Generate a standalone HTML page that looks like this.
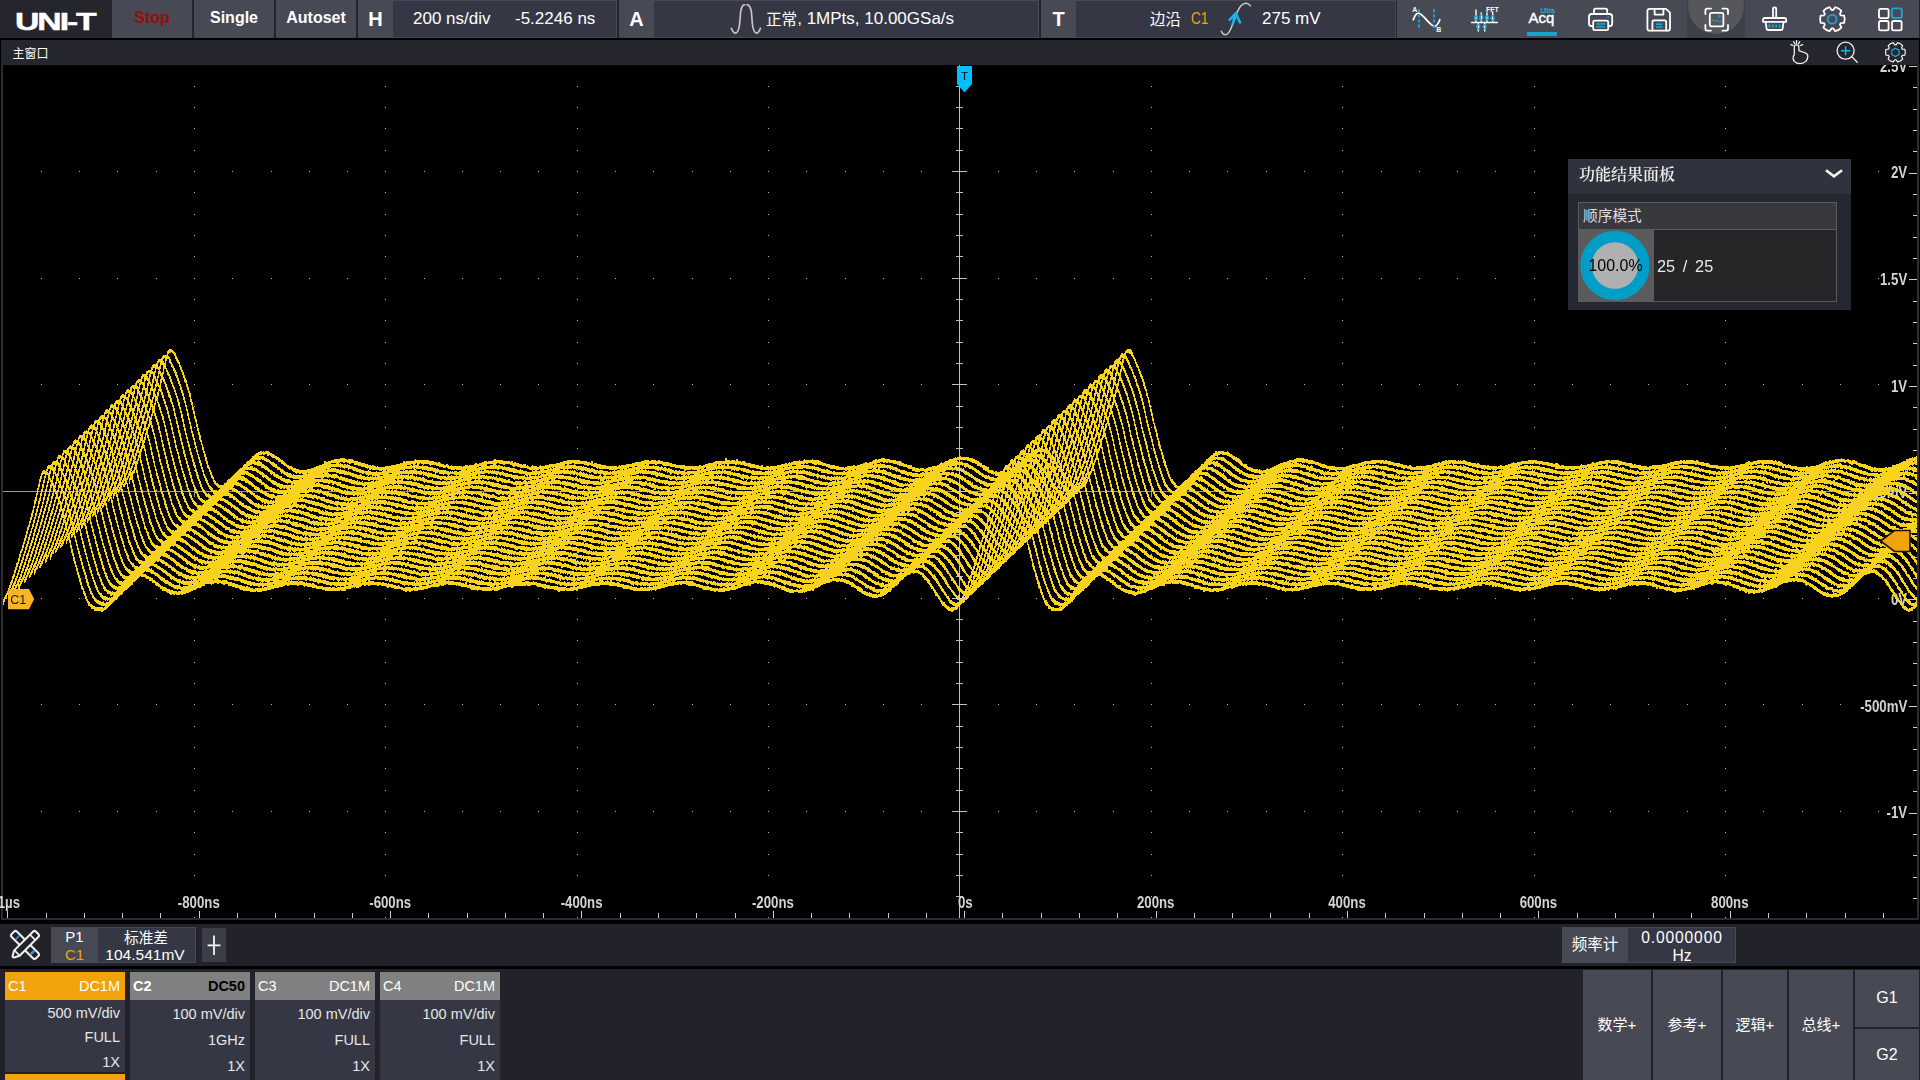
<!DOCTYPE html>
<html lang="zh">
<head>
<meta charset="utf-8">
<title>UNI-T Oscilloscope</title>
<style>
*{box-sizing:border-box;margin:0;padding:0}
html,body{width:1920px;height:1080px;overflow:hidden;background:#000}
body{position:relative;font-family:"Liberation Sans","Noto Sans CJK SC",sans-serif;color:#fff;font-size:16px}
.abs{position:absolute}
/* ---------- top bar ---------- */
#top{position:absolute;left:0;top:0;width:1920px;height:38px;background:#25262d}
#top .btn{position:absolute;top:0;height:38px;background:#474a54;text-align:center;font-weight:bold;font-size:16px;line-height:36px}
#top .grp{position:absolute;top:0;height:38px;background:#474a54}
#top .grp .lab{position:absolute;left:0;top:0;width:35px;height:38px;text-align:center;font-weight:bold;font-size:20px;line-height:38px}
#top .grp .in{position:absolute;top:1px;height:36px;background:#353844;font-size:17px;line-height:36px;white-space:nowrap}
#logo{position:absolute;left:14.6px;top:8.7px;width:60px;height:26px;font-weight:bold;font-size:24.4px;line-height:26px;transform:scaleX(1.385);transform-origin:0 50%;letter-spacing:-1.5px;white-space:nowrap;-webkit-text-stroke:.5px #fff}
.ico{position:absolute;top:0;height:38px}
/* ---------- window title bar ---------- */
#wbar{position:absolute;left:1px;top:40px;width:1918px;height:25px;background:#25262e}
#wbar .t{position:absolute;left:11.5px;top:1px;font-size:12px;line-height:26px}
/* ---------- plot ---------- */
#plot{position:absolute;left:0;top:65px;width:1920px;height:859px;background:#000;overflow:hidden;will-change:transform}
#plot svg{position:absolute;left:0;top:-65px}
/* ---------- result panel ---------- */
#rp{position:absolute;left:1568px;top:159px;width:283px;height:151px;background:rgba(40,43,52,.93)}
#rp .hd{position:absolute;left:0;top:0;width:283px;height:35px;background:rgba(48,52,62,.95)}
#rp .hd .t{position:absolute;left:11px;top:0;font-family:"Liberation Serif","Noto Serif CJK SC",serif;font-weight:600;font-size:16px;line-height:32px;color:#f0f0f0}
#rp .box{position:absolute;left:10px;top:43px;width:259px;height:100px;border:1px solid #5a5b5f;background:#262629}
#rp .box .bt{position:absolute;left:0;top:0;width:257px;height:27px;background:#38393f;border-bottom:1px solid #5a5b5f;font-size:14.7px;line-height:26px;padding-left:4px;color:#ddd}
#rp .box .pc{position:absolute;left:0;top:27px;width:75px;height:71px;background:#5b5b5b}
#rp .box .num{position:absolute;left:78px;top:27px;height:71px;line-height:72px;font-size:16.3px;color:#e8e8e8;white-space:pre;word-spacing:3.2px}
/* ---------- measure bar ---------- */
#mbar{position:absolute;left:0;top:924px;width:1920px;height:42px;background:#22232a}
/* ---------- channel bar ---------- */
#cbar{position:absolute;left:0;top:969px;width:1920px;height:111px;background:#22232a}
.ch{position:absolute;top:3px;width:120px;height:108px;background:#353844}
.ch .h{position:absolute;left:0;top:0;width:120px;height:28px;font-size:14.5px;line-height:28px}
.ch .h .l{position:absolute;left:3px}
.ch .h .r{position:absolute;right:5px}
.ch .v{position:absolute;right:5px;font-size:14.5px;line-height:18px;color:#e6e6e6;white-space:nowrap}
.bb{position:absolute;top:1px;height:110px;background:#474a54;text-align:center;font-size:15px}
</style>
</head>
<body>
<!-- ===== TOP BAR ===== -->
<div id="top">
<div id="logo">UNI-T</div>
<div class="btn" style="left:112px;width:80px;color:#9b0a0a">Stop</div>
<div class="btn" style="left:194px;width:80px">Single</div>
<div class="btn" style="left:276px;width:80px">Autoset</div>
<div class="grp" style="left:358px;width:259px"><div class="lab">H</div>
 <div class="in" style="left:35px;width:223px"><span class="abs" style="left:20px">200 ns/div</span><span class="abs" style="left:122px">-5.2246 ns</span></div></div>
<div class="grp" style="left:619px;width:420px"><div class="lab">A</div>
 <div class="in" style="left:35px;width:384px">
  <svg class="abs" style="left:76px;top:3px" width="32" height="32" viewBox="0 0 32 32"><path d="M1.4 24.4Q3.6 29.4 5.6 29.2Q8.6 28.6 9.6 20L10.6 8Q11.6 1.2 14.6 .6M17 .6Q20.4 1.2 21.4 8L22.4 20Q23.4 28.6 26.4 29.2Q28.4 29.4 30.4 24.4" fill="none" stroke="#c4c4c6" stroke-width="1.7" stroke-linecap="round" stroke-linejoin="round"/></svg>
  <span class="abs" style="left:112px"><span style="font-size:15.6px;position:relative;top:.5px">正常</span>, 1MPts, 10.00GSa/s</span></div></div>
<div class="grp" style="left:1041px;width:355px"><div class="lab">T</div>
 <div class="in" style="left:35px;width:319px"><span class="abs" style="left:74px;font-size:15.4px;top:.5px">边沿</span><span class="abs" style="left:115px;color:#f0a30a;transform:scaleX(.8);transform-origin:0 50%">C1</span>
  <svg class="abs" style="left:142px;top:1px" width="36" height="35" viewBox="0 0 36 35"><path d="M3.3 29.2Q5 33 7.5 32.8Q11 32.4 14 24L19 10.5Q22.5 2 27.5 1.2Q30.5 1 32.4 3.8" fill="none" stroke="#c9c9cb" stroke-width="1.5" stroke-linecap="round"/><path d="M14.7 22L17.8 11.5M11.6 17.8L17.8 11.5L22 20.4" fill="none" stroke="#19b4f0" stroke-width="2.6" stroke-linejoin="round" stroke-linecap="round"/></svg>
  <span class="abs" style="left:186px">275 mV</span></div></div>
<div class="grp" style="left:1397px;width:522px">
<div class="abs" style="left:290px;top:0;width:58px;height:38px;background:#3d3f49;overflow:hidden"><div class="abs" style="left:1px;top:-22px;width:56px;height:56px;border-radius:28px;background:#56575d"></div></div>
<svg class="abs" style="left:0;top:0" width="523" height="38" viewBox="1397 0 523 38" fill="none" stroke="#fff" stroke-width="1.8" stroke-linecap="round" stroke-linejoin="round">
 <!-- 1 cursors -->
 <path d="M1413.3 19.7C1415 15 1417 13.2 1418.6 13.2C1422.5 13.2 1430 26.3 1434.4 26.3C1436.5 26.3 1438.4 23.5 1439.8 19.7"/>
 <path d="M1419 9V30M1434 9V30" stroke="#1ea7d4" stroke-dasharray="3.2 2" stroke-linecap="butt"/>
 <text x="1412.3" y="12.3" stroke="none" fill="#fff" style="font:bold 7px 'Liberation Sans',sans-serif">A</text>
 <text x="1436.3" y="32" stroke="none" fill="#fff" style="font:bold 7px 'Liberation Sans',sans-serif">B</text>
 <!-- 2 FFT -->
 <path d="M1471.5 22.5H1497.5M1476 10V22.5M1481.3 13V22.5M1487 13V22.5M1492.7 12V22.5M1478.3 22.5V31M1484.7 22.5V31" stroke-width="1.4"/>
 <g stroke="#1ea7d4" stroke-width="1.4"><ellipse cx="1476" cy="18" rx="1.4" ry="2"/><ellipse cx="1481.3" cy="17.5" rx="1.4" ry="2.6"/><ellipse cx="1487" cy="18" rx="1.4" ry="2"/><ellipse cx="1492.7" cy="18" rx="1.4" ry="2.2"/><ellipse cx="1478.3" cy="26.7" rx="1.4" ry="2.3"/><ellipse cx="1484.7" cy="26.7" rx="1.4" ry="2"/></g>
 <text x="1486" y="11.5" stroke="none" fill="#fff" style="font:bold 7px 'Liberation Sans',sans-serif">FFT</text>
 <!-- 3 Acq -->
 <text x="1528.6" y="23.4" stroke="#fff" stroke-width=".45" fill="#fff" style="font:14.9px 'Liberation Sans',sans-serif">Acq</text>
 <text x="1540.4" y="12.5" stroke="#1ea7d4" stroke-width=".3" fill="#1ea7d4" style="font:6.8px 'Liberation Sans',sans-serif">Ultra</text>
 <rect x="1527" y="32" width="30" height="4" fill="#1aa3cc" stroke="none"/>
 <!-- 4 printer -->
 <path d="M1594 14V10.2Q1594 8.6 1595.6 8.6H1605.6Q1607.2 8.6 1607.2 10.2V14"/>
 <rect x="1589" y="14" width="23.2" height="12" rx="2.6"/>
 <rect x="1593.2" y="20.6" width="15" height="9.6" rx="1.5" fill="#474a54"/>
 <path d="M1596.3 24H1605M1596.3 26.8H1605" stroke="#1ea7d4" stroke-width="1.5" stroke-linecap="butt"/>
 <circle cx="1608.2" cy="17.2" r="0.9" fill="#1ea7d4" stroke="none"/>
 <!-- 5 save -->
 <path d="M1649.6 8.8H1666L1670 12.6V28.4Q1670 30.6 1667.8 30.6H1649.6Q1647.4 30.6 1647.4 28.4V11Q1647.4 8.8 1649.6 8.8Z"/>
 <path d="M1654.6 8.8V14.6H1663.4V8.8"/>
 <path d="M1652.4 30.6V22Q1652.4 20.4 1654 20.4H1664.6Q1666.2 20.4 1666.2 22V30.6"/>
 <path d="M1656 24.2H1662.4M1656 27H1662.4" stroke="#1ea7d4" stroke-width="1.5" stroke-linecap="butt"/>
 <!-- 6 capture -->
 <path d="M1705.4 14V10.4Q1705.4 8.6 1707.2 8.6H1711M1722.4 8.6H1726.2Q1728 8.6 1728 10.4V14M1728 25V28.8Q1728 30.6 1726.2 30.6H1722.4M1711 30.6H1707.2Q1705.4 30.6 1705.4 28.8V25"/>
 <rect x="1709.8" y="12.8" width="13.6" height="13.6" rx="2"/>
 <path d="M1711.6 21L1713 19.4L1714.3 21L1715.6 20L1716.8 21.4L1718 20.4L1719.4 22L1721.4 21" stroke="#1ea7d4" stroke-width="1"/>
 <path d="M1719.6 15V17.4M1718.4 16.2H1720.8" stroke="#1ea7d4" stroke-width="0.9"/>
 <!-- 7 brush -->
 <rect x="1773" y="7.4" width="3.2" height="10.6" rx="1.6"/>
 <path d="M1765 18H1784.2Q1786.2 18 1786.2 20V21.8H1763V20Q1763 18 1765 18Z"/>
 <path d="M1765.6 21.8L1766.6 28.6Q1766.8 30 1768.2 30H1781Q1782.4 30 1782.6 28.6L1783.6 21.8"/>
 <path d="M1769.4 24.4V27.6M1772.8 24.4V27.6M1776.2 24.4V27.6M1779.6 24.4V27.6" stroke="#1ea7d4" stroke-width="1.7" stroke-linecap="butt"/>
 <!-- 8 gear -->
 <path d="M1833.20 10.04L1835.17 7.22A12.30 12.30 0 0 1 1841.40 10.81L1839.94 13.92A9.20 9.20 0 0 1 1840.74 15.31L1840.74 15.31L1844.16 15.60A12.30 12.30 0 0 1 1844.16 22.80L1840.74 23.09A9.20 9.20 0 0 1 1839.94 24.48L1839.94 24.48L1841.40 27.59A12.30 12.30 0 0 1 1835.17 31.18L1833.20 28.36A9.20 9.20 0 0 1 1831.60 28.36L1831.60 28.36L1829.63 31.18A12.30 12.30 0 0 1 1823.40 27.59L1824.86 24.48A9.20 9.20 0 0 1 1824.06 23.09L1824.06 23.09L1820.64 22.80A12.30 12.30 0 0 1 1820.64 15.60L1824.06 15.31A9.20 9.20 0 0 1 1824.86 13.92L1824.86 13.92L1823.40 10.81A12.30 12.30 0 0 1 1829.63 7.22L1831.60 10.04A9.20 9.20 0 0 1 1833.20 10.04Z"/>
 <circle cx="1832.2" cy="19.3" r="4.4" stroke="#1ea7d4" stroke-width="1.7"/>
 <!-- 9 grid -->
 <rect x="1879" y="8.8" width="9.6" height="9.4" rx="1.6"/>
 <rect x="1879" y="21" width="9.6" height="9.4" rx="1.6"/>
 <rect x="1892" y="21" width="9.6" height="9.4" rx="1.6"/>
 <rect x="1892" y="8.4" width="9.8" height="9.4" rx="1.6" stroke="#1ea7d4"/>
</svg>

</div>

</div>
<div class="abs" style="left:0;top:38px;width:1920px;height:2px;background:#000"></div>
<!-- ===== WINDOW BAR ===== -->
<div id="wbar"><div class="t">主窗口</div>
<svg class="abs" style="left:1779px;top:0" width="140" height="25" viewBox="1780 40 140 25" fill="none" stroke="#f2f2f2" stroke-width="1.3" stroke-linecap="round" stroke-linejoin="round">
 <!-- tap hand -->
 <path d="M1794.3 54.8V47Q1794.3 44.9 1796.6 44.9Q1798.9 44.9 1798.9 47V50.6L1805.6 53Q1808 54 1807.8 56.6Q1807.6 59.6 1805.8 61.4Q1803.6 63.6 1800 63.6Q1796.6 63.6 1794.6 61.6Q1792.6 59.4 1793.2 56.8Q1793.5 55.5 1794.3 54.8"/>
 <path d="M1796.6 40.6V43.6M1793.7 41.7L1794.8 43.8M1799.7 41.7L1798.6 43.8M1790.8 44.6L1793 45.4M1802.6 44.6L1800.4 45.5" stroke-width="1.3"/>
 <!-- zoom -->
 <circle cx="1845.6" cy="50.7" r="8.5"/>
 <path d="M1851.8 56.6L1857.2 62.2"/>
 <path d="M1841 50.7H1850.2M1845.6 46.2V55.2" stroke="#19b4f0" stroke-width="1.5" stroke-linecap="butt"/>
 <!-- gear -->
 <path d="M1896.05 44.83L1897.63 42.65A9.90 9.90 0 0 1 1902.64 45.55L1901.54 48.00A7.50 7.50 0 0 1 1902.20 49.13L1902.20 49.13L1904.87 49.41A9.90 9.90 0 0 1 1904.87 55.19L1902.20 55.47A7.50 7.50 0 0 1 1901.54 56.60L1901.54 56.60L1902.64 59.05A9.90 9.90 0 0 1 1897.63 61.95L1896.05 59.77A7.50 7.50 0 0 1 1894.75 59.77L1894.75 59.77L1893.17 61.95A9.90 9.90 0 0 1 1888.16 59.05L1889.26 56.60A7.50 7.50 0 0 1 1888.60 55.47L1888.60 55.47L1885.93 55.19A9.90 9.90 0 0 1 1885.93 49.41L1888.60 49.13A7.50 7.50 0 0 1 1889.26 48.00L1889.26 48.00L1888.16 45.55A9.90 9.90 0 0 1 1893.17 42.65L1894.75 44.83A7.50 7.50 0 0 1 1896.05 44.83Z" stroke-width="1.2"/>
 <path d="M1895.4 48.2L1899 50.3V54.4L1895.4 56.5L1891.8 54.4V50.3Z" stroke="#19b4f0" stroke-width="1.1"/>
</svg>

</div>
<!-- ===== PLOT ===== -->
<div id="plot">
<svg width="1920" height="1080" viewBox="0 0 1920 1080">
<rect x="1" y="65" width="2" height="855" fill="#2a2b35"/>
<rect x="1917" y="65" width="2" height="855" fill="#2a2b35"/>
<rect x="1" y="918" width="1918" height="2" fill="#2a2b35"/>
<path d="M41 171.5h1M79 171.5h1M117 171.5h1M156 171.5h1M194 171.5h1M232 171.5h1M271 171.5h1M309 171.5h1M347 171.5h1M385 171.5h1M424 171.5h1M462 171.5h1M500 171.5h1M538 171.5h1M577 171.5h1M615 171.5h1M653 171.5h1M692 171.5h1M730 171.5h1M768 171.5h1M806 171.5h1M845 171.5h1M883 171.5h1M921 171.5h1M998 171.5h1M1036 171.5h1M1074 171.5h1M1113 171.5h1M1151 171.5h1M1189 171.5h1M1227 171.5h1M1266 171.5h1M1304 171.5h1M1342 171.5h1M1381 171.5h1M1419 171.5h1M1457 171.5h1M1495 171.5h1M1534 171.5h1M1572 171.5h1M1610 171.5h1M1648 171.5h1M1687 171.5h1M1725 171.5h1M1763 171.5h1M1802 171.5h1M1840 171.5h1M1878 171.5h1M41 278.5h1M79 278.5h1M117 278.5h1M156 278.5h1M194 278.5h1M232 278.5h1M271 278.5h1M309 278.5h1M347 278.5h1M385 278.5h1M424 278.5h1M462 278.5h1M500 278.5h1M538 278.5h1M577 278.5h1M615 278.5h1M653 278.5h1M692 278.5h1M730 278.5h1M768 278.5h1M806 278.5h1M845 278.5h1M883 278.5h1M921 278.5h1M998 278.5h1M1036 278.5h1M1074 278.5h1M1113 278.5h1M1151 278.5h1M1189 278.5h1M1227 278.5h1M1266 278.5h1M1304 278.5h1M1342 278.5h1M1381 278.5h1M1419 278.5h1M1457 278.5h1M1495 278.5h1M1534 278.5h1M1572 278.5h1M1610 278.5h1M1648 278.5h1M1687 278.5h1M1725 278.5h1M1763 278.5h1M1802 278.5h1M1840 278.5h1M1878 278.5h1M41 384.5h1M79 384.5h1M117 384.5h1M156 384.5h1M194 384.5h1M232 384.5h1M271 384.5h1M309 384.5h1M347 384.5h1M385 384.5h1M424 384.5h1M462 384.5h1M500 384.5h1M538 384.5h1M577 384.5h1M615 384.5h1M653 384.5h1M692 384.5h1M730 384.5h1M768 384.5h1M806 384.5h1M845 384.5h1M883 384.5h1M921 384.5h1M998 384.5h1M1036 384.5h1M1074 384.5h1M1113 384.5h1M1151 384.5h1M1189 384.5h1M1227 384.5h1M1266 384.5h1M1304 384.5h1M1342 384.5h1M1381 384.5h1M1419 384.5h1M1457 384.5h1M1495 384.5h1M1534 384.5h1M1572 384.5h1M1610 384.5h1M1648 384.5h1M1687 384.5h1M1725 384.5h1M1763 384.5h1M1802 384.5h1M1840 384.5h1M1878 384.5h1M41 491.5h1M79 491.5h1M117 491.5h1M156 491.5h1M194 491.5h1M232 491.5h1M271 491.5h1M309 491.5h1M347 491.5h1M385 491.5h1M424 491.5h1M462 491.5h1M500 491.5h1M538 491.5h1M577 491.5h1M615 491.5h1M653 491.5h1M692 491.5h1M730 491.5h1M768 491.5h1M806 491.5h1M845 491.5h1M883 491.5h1M921 491.5h1M998 491.5h1M1036 491.5h1M1074 491.5h1M1113 491.5h1M1151 491.5h1M1189 491.5h1M1227 491.5h1M1266 491.5h1M1304 491.5h1M1342 491.5h1M1381 491.5h1M1419 491.5h1M1457 491.5h1M1495 491.5h1M1534 491.5h1M1572 491.5h1M1610 491.5h1M1648 491.5h1M1687 491.5h1M1725 491.5h1M1763 491.5h1M1802 491.5h1M1840 491.5h1M1878 491.5h1M41 598.5h1M79 598.5h1M117 598.5h1M156 598.5h1M194 598.5h1M232 598.5h1M271 598.5h1M309 598.5h1M347 598.5h1M385 598.5h1M424 598.5h1M462 598.5h1M500 598.5h1M538 598.5h1M577 598.5h1M615 598.5h1M653 598.5h1M692 598.5h1M730 598.5h1M768 598.5h1M806 598.5h1M845 598.5h1M883 598.5h1M921 598.5h1M998 598.5h1M1036 598.5h1M1074 598.5h1M1113 598.5h1M1151 598.5h1M1189 598.5h1M1227 598.5h1M1266 598.5h1M1304 598.5h1M1342 598.5h1M1381 598.5h1M1419 598.5h1M1457 598.5h1M1495 598.5h1M1534 598.5h1M1572 598.5h1M1610 598.5h1M1648 598.5h1M1687 598.5h1M1725 598.5h1M1763 598.5h1M1802 598.5h1M1840 598.5h1M1878 598.5h1M41 704.5h1M79 704.5h1M117 704.5h1M156 704.5h1M194 704.5h1M232 704.5h1M271 704.5h1M309 704.5h1M347 704.5h1M385 704.5h1M424 704.5h1M462 704.5h1M500 704.5h1M538 704.5h1M577 704.5h1M615 704.5h1M653 704.5h1M692 704.5h1M730 704.5h1M768 704.5h1M806 704.5h1M845 704.5h1M883 704.5h1M921 704.5h1M998 704.5h1M1036 704.5h1M1074 704.5h1M1113 704.5h1M1151 704.5h1M1189 704.5h1M1227 704.5h1M1266 704.5h1M1304 704.5h1M1342 704.5h1M1381 704.5h1M1419 704.5h1M1457 704.5h1M1495 704.5h1M1534 704.5h1M1572 704.5h1M1610 704.5h1M1648 704.5h1M1687 704.5h1M1725 704.5h1M1763 704.5h1M1802 704.5h1M1840 704.5h1M1878 704.5h1M41 811.5h1M79 811.5h1M117 811.5h1M156 811.5h1M194 811.5h1M232 811.5h1M271 811.5h1M309 811.5h1M347 811.5h1M385 811.5h1M424 811.5h1M462 811.5h1M500 811.5h1M538 811.5h1M577 811.5h1M615 811.5h1M653 811.5h1M692 811.5h1M730 811.5h1M768 811.5h1M806 811.5h1M845 811.5h1M883 811.5h1M921 811.5h1M998 811.5h1M1036 811.5h1M1074 811.5h1M1113 811.5h1M1151 811.5h1M1189 811.5h1M1227 811.5h1M1266 811.5h1M1304 811.5h1M1342 811.5h1M1381 811.5h1M1419 811.5h1M1457 811.5h1M1495 811.5h1M1534 811.5h1M1572 811.5h1M1610 811.5h1M1648 811.5h1M1687 811.5h1M1725 811.5h1M1763 811.5h1M1802 811.5h1M1840 811.5h1M1878 811.5h1M194 86.5h1M194 107.5h1M194 128.5h1M194 150.5h1M194 192.5h1M194 214.5h1M194 235.5h1M194 256.5h1M194 299.5h1M194 320.5h1M194 342.5h1M194 363.5h1M194 406.5h1M194 427.5h1M194 448.5h1M194 470.5h1M194 512.5h1M194 534.5h1M194 555.5h1M194 576.5h1M194 619.5h1M194 640.5h1M194 662.5h1M194 683.5h1M194 726.5h1M194 747.5h1M194 768.5h1M194 790.5h1M194 832.5h1M194 854.5h1M194 875.5h1M194 896.5h1M194 917.5h1M385 86.5h1M385 107.5h1M385 128.5h1M385 150.5h1M385 192.5h1M385 214.5h1M385 235.5h1M385 256.5h1M385 299.5h1M385 320.5h1M385 342.5h1M385 363.5h1M385 406.5h1M385 427.5h1M385 448.5h1M385 470.5h1M385 512.5h1M385 534.5h1M385 555.5h1M385 576.5h1M385 619.5h1M385 640.5h1M385 662.5h1M385 683.5h1M385 726.5h1M385 747.5h1M385 768.5h1M385 790.5h1M385 832.5h1M385 854.5h1M385 875.5h1M385 896.5h1M385 917.5h1M577 86.5h1M577 107.5h1M577 128.5h1M577 150.5h1M577 192.5h1M577 214.5h1M577 235.5h1M577 256.5h1M577 299.5h1M577 320.5h1M577 342.5h1M577 363.5h1M577 406.5h1M577 427.5h1M577 448.5h1M577 470.5h1M577 512.5h1M577 534.5h1M577 555.5h1M577 576.5h1M577 619.5h1M577 640.5h1M577 662.5h1M577 683.5h1M577 726.5h1M577 747.5h1M577 768.5h1M577 790.5h1M577 832.5h1M577 854.5h1M577 875.5h1M577 896.5h1M577 917.5h1M768 86.5h1M768 107.5h1M768 128.5h1M768 150.5h1M768 192.5h1M768 214.5h1M768 235.5h1M768 256.5h1M768 299.5h1M768 320.5h1M768 342.5h1M768 363.5h1M768 406.5h1M768 427.5h1M768 448.5h1M768 470.5h1M768 512.5h1M768 534.5h1M768 555.5h1M768 576.5h1M768 619.5h1M768 640.5h1M768 662.5h1M768 683.5h1M768 726.5h1M768 747.5h1M768 768.5h1M768 790.5h1M768 832.5h1M768 854.5h1M768 875.5h1M768 896.5h1M768 917.5h1M1151 86.5h1M1151 107.5h1M1151 128.5h1M1151 150.5h1M1151 192.5h1M1151 214.5h1M1151 235.5h1M1151 256.5h1M1151 299.5h1M1151 320.5h1M1151 342.5h1M1151 363.5h1M1151 406.5h1M1151 427.5h1M1151 448.5h1M1151 470.5h1M1151 512.5h1M1151 534.5h1M1151 555.5h1M1151 576.5h1M1151 619.5h1M1151 640.5h1M1151 662.5h1M1151 683.5h1M1151 726.5h1M1151 747.5h1M1151 768.5h1M1151 790.5h1M1151 832.5h1M1151 854.5h1M1151 875.5h1M1151 896.5h1M1151 917.5h1M1342 86.5h1M1342 107.5h1M1342 128.5h1M1342 150.5h1M1342 192.5h1M1342 214.5h1M1342 235.5h1M1342 256.5h1M1342 299.5h1M1342 320.5h1M1342 342.5h1M1342 363.5h1M1342 406.5h1M1342 427.5h1M1342 448.5h1M1342 470.5h1M1342 512.5h1M1342 534.5h1M1342 555.5h1M1342 576.5h1M1342 619.5h1M1342 640.5h1M1342 662.5h1M1342 683.5h1M1342 726.5h1M1342 747.5h1M1342 768.5h1M1342 790.5h1M1342 832.5h1M1342 854.5h1M1342 875.5h1M1342 896.5h1M1342 917.5h1M1534 86.5h1M1534 107.5h1M1534 128.5h1M1534 150.5h1M1534 192.5h1M1534 214.5h1M1534 235.5h1M1534 256.5h1M1534 299.5h1M1534 320.5h1M1534 342.5h1M1534 363.5h1M1534 406.5h1M1534 427.5h1M1534 448.5h1M1534 470.5h1M1534 512.5h1M1534 534.5h1M1534 555.5h1M1534 576.5h1M1534 619.5h1M1534 640.5h1M1534 662.5h1M1534 683.5h1M1534 726.5h1M1534 747.5h1M1534 768.5h1M1534 790.5h1M1534 832.5h1M1534 854.5h1M1534 875.5h1M1534 896.5h1M1534 917.5h1M1725 86.5h1M1725 107.5h1M1725 128.5h1M1725 150.5h1M1725 192.5h1M1725 214.5h1M1725 235.5h1M1725 256.5h1M1725 299.5h1M1725 320.5h1M1725 342.5h1M1725 363.5h1M1725 406.5h1M1725 427.5h1M1725 448.5h1M1725 470.5h1M1725 512.5h1M1725 534.5h1M1725 555.5h1M1725 576.5h1M1725 619.5h1M1725 640.5h1M1725 662.5h1M1725 683.5h1M1725 726.5h1M1725 747.5h1M1725 768.5h1M1725 790.5h1M1725 832.5h1M1725 854.5h1M1725 875.5h1M1725 896.5h1M1725 917.5h1" stroke="#b9bcc8" stroke-width="1" shape-rendering="crispEdges" fill="none"/>
<path d="M1909 66.5h8M1913 87.5h4M1913 109.5h4M1913 130.5h4M1913 151.5h4M1909 173.5h8M1913 194.5h4M1913 215.5h4M1913 237.5h4M1913 258.5h4M1909 279.5h8M1913 301.5h4M1913 322.5h4M1913 343.5h4M1913 365.5h4M1909 386.5h8M1913 407.5h4M1913 429.5h4M1913 450.5h4M1913 471.5h4M1909 493.5h8M1913 514.5h4M1913 535.5h4M1913 557.5h4M1913 578.5h4M1909 599.5h8M1913 621.5h4M1913 642.5h4M1913 663.5h4M1913 685.5h4M1909 706.5h8M1913 727.5h4M1913 749.5h4M1913 770.5h4M1913 791.5h4M1909 813.5h8M1913 834.5h4M1913 855.5h4M1913 877.5h4M1913 898.5h4M7.5 911v7M46.5 913v5M84.5 913v5M122.5 913v5M160.5 913v5M199.5 911v7M237.5 913v5M275.5 913v5M314.5 913v5M352.5 913v5M390.5 911v7M428.5 913v5M467.5 913v5M505.5 913v5M543.5 913v5M581.5 911v7M620.5 913v5M658.5 913v5M696.5 913v5M735.5 913v5M773.5 911v7M811.5 913v5M849.5 913v5M888.5 913v5M926.5 913v5M964.5 911v7M1002.5 913v5M1041.5 913v5M1079.5 913v5M1117.5 913v5M1156.5 911v7M1194.5 913v5M1232.5 913v5M1270.5 913v5M1309.5 913v5M1347.5 911v7M1385.5 913v5M1424.5 913v5M1462.5 913v5M1500.5 913v5M1538.5 911v7M1577.5 913v5M1615.5 913v5M1653.5 913v5M1691.5 913v5M1730.5 911v7M1768.5 913v5M1806.5 913v5M1845.5 913v5M1883.5 913v5" stroke="#cfcfcf" stroke-width="1" shape-rendering="crispEdges" fill="none"/><path d="M3 491.5H1917M41.5 489v3M79.5 489v3M117.5 489v3M156.5 489v3M194.5 487v10M232.5 489v3M271.5 489v3M309.5 489v3M347.5 489v3M385.5 487v10M424.5 489v3M462.5 489v3M500.5 489v3M538.5 489v3M577.5 487v10M615.5 489v3M653.5 489v3M692.5 489v3M730.5 489v3M768.5 487v10M806.5 489v3M845.5 489v3M883.5 489v3M921.5 489v3M960.5 487v10M998.5 489v3M1036.5 489v3M1074.5 489v3M1113.5 489v3M1151.5 487v10M1189.5 489v3M1227.5 489v3M1266.5 489v3M1304.5 489v3M1342.5 487v10M1381.5 489v3M1419.5 489v3M1457.5 489v3M1495.5 489v3M1534.5 487v10M1572.5 489v3M1610.5 489v3M1648.5 489v3M1687.5 489v3M1725.5 487v10M1763.5 489v3M1802.5 489v3M1840.5 489v3M1878.5 489v3" stroke="#9a9a9a" stroke-width="1" shape-rendering="crispEdges" fill="none"/>
<text x="1907.2" y="71.6" text-anchor="end" textLength="27.2" lengthAdjust="spacingAndGlyphs" style="font-family:'Liberation Sans',sans-serif;font-weight:bold;font-size:16px;fill:#d4d4d4">2.5V</text>
<text x="1907.2" y="178.3" text-anchor="end" textLength="16.2" lengthAdjust="spacingAndGlyphs" style="font-family:'Liberation Sans',sans-serif;font-weight:bold;font-size:16px;fill:#d4d4d4">2V</text>
<text x="1907.2" y="284.9" text-anchor="end" textLength="27.2" lengthAdjust="spacingAndGlyphs" style="font-family:'Liberation Sans',sans-serif;font-weight:bold;font-size:16px;fill:#d4d4d4">1.5V</text>
<text x="1907.2" y="391.6" text-anchor="end" textLength="16.2" lengthAdjust="spacingAndGlyphs" style="font-family:'Liberation Sans',sans-serif;font-weight:bold;font-size:16px;fill:#d4d4d4">1V</text>
<text x="1907.2" y="498.3" text-anchor="end" textLength="42.6" lengthAdjust="spacingAndGlyphs" style="font-family:'Liberation Sans',sans-serif;font-weight:bold;font-size:16px;fill:#d4d4d4">500mV</text>
<text x="1907.2" y="604.9" text-anchor="end" textLength="16.2" lengthAdjust="spacingAndGlyphs" style="font-family:'Liberation Sans',sans-serif;font-weight:bold;font-size:16px;fill:#d4d4d4">0V</text>
<text x="1907.2" y="711.6" text-anchor="end" textLength="47.0" lengthAdjust="spacingAndGlyphs" style="font-family:'Liberation Sans',sans-serif;font-weight:bold;font-size:16px;fill:#d4d4d4">-500mV</text>
<text x="1907.2" y="818.3" text-anchor="end" textLength="20.6" lengthAdjust="spacingAndGlyphs" style="font-family:'Liberation Sans',sans-serif;font-weight:bold;font-size:16px;fill:#d4d4d4">-1V</text>
<text x="20" y="907.8" text-anchor="end" textLength="26.7" lengthAdjust="spacingAndGlyphs" style="font-family:'Liberation Sans',sans-serif;font-weight:bold;font-size:16px;fill:#d4d4d4">-1µs</text>
<text x="198.8" y="907.8" text-anchor="middle" textLength="41.9" lengthAdjust="spacingAndGlyphs" style="font-family:'Liberation Sans',sans-serif;font-weight:bold;font-size:16px;fill:#d4d4d4">-800ns</text>
<text x="390.2" y="907.8" text-anchor="middle" textLength="41.9" lengthAdjust="spacingAndGlyphs" style="font-family:'Liberation Sans',sans-serif;font-weight:bold;font-size:16px;fill:#d4d4d4">-600ns</text>
<text x="581.6" y="907.8" text-anchor="middle" textLength="41.9" lengthAdjust="spacingAndGlyphs" style="font-family:'Liberation Sans',sans-serif;font-weight:bold;font-size:16px;fill:#d4d4d4">-400ns</text>
<text x="772.9" y="907.8" text-anchor="middle" textLength="41.9" lengthAdjust="spacingAndGlyphs" style="font-family:'Liberation Sans',sans-serif;font-weight:bold;font-size:16px;fill:#d4d4d4">-200ns</text>
<text x="958" y="907.8" textLength="14.7" lengthAdjust="spacingAndGlyphs" style="font-family:'Liberation Sans',sans-serif;font-weight:bold;font-size:16px;fill:#d4d4d4">0s</text>
<text x="1155.7" y="907.8" text-anchor="middle" textLength="37.5" lengthAdjust="spacingAndGlyphs" style="font-family:'Liberation Sans',sans-serif;font-weight:bold;font-size:16px;fill:#d4d4d4">200ns</text>
<text x="1347.0" y="907.8" text-anchor="middle" textLength="37.5" lengthAdjust="spacingAndGlyphs" style="font-family:'Liberation Sans',sans-serif;font-weight:bold;font-size:16px;fill:#d4d4d4">400ns</text>
<text x="1538.4" y="907.8" text-anchor="middle" textLength="37.5" lengthAdjust="spacingAndGlyphs" style="font-family:'Liberation Sans',sans-serif;font-weight:bold;font-size:16px;fill:#d4d4d4">600ns</text>
<text x="1729.8" y="907.8" text-anchor="middle" textLength="37.5" lengthAdjust="spacingAndGlyphs" style="font-family:'Liberation Sans',sans-serif;font-weight:bold;font-size:16px;fill:#d4d4d4">800ns</text>
<defs>
<polygon id="w0" points="3,599.6 4,599.9 5,596.8 6,595.3 7,592.7 8,591.0 9,588.2 10,585.3 11,582.6 12,580.1 13,576.0 14,573.8 15,570.3 16,567.6 17,563.6 18,562.3 19,558.0 20,554.3 21,551.0 22,548.7 23,544.9 24,542.6 25,538.4 26,535.5 27,530.7 28,527.3 29,524.8 30,520.7 31,517.4 32,513.4 33,510.4 34,505.9 35,500.4 36,497.6 37,492.9 38,487.6 39,483.8 40,479.5 41,475.8 42,472.8 43,471.1 44,470.3 45,470.9 46,471.4 47,472.4 48,473.1 49,473.8 50,477.6 51,479.7 52,481.3 53,483.6 54,485.8 55,488.7 56,491.0 57,493.7 58,496.7 59,499.2 60,501.4 61,505.5 62,508.7 63,512.1 64,514.6 65,519.9 66,523.7 67,528.6 68,532.6 69,537.0 70,540.3 71,545.1 72,549.1 73,553.4 74,556.6 75,561.0 76,565.2 77,568.4 78,571.9 79,575.3 80,578.4 81,582.3 82,586.4 83,588.4 84,591.5 85,593.1 86,596.2 87,598.6 88,601.2 89,602.3 90,604.1 91,604.7 92,605.5 93,606.3 94,606.3 95,607.0 96,607.4 97,606.8 98,607.8 99,607.8 100,607.6 101,608.6 102,606.7 103,608.2 104,607.9 105,607.3 106,606.2 107,605.8 108,604.0 109,603.2 110,601.4 111,600.2 112,599.0 113,597.3 114,595.2 115,594.4 116,592.7 117,591.2 118,589.3 119,588.1 120,586.2 121,585.9 122,583.7 123,582.5 124,581.6 125,580.6 126,579.4 127,577.4 128,577.1 129,576.5 130,575.6 131,574.6 132,574.5 133,573.4 134,573.4 135,572.1 136,573.5 137,573.1 138,573.3 139,573.2 140,573.0 141,573.1 142,572.5 143,574.5 144,573.9 145,575.0 146,574.9 147,576.0 148,576.2 149,577.1 150,577.4 151,578.1 152,578.5 153,580.0 154,580.4 155,581.0 156,581.9 157,582.9 158,583.1 159,584.2 160,584.9 161,586.3 162,586.6 163,586.9 164,588.2 165,587.6 166,588.0 167,589.8 168,589.8 169,589.5 170,590.5 171,590.6 172,590.5 173,591.3 174,591.5 175,592.5 176,591.0 177,592.0 178,592.2 179,591.4 180,592.2 181,591.3 182,590.8 183,591.9 184,590.4 185,590.8 186,589.7 187,589.7 188,589.3 189,588.9 190,588.9 191,587.3 192,587.9 193,587.7 194,586.5 195,586.5 196,586.6 197,585.7 198,585.1 199,582.6 200,584.2 201,584.0 202,583.0 203,583.4 204,582.3 205,582.6 206,581.4 207,582.0 208,581.4 209,580.8 210,581.2 211,580.9 212,580.8 213,581.1 214,580.5 215,579.1 216,580.0 217,579.7 218,579.7 219,580.4 220,580.5 221,581.5 222,581.1 223,580.5 224,580.7 225,581.2 226,580.1 227,581.7 228,582.5 229,583.3 230,582.7 231,582.5 232,583.3 233,584.0 234,583.1 235,584.8 236,584.7 237,584.1 238,585.2 239,585.0 240,585.6 241,585.5 242,586.6 243,587.0 244,586.2 245,587.7 246,588.6 247,586.6 248,588.4 249,587.6 250,588.8 251,588.7 252,587.9 253,589.3 254,589.0 255,589.2 256,588.4 257,588.7 258,588.2 259,588.2 260,588.1 261,588.0 262,588.0 263,587.9 264,588.4 265,587.6 266,586.8 267,587.6 268,586.5 269,587.3 270,586.2 271,585.9 272,585.8 273,585.7 274,585.6 275,584.8 276,585.0 277,584.7 278,582.7 279,584.1 280,583.5 281,583.0 282,583.3 283,582.5 284,582.3 285,582.2 286,582.8 287,582.9 288,582.2 289,580.9 290,581.7 291,581.2 292,582.0 293,581.6 294,581.3 295,581.6 296,582.3 297,581.0 298,582.0 299,582.2 300,581.8 301,581.5 302,581.4 303,582.9 304,582.1 305,583.5 306,582.9 307,583.1 308,583.1 309,583.6 310,583.1 311,584.3 312,584.2 313,583.2 314,584.4 315,585.5 316,585.4 317,586.1 318,586.0 319,586.6 320,586.1 321,586.3 322,585.9 323,587.6 324,587.5 325,587.1 326,587.3 327,588.0 328,587.6 329,587.6 330,587.5 331,588.1 332,588.0 333,587.9 334,588.1 335,587.8 336,588.4 337,588.2 338,587.3 339,587.9 340,586.7 341,587.0 342,587.1 343,587.4 344,587.0 345,586.2 346,587.1 347,586.5 348,586.1 349,585.7 350,584.9 351,585.2 352,585.2 353,585.3 354,584.5 355,585.1 356,584.1 357,583.5 358,583.8 359,582.9 360,582.1 361,583.5 362,583.2 363,582.3 364,582.5 365,582.7 366,582.1 367,582.4 368,582.0 369,580.9 370,581.4 371,581.6 372,581.8 373,582.1 374,581.8 375,582.4 376,582.0 377,582.2 378,582.6 379,582.5 380,583.1 381,582.8 382,583.6 383,582.7 384,583.6 385,584.0 386,582.8 387,584.2 388,584.2 389,583.8 390,585.0 391,584.3 392,584.2 393,585.5 394,585.3 395,585.7 396,586.3 397,586.4 398,585.8 399,585.8 400,587.2 401,587.2 402,587.1 403,588.3 404,588.4 405,588.4 406,587.5 407,587.0 408,587.6 409,587.8 410,587.7 411,588.4 412,588.5 413,588.7 414,586.9 415,587.2 416,587.2 417,588.4 418,587.7 419,587.4 420,586.6 421,586.8 422,586.7 423,586.3 424,585.9 425,586.3 426,586.0 427,585.2 428,585.2 429,585.9 430,585.1 431,585.1 432,584.6 433,585.0 434,584.8 435,583.5 436,584.4 437,583.5 438,582.9 439,582.4 440,583.4 441,582.2 442,582.0 443,581.9 444,581.0 445,582.5 446,581.3 447,581.9 448,581.7 449,581.8 450,581.6 451,582.1 452,581.4 453,581.7 454,582.1 455,583.0 456,582.8 457,582.8 458,582.4 459,583.0 460,582.2 461,583.8 462,583.6 463,583.8 464,584.0 465,584.8 466,582.5 467,585.2 468,585.4 469,584.8 470,584.4 471,585.8 472,585.7 473,585.8 474,585.4 475,586.3 476,587.2 477,586.1 478,586.6 479,586.8 480,587.3 481,587.7 482,588.2 483,587.2 484,587.6 485,588.0 486,587.0 487,588.3 488,587.6 489,588.3 490,587.7 491,588.3 492,588.3 493,587.0 494,587.5 495,587.4 496,586.9 497,586.2 498,586.8 499,587.2 500,586.2 501,586.1 502,585.9 503,586.1 504,585.8 505,586.0 506,585.0 507,585.2 508,585.0 509,584.5 510,583.9 511,584.0 512,583.7 513,583.8 514,583.8 515,583.7 516,582.5 517,582.4 518,582.2 519,581.2 520,582.4 521,581.7 522,582.0 523,582.5 524,582.3 525,582.2 526,581.8 527,582.1 528,581.8 529,582.0 530,582.3 531,582.3 532,582.2 533,581.9 534,582.0 535,583.0 536,582.6 537,583.2 538,583.8 539,583.3 540,583.7 541,584.5 542,583.9 543,584.2 544,584.3 545,584.2 546,585.1 547,585.6 548,586.4 549,585.5 550,586.3 551,586.5 552,586.2 553,586.7 554,586.4 555,586.6 556,586.9 557,586.6 558,587.1 559,587.3 560,587.7 561,587.6 562,587.5 563,588.0 564,587.4 565,587.5 566,588.3 567,587.9 568,588.2 569,587.9 570,588.8 571,587.2 572,588.2 573,587.6 574,586.4 575,587.5 576,587.4 577,587.3 578,586.4 579,586.3 580,585.4 581,586.4 582,585.3 583,584.9 584,584.5 585,584.5 586,584.5 587,584.5 588,583.8 589,583.3 590,582.8 591,583.1 592,582.8 593,582.4 594,582.9 595,582.1 596,582.8 597,582.1 598,582.4 599,582.2 600,579.7 601,581.8 602,581.6 603,581.1 604,582.1 605,582.7 606,581.6 607,582.3 608,581.8 609,582.0 610,582.6 611,580.6 612,582.2 613,583.0 614,582.6 615,583.1 616,583.5 617,582.8 618,582.6 619,583.2 620,584.4 621,584.3 622,584.7 623,585.0 624,584.9 625,585.6 626,585.1 627,585.5 628,585.5 629,586.6 630,586.5 631,586.4 632,587.2 633,587.1 634,587.7 635,588.1 636,586.8 637,588.8 638,588.0 639,588.6 640,588.0 641,587.9 642,587.6 643,588.1 644,588.6 645,587.3 646,588.2 647,588.1 648,587.8 649,588.1 650,587.1 651,587.4 652,586.9 653,587.4 654,586.7 655,586.3 656,585.9 657,586.4 658,585.4 659,585.3 660,584.8 661,585.1 662,585.8 663,584.2 664,584.0 665,584.7 666,583.7 667,584.8 668,582.7 669,582.9 670,582.5 671,582.5 672,582.9 673,582.0 674,582.1 675,582.9 676,582.6 677,582.4 678,580.9 679,581.6 680,582.1 681,581.3 682,581.5 683,581.2 684,581.4 685,581.7 686,581.0 687,580.9 688,582.2 689,581.2 690,582.0 691,581.7 692,581.4 693,582.1 694,582.9 695,583.9 696,583.9 697,584.6 698,584.6 699,584.5 700,585.4 701,585.8 702,585.3 703,585.8 704,586.5 705,586.5 706,586.9 707,586.5 708,586.5 709,587.6 710,588.0 711,587.8 712,588.1 713,588.2 714,588.3 715,588.5 716,588.4 717,588.2 718,589.5 719,589.1 720,588.9 721,588.2 722,588.0 723,588.2 724,587.2 725,588.0 726,588.0 727,588.5 728,586.6 729,588.2 730,587.4 731,587.2 732,586.1 733,587.0 734,586.2 735,585.8 736,586.6 737,585.8 738,584.5 739,584.9 740,583.9 741,584.2 742,584.3 743,584.5 744,583.7 745,583.4 746,583.2 747,582.3 748,581.7 749,581.7 750,580.7 751,581.6 752,581.6 753,580.8 754,581.0 755,580.6 756,579.5 757,580.1 758,580.1 759,580.1 760,580.6 761,581.0 762,580.5 763,580.4 764,581.4 765,581.4 766,581.1 767,581.9 768,582.1 769,581.5 770,583.0 771,582.7 772,583.0 773,583.0 774,582.7 775,583.5 776,584.9 777,584.8 778,585.2 779,585.8 780,585.9 781,586.0 782,587.0 783,586.4 784,587.0 785,586.9 786,587.9 787,589.0 788,588.2 789,589.2 790,589.6 791,589.4 792,589.6 793,591.0 794,590.5 795,589.9 796,590.6 797,589.7 798,590.3 799,590.9 800,590.2 801,589.7 802,590.2 803,588.3 804,588.9 805,589.1 806,588.1 807,587.7 808,588.7 809,587.6 810,587.8 811,587.4 812,586.8 813,586.1 814,585.5 815,584.5 816,584.0 817,584.7 818,584.0 819,583.9 820,582.9 821,583.3 822,582.7 823,581.9 824,580.3 825,580.3 826,580.2 827,580.2 828,579.9 829,579.0 830,579.1 831,579.5 832,578.8 833,578.0 834,577.9 835,578.3 836,578.3 837,578.2 838,578.9 839,578.3 840,579.2 841,578.9 842,578.1 843,578.9 844,580.2 845,579.8 846,579.9 847,580.4 848,580.6 849,581.3 850,581.8 851,582.6 852,582.9 853,583.0 854,584.8 855,584.8 856,586.2 857,586.2 858,586.4 859,587.7 860,587.6 861,589.4 862,588.6 863,591.3 864,591.2 865,591.2 866,591.9 867,592.4 868,593.3 869,593.2 870,592.8 871,593.5 872,594.4 873,594.0 874,594.3 875,595.0 876,594.6 877,595.1 878,595.7 879,594.6 880,594.4 881,593.2 882,593.4 883,592.7 884,592.5 885,591.8 886,591.2 887,590.0 888,589.2 889,589.3 890,586.9 891,587.2 892,586.8 893,585.6 894,584.8 895,583.1 896,582.0 897,580.6 898,580.0 899,579.7 900,577.5 901,576.8 902,576.1 903,575.7 904,574.9 905,574.7 906,572.7 907,571.5 908,572.0 909,571.5 910,570.9 911,570.7 912,569.5 913,569.6 914,569.7 915,570.6 916,570.3 917,570.2 918,570.2 919,571.4 920,572.1 921,572.5 922,573.5 923,573.5 924,574.7 925,576.0 926,577.8 927,577.7 928,579.4 929,580.5 930,582.9 931,584.2 932,585.9 933,587.5 934,589.0 935,590.6 936,591.7 937,593.4 938,594.7 939,596.1 940,598.0 941,600.0 942,601.2 943,602.3 944,602.3 945,604.5 946,605.3 947,605.9 948,606.3 949,607.4 950,607.7 951,609.5 952,607.3 953,607.8 954,607.4 955,606.9 956,606.1 957,606.2 958,604.7 959,602.8 960,601.1 961,600.9 962,597.9 963,595.8 964,593.5 965,592.0 966,589.3 967,587.5 968,584.7 969,581.4 970,579.0 971,575.0 972,570.8 973,569.5 974,566.2 975,563.0 976,559.2 977,556.5 978,552.6 979,549.8 980,545.5 981,543.9 982,540.4 983,537.0 984,533.1 985,529.6 986,526.2 987,523.5 988,519.3 989,515.5 990,511.6 991,507.7 992,504.3 993,500.1 994,494.6 995,490.2 996,486.4 997,480.5 998,477.4 999,473.9 1000,472.0 1001,471.3 1002,471.1 1003,471.1 1004,470.9 1005,471.7 1006,473.4 1007,476.1 1008,478.6 1009,480.0 1010,483.2 1011,485.0 1012,487.2 1013,489.8 1014,491.9 1015,495.0 1016,497.5 1017,500.0 1018,503.5 1019,507.3 1020,510.5 1021,514.1 1022,518.1 1023,521.5 1024,526.6 1025,530.7 1026,534.5 1027,539.7 1028,544.3 1029,547.1 1030,550.5 1031,554.5 1032,559.3 1033,562.7 1034,566.4 1035,569.9 1036,573.1 1037,576.2 1038,580.6 1039,582.5 1040,585.8 1041,589.5 1042,592.5 1043,594.8 1044,598.1 1045,600.8 1046,600.5 1047,602.4 1048,603.8 1049,604.8 1050,606.4 1051,607.3 1052,607.2 1053,607.4 1054,607.8 1055,608.4 1056,608.4 1057,608.2 1058,608.0 1059,608.4 1060,607.7 1061,608.4 1062,607.6 1063,606.6 1064,605.2 1065,604.5 1066,603.0 1067,602.7 1068,600.6 1069,600.5 1070,597.7 1071,596.3 1072,594.8 1073,593.2 1074,591.5 1075,590.2 1076,588.4 1077,586.8 1078,584.9 1079,585.0 1080,583.4 1081,581.3 1082,580.0 1083,580.2 1084,578.8 1085,577.3 1086,576.5 1087,576.2 1088,574.2 1089,575.1 1090,572.8 1091,573.7 1092,573.0 1093,573.3 1094,572.7 1095,572.2 1096,572.9 1097,572.3 1098,573.7 1099,573.3 1100,573.7 1101,573.0 1102,573.3 1103,574.1 1104,575.2 1105,575.3 1106,576.0 1107,576.9 1108,578.0 1109,578.5 1110,578.6 1111,579.7 1112,580.8 1113,579.9 1114,582.1 1115,582.3 1116,584.0 1117,585.4 1118,585.7 1119,586.2 1120,585.2 1121,587.8 1122,588.9 1123,588.1 1124,589.1 1125,589.3 1126,589.4 1127,590.5 1128,590.7 1129,590.7 1130,591.7 1131,590.4 1132,591.3 1133,591.7 1134,590.9 1135,592.0 1136,592.4 1137,592.2 1138,591.1 1139,591.5 1140,591.4 1141,590.1 1142,590.1 1143,590.6 1144,590.1 1145,589.9 1146,589.4 1147,589.0 1148,588.3 1149,588.0 1150,588.0 1151,586.6 1152,587.0 1153,585.9 1154,585.6 1155,584.4 1156,584.9 1157,584.8 1158,583.7 1159,583.5 1160,583.3 1161,583.3 1162,582.6 1163,582.2 1164,582.0 1165,581.1 1166,581.4 1167,582.1 1168,581.1 1169,580.4 1170,581.1 1171,579.6 1172,580.3 1173,579.2 1174,580.9 1175,579.7 1176,580.3 1177,580.1 1178,580.3 1179,580.6 1180,581.2 1181,580.2 1182,581.3 1183,581.8 1184,581.8 1185,581.9 1186,581.8 1187,582.9 1188,582.3 1189,583.5 1190,583.8 1191,583.8 1192,583.3 1193,584.5 1194,584.8 1195,585.5 1196,585.9 1197,585.7 1198,585.2 1199,586.5 1200,586.6 1201,587.4 1202,587.4 1203,587.3 1204,587.5 1205,587.8 1206,588.2 1207,587.9 1208,587.9 1209,588.3 1210,588.3 1211,589.3 1212,589.1 1213,589.0 1214,588.7 1215,588.6 1216,588.4 1217,588.2 1218,588.2 1219,588.6 1220,588.5 1221,587.9 1222,587.5 1223,587.2 1224,586.8 1225,587.6 1226,586.1 1227,585.7 1228,585.6 1229,586.2 1230,586.1 1231,585.1 1232,585.5 1233,584.2 1234,584.6 1235,584.9 1236,583.2 1237,584.4 1238,583.8 1239,582.8 1240,582.7 1241,583.0 1242,582.5 1243,582.6 1244,582.6 1245,583.0 1246,581.9 1247,581.6 1248,582.5 1249,581.8 1250,582.2 1251,581.8 1252,581.1 1253,581.4 1254,581.5 1255,582.1 1256,581.7 1257,581.5 1258,582.8 1259,583.0 1260,581.8 1261,583.0 1262,583.1 1263,582.6 1264,582.9 1265,583.2 1266,583.2 1267,583.7 1268,584.7 1269,584.1 1270,585.1 1271,585.3 1272,585.0 1273,584.7 1274,585.6 1275,586.1 1276,585.1 1277,586.1 1278,586.4 1279,586.6 1280,587.0 1281,587.1 1282,587.5 1283,587.2 1284,586.7 1285,588.1 1286,588.1 1287,588.6 1288,588.1 1289,588.5 1290,588.2 1291,587.9 1292,588.1 1293,588.0 1294,588.2 1295,587.4 1296,588.8 1297,587.5 1298,587.9 1299,588.3 1300,587.7 1301,586.8 1302,587.1 1303,586.7 1304,586.8 1305,587.1 1306,586.2 1307,585.9 1308,585.0 1309,584.8 1310,584.2 1311,584.9 1312,584.4 1313,583.8 1314,584.9 1315,584.0 1316,583.2 1317,582.7 1318,582.7 1319,582.3 1320,581.7 1321,583.0 1322,583.0 1323,581.4 1324,582.4 1325,581.6 1326,581.4 1327,581.4 1328,582.1 1329,581.6 1330,582.2 1331,582.5 1332,582.1 1333,582.3 1334,582.3 1335,582.1 1336,582.4 1337,582.5 1338,581.7 1339,582.5 1340,583.2 1341,583.1 1342,583.5 1343,583.6 1344,583.6 1345,584.2 1346,584.5 1347,584.7 1348,584.9 1349,585.1 1350,585.2 1351,585.5 1352,584.7 1353,585.5 1354,587.0 1355,586.8 1356,586.7 1357,586.4 1358,586.1 1359,586.4 1360,587.1 1361,588.2 1362,586.8 1363,587.8 1364,587.8 1365,588.1 1366,587.3 1367,588.1 1368,587.2 1369,587.8 1370,587.9 1371,588.1 1372,588.5 1373,587.7 1374,587.7 1375,586.0 1376,587.3 1377,587.4 1378,587.2 1379,587.5 1380,586.2 1381,587.3 1382,586.4 1383,585.2 1384,585.6 1385,585.4 1386,584.8 1387,584.2 1388,584.0 1389,584.6 1390,584.5 1391,584.3 1392,584.0 1393,583.8 1394,584.3 1395,583.1 1396,582.9 1397,582.5 1398,583.1 1399,582.9 1400,582.4 1401,582.5 1402,582.1 1403,582.1 1404,581.6 1405,582.1 1406,581.6 1407,581.5 1408,581.5 1409,581.7 1410,581.4 1411,582.6 1412,582.3 1413,582.4 1414,582.3 1415,582.9 1416,583.1 1417,583.0 1418,583.7 1419,583.8 1420,583.4 1421,584.1 1422,583.5 1423,584.3 1424,584.8 1425,584.9 1426,584.8 1427,585.3 1428,585.6 1429,585.2 1430,585.0 1431,584.8 1432,585.9 1433,586.8 1434,587.7 1435,587.2 1436,587.0 1437,587.0 1438,587.1 1439,587.9 1440,587.6 1441,587.8 1442,588.3 1443,587.5 1444,588.3 1445,587.7 1446,588.3 1447,588.1 1448,587.5 1449,587.6 1450,588.5 1451,587.5 1452,587.7 1453,587.7 1454,587.6 1455,586.4 1456,586.0 1457,586.6 1458,586.3 1459,586.2 1460,586.6 1461,586.3 1462,585.0 1463,586.0 1464,585.4 1465,585.4 1466,583.9 1467,583.2 1468,584.9 1469,584.3 1470,584.5 1471,583.8 1472,584.1 1473,583.1 1474,582.0 1475,583.0 1476,582.3 1477,582.5 1478,582.6 1479,582.3 1480,581.9 1481,582.3 1482,581.3 1483,582.1 1484,582.3 1485,582.4 1486,582.0 1487,581.4 1488,582.8 1489,581.9 1490,582.3 1491,581.7 1492,581.9 1493,582.0 1494,583.0 1495,582.5 1496,583.7 1497,583.4 1498,583.8 1499,583.8 1500,584.0 1501,584.6 1502,584.4 1503,584.7 1504,585.9 1505,584.3 1506,585.7 1507,586.4 1508,586.3 1509,585.7 1510,586.8 1511,586.6 1512,586.9 1513,586.6 1514,586.7 1515,587.6 1516,587.8 1517,587.3 1518,587.3 1519,587.3 1520,587.9 1521,588.1 1522,588.7 1523,588.3 1524,587.7 1525,587.8 1526,588.0 1527,586.9 1528,586.6 1529,587.2 1530,587.1 1531,587.1 1532,587.0 1533,587.3 1534,586.9 1535,586.5 1536,586.8 1537,585.4 1538,586.4 1539,586.0 1540,585.4 1541,585.3 1542,584.8 1543,585.0 1544,584.9 1545,583.1 1546,584.3 1547,583.4 1548,583.4 1549,582.8 1550,583.2 1551,583.0 1552,582.0 1553,582.8 1554,582.4 1555,581.7 1556,582.7 1557,582.5 1558,582.0 1559,582.2 1560,582.4 1561,581.6 1562,582.1 1563,582.1 1564,581.8 1565,582.3 1566,581.3 1567,581.7 1568,582.7 1569,583.0 1570,582.9 1571,581.8 1572,582.9 1573,583.2 1574,583.8 1575,583.7 1576,583.9 1577,583.5 1578,585.4 1579,584.6 1580,584.0 1581,585.5 1582,584.3 1583,585.5 1584,586.5 1585,586.9 1586,586.1 1587,586.8 1588,586.8 1589,586.9 1590,587.1 1591,587.2 1592,587.0 1593,587.6 1594,587.5 1595,588.1 1596,587.4 1597,588.0 1598,588.0 1599,587.8 1600,587.4 1601,588.6 1602,587.6 1603,589.0 1604,588.1 1605,587.6 1606,587.8 1607,587.3 1608,587.2 1609,587.5 1610,586.2 1611,586.6 1612,587.0 1613,586.8 1614,586.0 1615,586.3 1616,586.1 1617,586.0 1618,585.4 1619,585.2 1620,584.0 1621,583.3 1622,583.9 1623,582.1 1624,583.1 1625,583.5 1626,583.6 1627,583.3 1628,582.6 1629,582.8 1630,583.1 1631,581.9 1632,582.1 1633,581.8 1634,582.3 1635,581.5 1636,581.9 1637,581.7 1638,582.0 1639,581.4 1640,582.0 1641,581.4 1642,582.0 1643,581.8 1644,581.8 1645,581.8 1646,582.0 1647,582.5 1648,582.7 1649,582.7 1650,581.9 1651,583.2 1652,583.8 1653,582.4 1654,583.4 1655,584.0 1656,584.1 1657,585.3 1658,585.4 1659,585.1 1660,586.4 1661,586.5 1662,586.3 1663,586.0 1664,587.1 1665,587.2 1666,587.3 1667,587.4 1668,587.6 1669,587.2 1670,588.1 1671,588.1 1672,589.6 1673,588.5 1674,588.5 1675,588.1 1676,588.5 1677,589.0 1678,589.3 1679,588.6 1680,589.4 1681,587.7 1682,588.4 1683,588.4 1684,588.2 1685,588.0 1686,587.7 1687,587.6 1688,587.9 1689,587.2 1690,587.6 1691,586.7 1692,586.2 1693,586.3 1694,585.2 1695,586.0 1696,584.3 1697,585.2 1698,583.5 1699,583.2 1700,583.0 1701,583.2 1702,583.3 1703,583.1 1704,581.4 1705,582.6 1706,582.0 1707,581.4 1708,582.0 1709,582.2 1710,580.7 1711,581.1 1712,580.8 1713,580.6 1714,580.2 1715,580.8 1716,579.9 1717,581.0 1718,580.2 1719,581.6 1720,581.4 1721,581.4 1722,580.8 1723,581.5 1724,581.5 1725,582.3 1726,582.7 1727,581.5 1728,581.7 1729,582.6 1730,582.5 1731,584.3 1732,584.0 1733,584.9 1734,584.3 1735,585.0 1736,585.7 1737,586.2 1738,585.5 1739,585.7 1740,587.5 1741,587.0 1742,587.2 1743,587.8 1744,587.2 1745,589.7 1746,588.5 1747,589.4 1748,589.1 1749,589.1 1750,589.3 1751,590.1 1752,589.0 1753,590.5 1754,589.9 1755,590.1 1756,590.0 1757,590.1 1758,590.0 1759,589.5 1760,588.7 1761,589.3 1762,589.5 1763,588.9 1764,588.9 1765,588.4 1766,588.1 1767,586.1 1768,587.7 1769,586.1 1770,586.6 1771,585.8 1772,586.3 1773,584.9 1774,584.2 1775,584.5 1776,583.4 1777,583.8 1778,582.6 1779,582.1 1780,582.4 1781,580.8 1782,581.6 1783,580.2 1784,580.1 1785,580.0 1786,579.2 1787,579.0 1788,579.7 1789,578.8 1790,578.3 1791,578.0 1792,578.7 1793,577.9 1794,578.6 1795,577.8 1796,578.0 1797,576.4 1798,579.0 1799,578.8 1800,578.7 1801,579.6 1802,579.4 1803,578.7 1804,580.7 1805,580.7 1806,580.8 1807,582.2 1808,582.6 1809,583.3 1810,582.9 1811,584.4 1812,584.3 1813,585.3 1814,586.8 1815,586.0 1816,587.5 1817,588.3 1818,588.8 1819,589.6 1820,590.0 1821,591.2 1822,591.7 1823,591.9 1824,592.2 1825,592.6 1826,593.5 1827,593.0 1828,592.8 1829,594.6 1830,594.3 1831,594.3 1832,595.0 1833,594.1 1834,593.6 1835,593.9 1836,593.9 1837,594.0 1838,594.5 1839,593.8 1840,592.8 1841,592.8 1842,593.2 1843,590.8 1844,591.1 1845,589.3 1846,588.4 1847,588.7 1848,587.3 1849,585.9 1850,584.3 1851,584.6 1852,583.5 1853,582.5 1854,581.8 1855,580.4 1856,580.0 1857,578.3 1858,577.1 1859,576.4 1860,576.3 1861,574.5 1862,573.8 1863,573.8 1864,572.5 1865,572.5 1866,570.6 1867,570.7 1868,571.2 1869,570.5 1870,569.5 1871,569.5 1872,570.2 1873,569.9 1874,568.8 1875,570.9 1876,570.2 1877,571.4 1878,572.5 1879,572.7 1880,574.0 1881,574.7 1882,575.0 1883,577.3 1884,577.7 1885,579.3 1886,579.6 1887,580.8 1888,582.6 1889,584.2 1890,586.0 1891,588.6 1892,590.2 1893,589.8 1894,591.7 1895,594.4 1896,595.2 1897,597.4 1898,598.3 1899,600.3 1900,601.3 1901,602.8 1902,604.1 1903,605.3 1904,606.3 1905,606.3 1906,607.6 1907,607.9 1908,609.2 1909,609.2 1910,608.6 1911,607.8 1912,607.4 1913,607.8 1914,606.2 1915,605.4 1916,605.0 1917,602.8 1918,601.2 1919,599.3 1920,597.4 1921,595.3 1922,592.8 1923,589.8 1924,588.4 1925,585.9 1926,583.3 1927,579.7 1928,576.8 1929,573.1 1930,571.6 1931,567.9 1932,564.4 1933,561.8 1934,557.8 1935,555.5 1936,550.6 1937,548.0 1938,545.2 1939,541.4 1940,537.6 1941,535.0 1942,531.0 1943,526.6 1944,524.3 1945,519.6 1946,517.4 1947,513.7 1948,508.4 1949,505.8 1950,501.8 1951,497.4 1952,492.4 1953,487.7 1954,483.7 1955,479.8 1956,475.5 1957,473.2 1958,471.2 1959,471.0 1960,471.0 1961,471.2 1962,470.4 1963,473.1 1964,474.7 1965,477.5 1966,479.6 1967,481.1 1968,483.3 1969,486.2 1970,487.4 1971,491.2 1972,493.8 1973,497.1 1974,499.6 1975,503.3 1976,506.1 1977,508.9 1978,511.4 1979,515.2 1980,520.2 1981,523.2 1982,528.9 1983,532.8 1984,537.2 1985,541.3 1986,545.6 1987,549.6 1988,552.6 1989,557.3 1990,560.9 1991,565.3 1992,568.5 1993,572.6 1994,574.7 1995,579.4 1996,581.3 1997,584.3 1998,588.6 1999,590.6 2000,593.1 2001,595.8 2002,598.8 2003,599.9 2004,601.9 2005,603.5 2006,604.2 2007,605.7 2008,605.9 2009,606.3 2010,607.2 2011,608.4 2012,608.0 2013,608.6 2014,608.6 2015,608.0 2016,608.0 2017,607.0 2018,608.1 2019,607.6 2020,606.0 2021,606.2 2022,604.7 2023,602.7 2024,602.9 2025,601.4 2026,599.7 2027,599.0 2028,597.2 2029,595.7 2030,594.0 2031,593.6 2032,591.6 2033,589.1 2034,588.1 2035,586.6 2036,584.2 2037,584.2 2038,582.9 2039,581.0 2040,579.8 2041,579.3 2042,578.5 2043,577.7 2044,576.2 2045,575.3 2046,574.5 2047,575.2 2048,573.9 2048,576.6 2047,577.2 2046,577.5 2045,578.0 2044,579.0 2043,580.4 2042,580.9 2041,581.6 2040,582.2 2039,583.1 2038,584.6 2037,585.9 2036,588.3 2035,589.3 2034,591.5 2033,592.2 2032,594.5 2031,594.9 2030,596.4 2029,598.1 2028,600.1 2027,600.3 2026,601.6 2025,604.2 2024,605.0 2023,605.4 2022,607.1 2021,609.2 2020,610.3 2019,610.5 2018,610.0 2017,610.8 2016,610.8 2015,611.3 2014,610.1 2013,610.6 2012,609.7 2011,611.3 2010,609.7 2009,610.2 2008,608.2 2007,608.0 2006,607.4 2005,606.0 2004,604.5 2003,604.3 2002,601.4 2001,598.2 2000,596.4 1999,593.4 1998,591.4 1997,587.1 1996,583.9 1995,580.9 1994,577.3 1993,574.7 1992,570.6 1991,568.0 1990,563.2 1989,559.6 1988,555.7 1987,551.7 1986,547.8 1985,544.6 1984,539.4 1983,536.4 1982,531.4 1981,526.4 1980,522.6 1979,519.0 1978,514.8 1977,511.9 1976,508.4 1975,504.8 1974,502.1 1973,499.3 1972,495.8 1971,494.2 1970,491.5 1969,488.5 1968,485.9 1967,484.0 1966,481.8 1965,480.4 1964,477.3 1963,475.3 1962,474.9 1961,473.3 1960,473.5 1959,475.2 1958,473.4 1957,475.2 1956,477.8 1955,481.9 1954,485.9 1953,491.5 1952,495.8 1951,499.2 1950,504.2 1949,508.7 1948,511.8 1947,516.8 1946,519.9 1945,523.4 1944,527.0 1943,531.1 1942,534.7 1941,537.6 1940,542.3 1939,545.0 1938,547.2 1937,550.3 1936,555.7 1935,557.8 1934,560.5 1933,564.7 1932,566.7 1931,569.3 1930,573.3 1929,576.8 1928,579.2 1927,583.0 1926,585.9 1925,588.2 1924,590.8 1923,593.4 1922,595.4 1921,598.7 1920,599.2 1919,602.3 1918,603.4 1917,605.0 1916,606.7 1915,607.7 1914,608.6 1913,608.8 1912,610.6 1911,610.3 1910,611.2 1909,611.8 1908,610.7 1907,610.1 1906,610.0 1905,609.3 1904,609.0 1903,607.7 1902,606.2 1901,605.2 1900,603.3 1899,601.4 1898,601.7 1897,599.1 1896,598.8 1895,597.0 1894,594.8 1893,592.9 1892,592.0 1891,590.4 1890,588.4 1889,586.6 1888,585.7 1887,585.0 1886,583.0 1885,581.0 1884,579.4 1883,579.6 1882,577.8 1881,577.2 1880,576.5 1879,575.4 1878,574.6 1877,574.5 1876,573.3 1875,572.6 1874,572.8 1873,572.4 1872,572.8 1871,572.7 1870,572.9 1869,573.4 1868,574.1 1867,573.7 1866,575.1 1865,574.4 1864,575.2 1863,576.0 1862,575.9 1861,577.5 1860,578.7 1859,580.0 1858,580.1 1857,581.0 1856,582.7 1855,582.7 1854,583.2 1853,585.8 1852,586.3 1851,586.9 1850,588.5 1849,589.1 1848,590.3 1847,591.5 1846,591.1 1845,592.6 1844,593.7 1843,593.2 1842,594.5 1841,594.8 1840,595.3 1839,595.6 1838,596.8 1837,595.9 1836,596.7 1835,596.7 1834,596.9 1833,596.8 1832,597.8 1831,596.8 1830,596.4 1829,596.2 1828,596.6 1827,596.3 1826,596.0 1825,595.1 1824,595.4 1823,595.1 1822,593.4 1821,593.4 1820,592.2 1819,592.1 1818,591.5 1817,590.5 1816,590.0 1815,589.4 1814,588.8 1813,588.1 1812,586.6 1811,586.3 1810,586.0 1809,584.8 1808,584.7 1807,585.1 1806,585.1 1805,583.0 1804,582.3 1803,581.5 1802,582.2 1801,581.6 1800,580.4 1799,581.8 1798,581.5 1797,581.1 1796,579.6 1795,580.4 1794,582.3 1793,580.3 1792,581.0 1791,581.5 1790,580.9 1789,582.0 1788,581.0 1787,582.5 1786,582.8 1785,581.7 1784,583.0 1783,582.7 1782,583.8 1781,583.8 1780,584.2 1779,584.8 1778,586.1 1777,586.0 1776,587.5 1775,587.2 1774,587.2 1773,588.0 1772,589.1 1771,588.6 1770,589.2 1769,588.9 1768,590.0 1767,589.3 1766,590.6 1765,590.4 1764,591.6 1763,592.2 1762,592.4 1761,592.0 1760,591.8 1759,592.7 1758,592.8 1757,592.3 1756,592.6 1755,592.5 1754,593.3 1753,592.7 1752,591.9 1751,592.2 1750,592.3 1749,593.4 1748,591.2 1747,592.2 1746,593.2 1745,591.9 1744,590.9 1743,590.7 1742,590.1 1741,589.7 1740,590.4 1739,588.2 1738,588.7 1737,588.3 1736,587.7 1735,587.4 1734,587.6 1733,587.0 1732,585.8 1731,586.1 1730,585.2 1729,584.7 1728,584.4 1727,585.2 1726,586.0 1725,584.1 1724,584.7 1723,583.3 1722,583.2 1721,583.1 1720,583.3 1719,583.4 1718,583.2 1717,583.1 1716,582.8 1715,582.9 1714,582.7 1713,583.2 1712,584.4 1711,584.2 1710,582.8 1709,583.7 1708,583.9 1707,584.7 1706,584.9 1705,584.8 1704,585.4 1703,586.1 1702,585.0 1701,586.0 1700,586.1 1699,586.5 1698,587.8 1697,586.8 1696,588.2 1695,587.3 1694,589.5 1693,587.8 1692,589.3 1691,589.2 1690,589.4 1689,589.8 1688,590.0 1687,589.8 1686,590.5 1685,590.7 1684,590.2 1683,590.9 1682,591.1 1681,591.4 1680,591.1 1679,591.0 1678,591.6 1677,591.4 1676,592.1 1675,592.6 1674,590.5 1673,591.9 1672,591.2 1671,590.6 1670,590.9 1669,589.9 1668,589.5 1667,590.4 1666,590.0 1665,589.9 1664,589.2 1663,588.6 1662,588.8 1661,588.3 1660,589.3 1659,586.9 1658,586.6 1657,589.2 1656,586.7 1655,586.7 1654,586.0 1653,587.0 1652,586.1 1651,585.6 1650,585.0 1649,584.9 1648,585.7 1647,584.9 1646,584.9 1645,584.4 1644,584.4 1643,584.5 1642,584.8 1641,584.3 1640,584.5 1639,585.2 1638,584.7 1637,585.7 1636,584.5 1635,584.3 1634,584.1 1633,585.3 1632,584.8 1631,584.2 1630,585.8 1629,584.6 1628,585.1 1627,585.4 1626,585.7 1625,586.4 1624,586.1 1623,586.2 1622,586.5 1621,587.4 1620,587.0 1619,587.1 1618,588.0 1617,588.4 1616,589.4 1615,588.8 1614,589.1 1613,589.0 1612,588.5 1611,589.1 1610,588.6 1609,589.9 1608,590.2 1607,589.3 1606,590.1 1605,590.5 1604,590.8 1603,590.4 1602,590.9 1601,590.3 1600,591.1 1599,591.3 1598,590.3 1597,590.0 1596,590.8 1595,590.2 1594,590.3 1593,589.9 1592,590.1 1591,589.5 1590,589.2 1589,588.6 1588,588.5 1587,589.0 1586,589.0 1585,589.0 1584,588.0 1583,588.5 1582,586.8 1581,588.3 1580,587.1 1579,587.1 1578,586.6 1577,587.2 1576,586.6 1575,585.9 1574,585.9 1573,585.3 1572,585.2 1571,584.9 1570,585.5 1569,584.7 1568,585.0 1567,584.8 1566,584.4 1565,584.8 1564,584.9 1563,584.4 1562,584.6 1561,584.8 1560,584.2 1559,584.7 1558,584.7 1557,583.7 1556,584.2 1555,584.4 1554,585.0 1553,584.7 1552,586.1 1551,585.3 1550,585.6 1549,585.5 1548,586.0 1547,586.6 1546,586.5 1545,586.6 1544,587.2 1543,587.1 1542,587.3 1541,587.4 1540,588.6 1539,587.9 1538,589.0 1537,588.1 1536,588.9 1535,589.3 1534,589.1 1533,589.6 1532,589.6 1531,589.7 1530,590.2 1529,590.8 1528,590.1 1527,589.9 1526,589.8 1525,590.4 1524,590.3 1523,590.4 1522,589.9 1521,590.6 1520,591.3 1519,590.4 1518,590.5 1517,590.4 1516,591.1 1515,590.1 1514,590.4 1513,590.0 1512,589.1 1511,589.3 1510,588.5 1509,588.2 1508,588.8 1507,588.4 1506,588.2 1505,588.7 1504,587.2 1503,587.3 1502,586.9 1501,586.7 1500,586.6 1499,586.4 1498,585.5 1497,585.9 1496,586.3 1495,585.7 1494,585.9 1493,587.1 1492,584.4 1491,584.7 1490,585.1 1489,585.0 1488,584.6 1487,585.1 1486,584.8 1485,584.1 1484,583.9 1483,583.9 1482,584.0 1481,585.7 1480,585.0 1479,585.0 1478,584.6 1477,585.4 1476,584.8 1475,585.6 1474,585.6 1473,585.3 1472,586.5 1471,586.2 1470,587.5 1469,586.2 1468,586.7 1467,586.5 1466,587.3 1465,587.6 1464,588.8 1463,588.5 1462,587.8 1461,588.1 1460,588.9 1459,588.8 1458,589.4 1457,589.0 1456,589.2 1455,588.9 1454,590.6 1453,589.6 1452,589.2 1451,589.9 1450,590.3 1449,590.0 1448,591.2 1447,590.7 1446,590.4 1445,590.4 1444,589.3 1443,590.1 1442,590.5 1441,590.8 1440,590.3 1439,590.3 1438,589.5 1437,589.8 1436,590.0 1435,589.4 1434,590.1 1433,589.3 1432,589.5 1431,588.9 1430,590.3 1429,588.1 1428,587.8 1427,587.9 1426,587.7 1425,587.1 1424,586.8 1423,586.7 1422,587.4 1421,586.4 1420,585.8 1419,586.3 1418,585.4 1417,585.3 1416,585.2 1415,584.6 1414,585.4 1413,584.9 1412,584.5 1411,584.5 1410,584.4 1409,584.4 1408,583.7 1407,585.3 1406,584.6 1405,584.3 1404,585.0 1403,584.6 1402,584.7 1401,584.2 1400,585.1 1399,584.8 1398,585.0 1397,585.3 1396,584.9 1395,585.7 1394,586.2 1393,586.8 1392,586.3 1391,586.3 1390,587.1 1389,587.5 1388,587.8 1387,587.2 1386,587.9 1385,588.2 1384,587.9 1383,589.0 1382,589.0 1381,589.3 1380,589.2 1379,589.5 1378,589.5 1377,589.5 1376,590.1 1375,590.5 1374,589.5 1373,589.5 1372,590.1 1371,590.2 1370,590.8 1369,591.0 1368,590.5 1367,591.1 1366,590.1 1365,589.6 1364,590.7 1363,590.1 1362,590.9 1361,589.9 1360,590.2 1359,589.9 1358,590.4 1357,589.2 1356,590.0 1355,588.6 1354,588.6 1353,588.4 1352,588.7 1351,588.7 1350,587.2 1349,587.9 1348,587.4 1347,587.5 1346,586.9 1345,586.6 1344,587.0 1343,586.7 1342,585.4 1341,585.7 1340,585.7 1339,584.8 1338,584.9 1337,584.5 1336,585.2 1335,584.8 1334,585.0 1333,584.4 1332,584.5 1331,584.3 1330,584.6 1329,584.7 1328,584.5 1327,584.4 1326,584.3 1325,583.8 1324,585.1 1323,585.0 1322,584.8 1321,585.4 1320,585.3 1319,585.8 1318,585.7 1317,586.7 1316,586.6 1315,586.3 1314,586.5 1313,586.6 1312,586.8 1311,587.3 1310,587.7 1309,587.8 1308,589.0 1307,588.2 1306,588.0 1305,588.6 1304,589.2 1303,589.8 1302,588.5 1301,589.7 1300,589.7 1299,591.0 1298,589.9 1297,590.7 1296,590.2 1295,590.8 1294,590.3 1293,591.2 1292,590.8 1291,591.0 1290,590.2 1289,590.9 1288,590.5 1287,590.1 1286,590.8 1285,591.2 1284,589.7 1283,590.4 1282,589.7 1281,589.1 1280,588.8 1279,589.2 1278,590.2 1277,589.1 1276,588.9 1275,587.3 1274,587.9 1273,587.2 1272,587.4 1271,586.9 1270,586.9 1269,586.6 1268,586.5 1267,585.8 1266,585.7 1265,585.6 1264,585.0 1263,586.2 1262,585.2 1261,584.5 1260,585.0 1259,585.2 1258,584.7 1257,584.0 1256,584.0 1255,584.8 1254,584.0 1253,584.1 1252,584.0 1251,584.0 1250,584.3 1249,585.2 1248,584.5 1247,583.7 1246,585.4 1245,584.6 1244,585.0 1243,585.3 1242,585.2 1241,584.5 1240,585.4 1239,585.3 1238,586.3 1237,586.5 1236,586.3 1235,587.1 1234,587.2 1233,587.7 1232,588.5 1231,587.9 1230,587.5 1229,588.1 1228,588.9 1227,588.8 1226,588.4 1225,589.7 1224,590.0 1223,590.4 1222,590.9 1221,589.9 1220,590.4 1219,591.1 1218,591.0 1217,591.4 1216,590.4 1215,590.8 1214,591.1 1213,591.1 1212,591.1 1211,591.0 1210,591.5 1209,590.7 1208,590.9 1207,590.5 1206,591.1 1205,589.8 1204,591.6 1203,589.9 1202,590.1 1201,589.9 1200,589.3 1199,588.2 1198,588.4 1197,588.7 1196,587.3 1195,588.4 1194,586.8 1193,586.9 1192,586.4 1191,585.6 1190,586.0 1189,585.3 1188,585.1 1187,585.3 1186,584.7 1185,584.9 1184,584.6 1183,584.6 1182,584.0 1181,583.4 1180,583.0 1179,582.7 1178,583.8 1177,583.7 1176,582.7 1175,583.4 1174,582.8 1173,583.3 1172,582.6 1171,582.9 1170,583.5 1169,582.8 1168,583.5 1167,584.1 1166,583.2 1165,583.0 1164,585.6 1163,584.6 1162,585.4 1161,585.4 1160,585.7 1159,585.8 1158,586.2 1157,587.2 1156,587.2 1155,587.6 1154,588.9 1153,588.8 1152,589.2 1151,589.7 1150,589.7 1149,590.0 1148,590.5 1147,590.9 1146,591.6 1145,592.3 1144,593.2 1143,592.0 1142,593.3 1141,593.2 1140,593.7 1139,593.8 1138,594.1 1137,594.2 1136,594.5 1135,595.3 1134,594.9 1133,594.3 1132,593.7 1131,594.1 1130,593.3 1129,594.0 1128,592.7 1127,592.6 1126,593.0 1125,592.1 1124,591.2 1123,591.2 1122,590.5 1121,589.9 1120,588.9 1119,588.7 1118,587.5 1117,587.5 1116,586.5 1115,585.6 1114,584.9 1113,584.4 1112,582.7 1111,582.6 1110,582.0 1109,580.7 1108,580.0 1107,580.5 1106,578.5 1105,578.5 1104,577.5 1103,577.2 1102,577.0 1101,575.7 1100,575.7 1099,575.9 1098,575.2 1097,576.4 1096,575.3 1095,574.9 1094,575.3 1093,575.8 1092,575.7 1091,576.9 1090,575.9 1089,576.9 1088,577.3 1087,578.2 1086,579.1 1085,579.7 1084,580.6 1083,582.4 1082,583.4 1081,584.8 1080,586.2 1079,586.6 1078,588.6 1077,590.4 1076,591.3 1075,592.8 1074,594.4 1073,596.2 1072,597.2 1071,599.0 1070,600.2 1069,601.7 1068,603.5 1067,604.9 1066,606.1 1065,607.1 1064,607.8 1063,609.3 1062,609.3 1061,610.6 1060,610.3 1059,610.4 1058,610.9 1057,610.4 1056,610.2 1055,610.8 1054,609.9 1053,610.2 1052,610.4 1051,609.2 1050,608.0 1049,608.5 1048,606.1 1047,605.5 1046,604.4 1045,602.4 1044,600.1 1043,597.9 1042,594.7 1041,592.4 1040,589.2 1039,587.5 1038,583.7 1037,579.7 1036,576.4 1035,572.1 1034,569.6 1033,567.1 1032,561.4 1031,557.8 1030,553.4 1029,550.4 1028,545.2 1027,542.2 1026,537.4 1025,533.1 1024,528.2 1023,523.7 1022,519.3 1021,517.2 1020,512.5 1019,509.6 1018,506.8 1017,503.0 1016,500.1 1015,498.3 1014,494.8 1013,492.5 1012,489.4 1011,487.6 1010,485.6 1009,482.3 1008,480.5 1007,478.1 1006,476.6 1005,474.6 1004,474.7 1003,473.0 1002,473.8 1001,472.7 1000,473.8 999,478.4 998,480.5 997,483.8 996,488.3 995,493.6 994,498.1 993,502.4 992,506.7 991,511.0 990,514.2 989,517.9 988,522.1 987,525.9 986,528.7 985,531.3 984,536.0 983,538.6 982,542.4 981,545.3 980,548.9 979,552.2 978,556.0 977,558.7 976,561.5 975,565.7 974,568.7 973,572.5 972,574.6 971,577.6 970,581.2 969,583.4 968,586.3 967,589.8 966,592.6 965,594.6 964,595.6 963,598.9 962,600.2 961,602.8 960,604.8 959,606.6 958,607.2 957,608.5 956,609.5 955,609.4 954,610.2 953,611.0 952,611.5 951,610.7 950,611.1 949,610.3 948,609.7 947,608.4 946,607.6 945,606.9 944,605.3 943,605.4 942,603.9 941,601.5 940,599.5 939,599.1 938,597.3 937,596.0 936,595.6 935,592.7 934,590.7 933,588.9 932,588.6 931,586.8 930,584.8 929,584.3 928,582.4 927,581.3 926,579.1 925,579.4 924,577.5 923,576.4 922,575.0 921,574.8 920,573.8 919,573.2 918,572.9 917,572.9 916,573.0 915,572.2 914,573.1 913,573.1 912,572.8 911,572.9 910,573.8 909,574.4 908,573.9 907,574.4 906,575.2 905,576.6 904,576.5 903,578.8 902,579.3 901,579.8 900,579.6 899,581.5 898,583.0 897,584.0 896,585.4 895,585.8 894,586.9 893,587.6 892,587.9 891,590.3 890,591.6 889,591.4 888,592.1 887,592.7 886,594.1 885,594.3 884,595.0 883,596.0 882,595.8 881,596.7 880,596.5 879,596.9 878,597.1 877,597.4 876,597.2 875,597.6 874,596.7 873,597.4 872,596.7 871,596.6 870,596.6 869,595.3 868,595.1 867,595.4 866,594.8 865,594.1 864,594.1 863,593.8 862,592.9 861,591.8 860,591.7 859,590.3 858,590.9 857,588.5 856,587.9 855,588.0 854,586.5 853,585.7 852,586.9 851,584.9 850,584.9 849,583.7 848,583.6 847,583.6 846,582.4 845,583.2 844,581.9 843,580.8 842,581.7 841,581.0 840,581.0 839,580.9 838,581.2 837,581.1 836,581.2 835,580.5 834,580.4 833,581.0 832,580.7 831,581.3 830,582.2 829,581.7 828,582.3 827,582.2 826,582.9 825,583.2 824,583.6 823,583.6 822,584.6 821,585.0 820,585.5 819,586.7 818,586.7 817,587.4 816,587.6 815,587.3 814,588.7 813,590.4 812,588.4 811,589.3 810,590.8 809,590.7 808,590.4 807,590.7 806,591.4 805,592.2 804,592.1 803,591.5 802,592.5 801,592.6 800,592.2 799,592.9 798,592.0 797,591.8 796,592.1 795,591.9 794,592.0 793,592.7 792,592.4 791,592.0 790,592.9 789,591.6 788,591.1 787,591.7 786,590.2 785,590.1 784,590.1 783,589.6 782,589.5 781,587.8 780,588.0 779,588.2 778,587.4 777,587.2 776,586.4 775,587.1 774,587.1 773,585.3 772,585.8 771,584.4 770,585.5 769,584.5 768,585.0 767,584.5 766,583.4 765,584.5 764,583.4 763,583.1 762,583.1 761,583.5 760,582.7 759,582.6 758,583.7 757,583.1 756,582.8 755,583.1 754,582.7 753,584.0 752,583.3 751,583.9 750,585.4 749,584.8 748,585.0 747,585.1 746,585.2 745,585.4 744,585.1 743,585.9 742,586.6 741,587.0 740,587.1 739,587.7 738,588.0 737,588.2 736,588.4 735,590.0 734,589.3 733,589.6 732,589.7 731,589.7 730,589.4 729,590.3 728,590.2 727,591.3 726,590.2 725,590.7 724,591.2 723,591.4 722,590.8 721,591.2 720,591.4 719,591.1 718,591.1 717,590.9 716,590.9 715,591.2 714,590.9 713,590.4 712,590.6 711,590.9 710,589.1 709,590.1 708,589.2 707,590.0 706,588.5 705,590.1 704,589.4 703,588.6 702,587.6 701,588.1 700,587.3 699,586.5 698,586.4 697,586.8 696,586.1 695,585.4 694,585.3 693,585.6 692,584.7 691,585.3 690,585.3 689,585.9 688,584.6 687,584.4 686,583.9 685,583.7 684,584.1 683,583.7 682,583.3 681,584.8 680,583.7 679,583.9 678,584.6 677,584.4 676,584.1 675,585.3 674,584.0 673,585.6 672,585.2 671,585.6 670,585.5 669,585.7 668,585.7 667,586.4 666,585.6 665,586.6 664,587.7 663,587.0 662,587.2 661,588.1 660,588.1 659,588.4 658,588.1 657,588.0 656,590.2 655,590.0 654,589.7 653,589.2 652,590.3 651,589.8 650,589.9 649,590.9 648,590.3 647,590.5 646,591.0 645,590.0 644,590.4 643,590.3 642,590.5 641,590.6 640,590.2 639,590.2 638,591.0 637,590.4 636,590.2 635,590.2 634,590.3 633,590.0 632,589.9 631,589.7 630,588.8 629,588.2 628,588.9 627,588.5 626,587.9 625,588.7 624,587.7 623,588.3 622,586.8 621,587.1 620,586.7 619,586.4 618,586.0 617,586.2 616,585.5 615,585.8 614,585.0 613,585.3 612,585.3 611,584.9 610,585.6 609,584.7 608,584.0 607,584.5 606,584.6 605,584.9 604,585.0 603,584.7 602,584.2 601,584.5 600,584.3 599,585.4 598,585.0 597,585.3 596,585.0 595,585.9 594,585.5 593,585.9 592,585.2 591,585.1 590,586.8 589,586.3 588,586.9 587,586.5 586,587.3 585,587.6 584,587.9 583,587.6 582,589.2 581,588.2 580,588.3 579,588.0 578,588.8 577,590.4 576,589.9 575,589.5 574,589.3 573,590.7 572,590.2 571,590.6 570,590.6 569,590.7 568,591.1 567,590.6 566,590.0 565,589.8 564,590.9 563,590.6 562,590.0 561,590.9 560,589.7 559,591.7 558,590.2 557,589.7 556,588.9 555,590.3 554,588.5 553,588.3 552,589.3 551,587.9 550,588.4 549,587.9 548,588.3 547,587.8 546,587.4 545,588.5 544,586.4 543,587.3 542,586.6 541,586.3 540,586.2 539,586.4 538,586.9 537,586.2 536,584.7 535,584.4 534,584.7 533,584.6 532,584.4 531,584.3 530,585.7 529,585.3 528,584.4 527,585.3 526,584.2 525,585.4 524,584.1 523,585.4 522,585.6 521,584.4 520,585.3 519,585.1 518,585.7 517,585.9 516,585.5 515,584.8 514,586.0 513,586.1 512,587.4 511,586.1 510,586.8 509,587.1 508,586.8 507,586.8 506,587.7 505,587.4 504,587.8 503,587.9 502,588.9 501,588.9 500,588.6 499,589.5 498,589.7 497,590.3 496,589.4 495,590.6 494,589.7 493,589.7 492,590.1 491,590.1 490,590.4 489,590.3 488,590.8 487,590.4 486,590.6 485,589.7 484,590.7 483,590.4 482,589.8 481,590.0 480,589.7 479,590.1 478,589.9 477,590.2 476,588.6 475,590.1 474,589.8 473,588.6 472,589.4 471,589.1 470,587.2 469,587.8 468,587.4 467,587.0 466,586.7 465,586.5 464,585.4 463,586.4 462,586.6 461,585.3 460,585.6 459,585.5 458,585.0 457,584.7 456,585.2 455,584.3 454,584.2 453,584.5 452,584.2 451,584.8 450,584.4 449,584.6 448,584.0 447,583.9 446,583.6 445,584.6 444,585.2 443,585.1 442,585.7 441,584.9 440,585.0 439,585.2 438,586.7 437,586.3 436,586.2 435,586.5 434,586.9 433,587.0 432,586.6 431,586.7 430,588.2 429,587.2 428,588.1 427,588.7 426,588.1 425,588.3 424,588.7 423,589.4 422,589.1 421,589.7 420,588.9 419,589.9 418,589.9 417,590.3 416,590.3 415,590.5 414,589.7 413,589.8 412,591.1 411,589.9 410,592.1 409,589.6 408,591.1 407,590.7 406,591.5 405,590.1 404,590.7 403,589.9 402,589.6 401,589.3 400,588.3 399,588.5 398,588.6 397,588.5 396,587.9 395,589.1 394,588.1 393,587.3 392,588.2 391,586.8 390,586.9 389,586.2 388,587.9 387,586.6 386,586.2 385,585.4 384,585.4 383,584.4 382,585.5 381,584.3 380,584.8 379,584.2 378,585.8 377,584.9 376,584.6 375,584.8 374,584.4 373,584.3 372,583.8 371,584.3 370,584.3 369,585.5 368,584.8 367,584.8 366,584.9 365,585.2 364,584.8 363,585.1 362,584.8 361,585.4 360,586.3 359,585.9 358,587.4 357,587.2 356,586.7 355,586.7 354,587.3 353,586.3 352,587.5 351,587.9 350,588.9 349,588.5 348,589.2 347,588.4 346,588.9 345,590.4 344,589.3 343,590.6 342,590.6 341,590.0 340,589.7 339,590.5 338,589.9 337,590.4 336,590.5 335,590.7 334,591.0 333,590.8 332,590.3 331,590.6 330,590.1 329,590.2 328,590.9 327,589.4 326,590.7 325,589.8 324,589.4 323,589.8 322,589.0 321,588.3 320,588.1 319,588.8 318,588.1 317,588.4 316,587.6 315,587.2 314,588.2 313,587.4 312,586.4 311,586.9 310,586.2 309,585.9 308,586.3 307,586.1 306,584.8 305,586.2 304,586.3 303,584.9 302,585.1 301,584.0 300,585.3 299,584.1 298,585.5 297,584.8 296,584.4 295,584.4 294,583.8 293,584.6 292,584.7 291,584.1 290,584.2 289,584.3 288,585.8 287,585.0 286,584.8 285,584.8 284,585.3 283,586.2 282,586.1 281,586.2 280,586.2 279,587.2 278,587.3 277,587.2 276,588.2 275,587.0 274,588.1 273,588.6 272,588.9 271,588.8 270,589.4 269,588.9 268,589.4 267,589.9 266,590.4 265,590.6 264,590.1 263,590.6 262,591.2 261,591.3 260,591.1 259,591.6 258,591.3 257,590.7 256,591.1 255,591.4 254,592.2 253,591.2 252,591.1 251,591.0 250,591.0 249,590.6 248,590.9 247,589.8 246,590.5 245,589.5 244,590.7 243,589.2 242,589.0 241,589.4 240,588.7 239,587.5 238,587.7 237,586.8 236,587.8 235,586.8 234,586.4 233,587.1 232,586.0 231,585.8 230,585.6 229,585.7 228,584.2 227,583.4 226,583.6 225,584.0 224,584.6 223,583.0 222,583.5 221,582.8 220,582.8 219,582.2 218,583.7 217,582.7 216,582.4 215,582.1 214,582.9 213,583.7 212,583.9 211,584.2 210,583.1 209,583.5 208,583.5 207,583.2 206,583.9 205,584.0 204,585.7 203,585.5 202,585.9 201,586.4 200,587.8 199,587.1 198,587.9 197,587.9 196,588.8 195,589.8 194,589.7 193,589.3 192,590.9 191,590.9 190,591.8 189,591.3 188,592.4 187,592.4 186,593.2 185,592.9 184,593.2 183,594.0 182,594.1 181,594.1 180,593.7 179,594.2 178,594.2 177,594.4 176,594.1 175,593.9 174,594.9 173,593.8 172,592.8 171,594.5 170,593.9 169,592.3 168,593.0 167,592.1 166,590.8 165,590.1 164,590.3 163,590.5 162,588.7 161,588.4 160,587.0 159,586.6 158,585.7 157,585.3 156,584.6 155,583.1 154,582.4 153,583.2 152,580.8 151,580.3 150,580.4 149,579.1 148,578.8 147,578.5 146,577.6 145,576.5 144,575.9 143,576.2 142,576.7 141,575.3 140,575.0 139,575.2 138,575.8 137,575.1 136,575.2 135,575.2 134,575.6 133,575.9 132,576.9 131,577.6 130,577.6 129,579.2 128,580.1 127,580.7 126,582.2 125,582.9 124,584.1 123,584.3 122,586.6 121,587.6 120,589.0 119,590.2 118,592.2 117,594.3 116,595.2 115,596.5 114,597.9 113,600.2 112,600.5 111,602.1 110,604.5 109,605.3 108,606.5 107,607.8 106,609.3 105,609.2 104,610.0 103,611.3 102,611.9 101,610.7 100,610.2 99,610.0 98,610.3 97,609.9 96,610.2 95,611.1 94,609.0 93,608.9 92,608.5 91,606.9 90,606.0 89,605.4 88,603.1 87,600.5 86,599.2 85,596.3 84,593.4 83,590.3 82,589.2 81,584.9 80,581.6 79,578.2 78,574.5 77,571.0 76,566.4 75,563.4 74,560.9 73,556.1 72,552.5 71,547.8 70,543.2 69,540.2 68,535.0 67,530.7 66,525.7 65,522.7 64,518.2 63,514.3 62,510.6 61,508.5 60,504.2 59,503.5 58,499.3 57,496.4 56,493.5 55,490.6 54,488.4 53,485.4 52,483.8 51,481.8 50,480.2 49,476.6 48,474.8 47,474.5 46,473.5 45,472.5 44,473.8 43,473.5 42,474.8 41,478.6 40,482.0 39,487.3 38,490.4 37,495.2 36,501.2 35,504.3 34,508.3 33,512.6 32,516.9 31,520.3 30,522.6 29,526.6 28,530.3 27,533.6 26,537.6 25,541.3 24,543.6 23,547.8 22,550.6 21,553.4 20,556.7 19,561.2 18,563.9 17,566.9 16,569.8 15,572.9 14,577.1 13,578.9 12,582.6 11,585.3 10,588.2 9,591.1 8,593.7 7,594.8 6,598.6 5,598.9 4,601.6 3,604.7"/>
<polygon id="w1" points="3,601.6 4,599.2 5,597.5 6,594.9 7,592.4 8,589.7 9,588.4 10,585.6 11,583.0 12,580.1 13,576.9 14,574.6 15,570.5 16,567.4 17,564.1 18,561.9 19,558.2 20,555.4 21,551.0 22,548.9 23,545.4 24,541.5 25,538.8 26,535.2 27,532.2 28,527.8 29,524.7 30,521.6 31,516.6 32,513.8 33,509.8 34,505.1 35,501.9 36,497.4 37,493.0 38,488.0 39,483.7 40,480.0 41,476.3 42,473.0 43,470.6 44,470.6 45,470.7 46,471.4 47,471.7 48,472.8 49,475.8 50,477.4 51,480.0 52,481.6 53,484.1 54,486.2 55,488.9 56,491.7 57,493.9 58,497.3 59,499.4 60,502.0 61,505.7 62,509.4 63,511.2 64,515.4 65,520.0 66,523.6 67,527.6 68,532.9 69,536.6 70,541.9 71,546.5 72,549.5 73,553.8 74,556.6 75,561.3 76,564.2 77,568.1 78,572.0 79,574.4 80,578.6 81,581.1 82,585.2 83,588.1 84,591.9 85,593.4 86,596.8 87,599.1 88,600.7 89,602.7 90,603.6 91,605.0 92,605.5 93,605.1 94,606.0 95,607.0 96,607.5 97,607.6 98,606.9 99,608.1 100,608.2 101,608.3 102,607.6 103,608.6 104,606.6 105,607.4 106,606.4 107,604.0 108,603.8 109,603.4 110,601.9 111,599.8 112,599.0 113,597.2 114,596.5 115,594.0 116,592.4 117,591.3 118,590.1 119,587.7 120,586.3 121,584.9 122,584.0 123,581.4 124,581.7 125,579.8 126,579.5 127,578.9 128,576.9 129,575.8 130,575.8 131,574.4 132,574.3 133,573.2 134,573.9 135,573.5 136,573.8 137,572.8 138,572.5 139,572.7 140,572.5 141,573.5 142,572.5 143,572.1 144,573.1 145,574.3 146,574.0 147,576.2 148,575.4 149,577.4 150,577.3 151,578.3 152,578.9 153,579.9 154,580.8 155,582.0 156,582.1 157,582.6 158,583.8 159,583.9 160,586.0 161,586.1 162,585.9 163,587.0 164,587.6 165,587.6 166,588.1 167,589.8 168,589.7 169,590.0 170,590.5 171,591.2 172,590.7 173,591.0 174,590.8 175,591.3 176,592.6 177,592.2 178,591.8 179,591.9 180,591.3 181,591.5 182,591.3 183,592.0 184,590.0 185,590.7 186,590.0 187,590.9 188,590.1 189,589.3 190,589.0 191,588.8 192,587.7 193,587.9 194,587.6 195,586.8 196,587.0 197,585.8 198,585.6 199,585.1 200,584.0 201,583.8 202,583.6 203,582.8 204,582.4 205,582.2 206,581.5 207,580.8 208,581.3 209,580.8 210,580.1 211,581.5 212,580.3 213,581.0 214,580.2 215,581.0 216,580.3 217,579.2 218,579.6 219,579.9 220,579.8 221,581.0 222,580.2 223,580.7 224,581.4 225,580.9 226,581.8 227,581.9 228,581.7 229,582.0 230,582.6 231,582.7 232,583.2 233,582.7 234,583.5 235,583.5 236,584.6 237,584.6 238,584.4 239,585.3 240,585.7 241,585.5 242,586.8 243,586.6 244,587.2 245,586.1 246,587.3 247,587.8 248,587.3 249,587.5 250,588.6 251,588.7 252,588.1 253,588.3 254,588.6 255,587.8 256,588.9 257,588.8 258,588.2 259,589.2 260,588.1 261,589.1 262,588.1 263,587.6 264,587.6 265,587.8 266,587.4 267,587.7 268,586.8 269,585.7 270,586.8 271,586.5 272,585.1 273,585.6 274,586.0 275,585.9 276,585.6 277,585.0 278,583.4 279,582.7 280,583.9 281,582.8 282,583.6 283,583.3 284,583.1 285,582.3 286,582.4 287,582.6 288,581.8 289,582.5 290,581.6 291,581.9 292,581.6 293,582.5 294,581.5 295,582.2 296,581.3 297,582.0 298,581.2 299,580.8 300,581.1 301,581.4 302,582.4 303,583.1 304,583.2 305,581.9 306,582.6 307,583.6 308,582.9 309,583.5 310,583.9 311,584.0 312,584.4 313,583.6 314,584.5 315,585.0 316,585.0 317,585.4 318,585.6 319,586.2 320,585.0 321,586.9 322,586.2 323,587.0 324,587.2 325,587.4 326,587.5 327,587.7 328,587.6 329,587.9 330,587.7 331,588.4 332,587.3 333,587.8 334,587.4 335,588.2 336,587.0 337,587.6 338,587.7 339,587.8 340,587.9 341,586.3 342,587.5 343,587.4 344,586.8 345,586.4 346,586.1 347,585.9 348,585.7 349,584.9 350,585.6 351,584.8 352,584.3 353,585.1 354,584.9 355,584.3 356,584.7 357,584.1 358,583.4 359,584.0 360,583.7 361,581.6 362,582.9 363,582.9 364,583.1 365,582.3 366,582.1 367,582.3 368,582.3 369,581.7 370,581.9 371,582.0 372,581.8 373,581.6 374,582.4 375,581.9 376,582.3 377,581.7 378,582.3 379,581.5 380,582.8 381,582.7 382,582.5 383,582.7 384,583.3 385,583.8 386,583.6 387,582.8 388,584.0 389,584.7 390,584.9 391,584.5 392,584.9 393,585.3 394,586.3 395,585.6 396,586.1 397,586.3 398,586.5 399,587.1 400,586.8 401,586.7 402,587.0 403,587.2 404,587.8 405,587.2 406,587.7 407,587.4 408,587.7 409,586.9 410,588.7 411,588.3 412,587.6 413,588.3 414,587.6 415,587.8 416,587.7 417,587.8 418,587.4 419,588.0 420,586.2 421,587.9 422,587.3 423,586.4 424,587.3 425,586.4 426,585.7 427,585.4 428,585.6 429,585.5 430,585.5 431,585.5 432,583.6 433,583.9 434,583.5 435,583.7 436,583.6 437,583.4 438,583.2 439,583.0 440,582.5 441,582.2 442,582.8 443,582.3 444,581.3 445,581.7 446,582.0 447,581.9 448,581.0 449,580.9 450,581.6 451,582.4 452,580.9 453,581.9 454,582.3 455,581.5 456,583.2 457,582.0 458,582.5 459,581.9 460,582.2 461,583.7 462,583.5 463,584.3 464,584.4 465,582.9 466,584.0 467,585.1 468,584.1 469,585.1 470,586.0 471,585.0 472,585.5 473,586.7 474,585.9 475,586.5 476,585.8 477,587.2 478,586.7 479,587.8 480,587.3 481,588.0 482,587.5 483,587.2 484,586.8 485,587.1 486,587.8 487,588.6 488,588.1 489,588.4 490,586.8 491,588.0 492,587.8 493,587.3 494,588.2 495,587.9 496,586.6 497,587.6 498,587.6 499,587.0 500,586.1 501,585.7 502,587.1 503,585.9 504,585.0 505,584.5 506,585.7 507,585.0 508,583.8 509,584.8 510,584.4 511,583.2 512,584.1 513,583.0 514,583.0 515,582.5 516,582.8 517,581.9 518,583.1 519,582.0 520,582.7 521,582.0 522,580.6 523,582.3 524,579.8 525,581.9 526,581.2 527,582.3 528,581.2 529,581.8 530,581.6 531,581.4 532,582.5 533,581.5 534,582.3 535,582.6 536,582.4 537,583.2 538,582.8 539,583.0 540,582.9 541,584.4 542,584.1 543,585.0 544,583.9 545,584.5 546,584.5 547,585.1 548,585.2 549,585.2 550,586.5 551,586.5 552,586.5 553,586.2 554,586.7 555,587.2 556,587.6 557,587.3 558,587.7 559,586.8 560,587.7 561,588.3 562,588.2 563,587.4 564,587.9 565,588.5 566,588.1 567,587.9 568,587.3 569,586.4 570,587.3 571,586.9 572,587.3 573,587.1 574,587.2 575,587.2 576,586.5 577,587.0 578,586.6 579,586.0 580,585.7 581,586.0 582,585.0 583,585.1 584,584.9 585,585.5 586,585.3 587,584.0 588,584.4 589,583.5 590,583.4 591,583.6 592,583.4 593,583.4 594,582.7 595,583.7 596,581.6 597,582.7 598,582.6 599,582.5 600,582.3 601,581.8 602,582.2 603,582.1 604,581.8 605,582.3 606,582.8 607,582.0 608,582.2 609,582.1 610,582.0 611,582.7 612,583.2 613,582.6 614,582.7 615,582.9 616,583.4 617,583.8 618,584.5 619,583.5 620,584.3 621,584.3 622,585.2 623,584.4 624,584.5 625,585.4 626,586.7 627,586.1 628,586.1 629,587.2 630,587.0 631,587.0 632,586.7 633,587.2 634,588.4 635,588.2 636,587.1 637,587.4 638,587.5 639,587.6 640,587.8 641,587.5 642,587.2 643,588.7 644,588.3 645,587.9 646,587.9 647,587.8 648,588.0 649,587.5 650,587.0 651,587.5 652,587.6 653,587.5 654,587.3 655,586.8 656,586.5 657,586.2 658,586.5 659,584.7 660,585.2 661,584.6 662,585.1 663,585.0 664,584.1 665,584.3 666,583.3 667,583.6 668,582.8 669,583.2 670,582.9 671,582.8 672,582.6 673,582.6 674,582.0 675,581.6 676,581.8 677,581.9 678,581.0 679,581.3 680,581.2 681,581.6 682,581.4 683,581.9 684,582.4 685,581.5 686,582.5 687,581.8 688,581.5 689,581.9 690,582.4 691,582.3 692,582.8 693,583.4 694,583.0 695,583.6 696,584.0 697,584.6 698,584.5 699,585.1 700,585.6 701,585.3 702,585.1 703,586.3 704,586.7 705,586.5 706,586.3 707,587.2 708,586.8 709,586.4 710,587.5 711,588.7 712,587.6 713,588.1 714,588.7 715,588.3 716,587.9 717,589.0 718,588.6 719,588.0 720,588.9 721,588.4 722,587.2 723,588.5 724,587.7 725,588.8 726,587.6 727,588.4 728,588.5 729,587.9 730,587.9 731,587.2 732,586.8 733,586.7 734,586.4 735,586.4 736,585.6 737,586.1 738,585.1 739,584.7 740,584.3 741,584.2 742,584.0 743,583.8 744,583.9 745,583.3 746,580.9 747,581.5 748,582.1 749,580.4 750,581.1 751,580.8 752,581.2 753,581.5 754,581.3 755,581.5 756,581.5 757,581.1 758,580.4 759,579.7 760,579.7 761,581.0 762,581.5 763,579.7 764,580.4 765,581.3 766,581.6 767,581.4 768,581.1 769,582.1 770,582.0 771,582.4 772,583.5 773,583.8 774,583.4 775,584.0 776,584.4 777,585.7 778,586.0 779,585.6 780,585.7 781,586.7 782,586.5 783,586.9 784,587.0 785,587.0 786,588.6 787,588.3 788,588.9 789,588.6 790,588.9 791,589.4 792,589.7 793,589.6 794,590.3 795,589.5 796,590.5 797,590.5 798,590.4 799,590.4 800,589.3 801,590.0 802,589.8 803,589.9 804,589.1 805,589.3 806,588.8 807,589.4 808,589.2 809,587.6 810,588.1 811,586.9 812,586.9 813,586.9 814,585.1 815,585.5 816,584.7 817,584.3 818,584.4 819,583.1 820,583.6 821,583.1 822,581.6 823,581.2 824,580.6 825,581.3 826,580.2 827,580.0 828,579.7 829,578.4 830,579.2 831,578.5 832,578.7 833,579.1 834,577.1 835,577.8 836,577.5 837,578.7 838,579.6 839,578.7 840,577.7 841,579.3 842,578.6 843,578.9 844,579.8 845,579.2 846,580.1 847,580.6 848,580.1 849,581.5 850,583.5 851,582.9 852,583.9 853,584.0 854,585.1 855,585.6 856,586.0 857,586.3 858,587.9 859,588.2 860,588.7 861,589.3 862,590.0 863,590.8 864,591.0 865,591.8 866,591.9 867,592.4 868,592.3 869,592.9 870,594.2 871,594.0 872,594.6 873,594.7 874,595.0 875,594.8 876,594.8 877,594.6 878,593.8 879,594.1 880,593.5 881,593.4 882,593.4 883,593.7 884,591.4 885,590.9 886,590.5 887,589.4 888,589.9 889,588.3 890,588.0 891,586.4 892,585.5 893,585.1 894,584.3 895,583.5 896,582.0 897,581.5 898,580.8 899,578.6 900,578.1 901,577.5 902,576.5 903,575.1 904,574.4 905,574.1 906,571.9 907,573.0 908,571.5 909,570.6 910,570.9 911,570.9 912,570.3 913,570.5 914,569.9 915,570.6 916,570.9 917,569.8 918,570.2 919,570.4 920,572.7 921,572.1 922,573.3 923,574.7 924,575.1 925,576.0 926,577.1 927,579.2 928,580.1 929,580.0 930,582.1 931,583.5 932,584.4 933,587.0 934,588.7 935,590.4 936,591.7 937,593.2 938,594.9 939,596.4 940,597.6 941,599.6 942,601.6 943,601.5 944,603.3 945,605.1 946,605.6 947,606.4 948,607.3 949,607.7 950,608.6 951,609.2 952,607.9 953,607.7 954,608.1 955,607.2 956,606.6 957,604.6 958,604.7 959,603.1 960,601.7 961,599.5 962,598.5 963,596.0 964,594.3 965,591.2 966,589.7 967,587.0 968,584.5 969,580.6 970,578.9 971,575.3 972,572.6 973,569.9 974,566.4 975,562.6 976,560.0 977,556.9 978,552.7 979,549.4 980,546.4 981,543.7 982,539.3 983,536.4 984,533.3 985,529.7 986,525.7 987,522.0 988,519.4 989,515.3 990,512.2 991,507.9 992,504.2 993,499.3 994,494.9 995,490.0 996,486.1 997,481.1 998,478.0 999,472.9 1000,471.4 1001,470.5 1002,470.4 1003,469.9 1004,472.0 1005,472.9 1006,474.0 1007,475.6 1008,477.9 1009,479.8 1010,482.5 1011,485.0 1012,486.8 1013,489.1 1014,492.9 1015,496.0 1016,498.1 1017,500.6 1018,503.7 1019,507.1 1020,510.7 1021,514.3 1022,518.0 1023,521.9 1024,525.3 1025,530.4 1026,535.8 1027,540.1 1028,543.2 1029,547.4 1030,551.3 1031,553.7 1032,559.3 1033,563.1 1034,566.9 1035,570.5 1036,573.2 1037,578.2 1038,581.2 1039,583.6 1040,587.0 1041,589.3 1042,592.7 1043,594.8 1044,596.9 1045,599.4 1046,601.4 1047,603.1 1048,603.9 1049,605.0 1050,605.6 1051,607.3 1052,606.6 1053,607.8 1054,607.0 1055,608.3 1056,608.3 1057,608.1 1058,609.1 1059,607.7 1060,607.7 1061,607.0 1062,608.0 1063,606.3 1064,606.5 1065,604.4 1066,604.2 1067,602.4 1068,601.0 1069,599.3 1070,598.4 1071,596.1 1072,594.9 1073,593.0 1074,591.4 1075,591.5 1076,588.4 1077,586.7 1078,585.9 1079,584.7 1080,583.1 1081,582.6 1082,581.2 1083,579.9 1084,578.5 1085,578.0 1086,576.1 1087,576.9 1088,575.8 1089,574.9 1090,574.0 1091,573.3 1092,573.2 1093,573.0 1094,573.0 1095,573.0 1096,572.6 1097,573.2 1098,573.0 1099,572.7 1100,574.2 1101,572.9 1102,572.9 1103,575.2 1104,575.1 1105,575.8 1106,577.2 1107,577.0 1108,578.5 1109,578.4 1110,579.5 1111,580.5 1112,580.3 1113,581.7 1114,582.0 1115,583.0 1116,583.6 1117,584.4 1118,585.3 1119,585.7 1120,586.7 1121,587.0 1122,587.9 1123,589.1 1124,588.3 1125,590.2 1126,590.0 1127,590.4 1128,590.2 1129,590.9 1130,591.0 1131,591.0 1132,591.6 1133,591.9 1134,591.7 1135,591.8 1136,591.9 1137,592.0 1138,591.0 1139,591.2 1140,591.5 1141,591.0 1142,590.6 1143,590.5 1144,589.8 1145,589.1 1146,589.2 1147,589.2 1148,588.7 1149,588.3 1150,587.8 1151,586.9 1152,586.6 1153,586.1 1154,585.7 1155,585.2 1156,585.0 1157,584.7 1158,584.5 1159,582.9 1160,582.7 1161,583.0 1162,582.5 1163,581.5 1164,581.7 1165,581.5 1166,580.4 1167,580.8 1168,581.4 1169,580.7 1170,581.3 1171,580.0 1172,580.5 1173,580.6 1174,578.9 1175,580.5 1176,579.9 1177,580.7 1178,580.8 1179,580.9 1180,580.5 1181,580.3 1182,580.4 1183,581.9 1184,582.4 1185,582.1 1186,582.1 1187,582.7 1188,583.5 1189,583.2 1190,583.3 1191,584.2 1192,583.9 1193,583.6 1194,585.0 1195,584.8 1196,585.9 1197,585.9 1198,584.7 1199,586.7 1200,586.4 1201,587.6 1202,586.9 1203,588.6 1204,587.8 1205,588.1 1206,588.0 1207,587.3 1208,588.4 1209,588.1 1210,587.9 1211,588.5 1212,589.2 1213,588.0 1214,587.9 1215,588.7 1216,588.1 1217,588.9 1218,588.6 1219,588.4 1220,588.5 1221,588.3 1222,587.5 1223,586.8 1224,586.6 1225,586.8 1226,587.1 1227,587.5 1228,585.4 1229,586.1 1230,585.8 1231,584.3 1232,586.1 1233,585.1 1234,584.5 1235,583.0 1236,584.2 1237,584.4 1238,584.7 1239,583.8 1240,582.9 1241,582.4 1242,582.7 1243,582.4 1244,582.6 1245,582.2 1246,581.6 1247,580.9 1248,581.1 1249,581.0 1250,580.3 1251,581.5 1252,581.4 1253,582.5 1254,580.5 1255,581.8 1256,581.4 1257,581.4 1258,581.7 1259,581.5 1260,582.6 1261,582.3 1262,582.5 1263,583.4 1264,583.3 1265,582.8 1266,583.5 1267,582.7 1268,583.1 1269,584.1 1270,584.5 1271,585.3 1272,585.3 1273,585.3 1274,585.7 1275,585.9 1276,585.4 1277,585.2 1278,585.8 1279,587.6 1280,586.7 1281,585.9 1282,587.7 1283,586.7 1284,588.1 1285,588.3 1286,588.2 1287,587.9 1288,588.0 1289,587.3 1290,587.7 1291,588.4 1292,588.4 1293,587.7 1294,588.4 1295,586.9 1296,587.7 1297,587.4 1298,587.1 1299,587.7 1300,587.8 1301,586.5 1302,586.1 1303,586.8 1304,586.8 1305,586.9 1306,586.7 1307,586.0 1308,585.6 1309,585.8 1310,584.9 1311,584.2 1312,583.6 1313,583.7 1314,584.4 1315,584.2 1316,583.3 1317,583.8 1318,583.1 1319,583.4 1320,581.9 1321,581.7 1322,582.7 1323,581.2 1324,582.6 1325,582.5 1326,581.9 1327,581.3 1328,582.0 1329,581.5 1330,581.6 1331,582.6 1332,581.5 1333,581.9 1334,581.5 1335,582.3 1336,582.6 1337,582.3 1338,583.2 1339,582.4 1340,583.5 1341,583.3 1342,582.4 1343,582.5 1344,584.1 1345,583.5 1346,585.2 1347,584.4 1348,585.2 1349,585.3 1350,585.3 1351,585.7 1352,585.0 1353,585.6 1354,586.2 1355,586.0 1356,586.5 1357,586.6 1358,587.3 1359,587.3 1360,588.2 1361,586.9 1362,587.5 1363,587.8 1364,588.4 1365,588.3 1366,588.0 1367,589.0 1368,587.2 1369,588.0 1370,587.4 1371,587.8 1372,587.3 1373,587.1 1374,587.5 1375,587.7 1376,587.8 1377,586.9 1378,585.7 1379,587.0 1380,586.9 1381,586.7 1382,586.5 1383,585.8 1384,586.0 1385,585.4 1386,585.7 1387,584.9 1388,584.0 1389,585.4 1390,584.5 1391,584.2 1392,583.6 1393,583.6 1394,583.0 1395,582.6 1396,583.0 1397,582.7 1398,582.9 1399,582.6 1400,581.4 1401,582.1 1402,583.1 1403,581.7 1404,582.8 1405,582.0 1406,581.2 1407,581.6 1408,581.3 1409,582.0 1410,582.3 1411,582.6 1412,583.0 1413,582.3 1414,583.3 1415,582.8 1416,582.4 1417,581.7 1418,582.8 1419,582.7 1420,583.7 1421,583.7 1422,583.5 1423,585.2 1424,584.7 1425,584.7 1426,584.8 1427,584.7 1428,585.7 1429,585.0 1430,586.1 1431,586.4 1432,586.9 1433,587.0 1434,587.1 1435,586.3 1436,587.3 1437,586.2 1438,587.9 1439,587.5 1440,587.9 1441,588.0 1442,588.2 1443,588.2 1444,588.0 1445,588.1 1446,587.8 1447,588.4 1448,587.9 1449,588.1 1450,588.2 1451,587.6 1452,586.4 1453,587.9 1454,587.5 1455,587.5 1456,585.5 1457,585.9 1458,587.1 1459,585.5 1460,586.5 1461,585.8 1462,584.9 1463,585.6 1464,584.8 1465,585.3 1466,585.0 1467,584.3 1468,583.5 1469,583.9 1470,583.9 1471,583.7 1472,583.1 1473,582.7 1474,582.8 1475,583.3 1476,583.0 1477,583.0 1478,581.5 1479,582.4 1480,582.2 1481,582.8 1482,582.0 1483,582.2 1484,582.8 1485,581.6 1486,581.3 1487,582.1 1488,581.6 1489,582.4 1490,581.7 1491,582.6 1492,582.1 1493,581.9 1494,582.4 1495,582.9 1496,583.1 1497,583.2 1498,583.7 1499,583.9 1500,584.2 1501,584.4 1502,585.2 1503,584.2 1504,584.6 1505,584.7 1506,585.4 1507,586.0 1508,586.3 1509,586.0 1510,586.8 1511,587.0 1512,586.7 1513,587.6 1514,587.9 1515,587.8 1516,587.1 1517,587.3 1518,588.1 1519,588.8 1520,588.3 1521,588.2 1522,587.9 1523,588.2 1524,588.0 1525,587.6 1526,587.5 1527,587.2 1528,587.5 1529,586.8 1530,586.7 1531,587.0 1532,587.2 1533,586.8 1534,586.1 1535,585.6 1536,585.9 1537,586.9 1538,586.0 1539,585.8 1540,585.6 1541,585.1 1542,584.1 1543,584.6 1544,584.8 1545,584.9 1546,584.3 1547,583.0 1548,583.7 1549,584.0 1550,583.0 1551,583.5 1552,583.2 1553,583.2 1554,581.9 1555,581.9 1556,581.9 1557,582.1 1558,581.9 1559,581.8 1560,581.9 1561,582.1 1562,581.7 1563,581.8 1564,581.3 1565,582.2 1566,582.3 1567,581.8 1568,582.2 1569,583.1 1570,582.9 1571,582.5 1572,583.3 1573,583.3 1574,583.8 1575,583.7 1576,582.8 1577,583.7 1578,584.4 1579,584.5 1580,584.1 1581,585.4 1582,585.6 1583,585.1 1584,585.8 1585,585.3 1586,586.4 1587,586.2 1588,586.0 1589,586.7 1590,587.5 1591,587.7 1592,587.4 1593,587.6 1594,588.4 1595,588.2 1596,587.4 1597,587.8 1598,588.3 1599,588.4 1600,588.4 1601,588.1 1602,587.3 1603,587.7 1604,587.7 1605,586.8 1606,588.3 1607,588.0 1608,585.8 1609,587.4 1610,587.8 1611,587.2 1612,585.4 1613,587.1 1614,585.9 1615,586.2 1616,585.5 1617,585.9 1618,585.6 1619,584.5 1620,584.8 1621,584.8 1622,584.1 1623,584.2 1624,583.8 1625,583.9 1626,583.2 1627,582.6 1628,582.0 1629,582.7 1630,582.0 1631,582.2 1632,581.8 1633,581.4 1634,582.1 1635,581.2 1636,581.1 1637,581.5 1638,581.7 1639,581.0 1640,581.5 1641,581.1 1642,581.6 1643,581.8 1644,582.3 1645,581.7 1646,581.6 1647,581.6 1648,582.5 1649,581.7 1650,582.1 1651,582.9 1652,583.8 1653,583.9 1654,583.6 1655,583.9 1656,584.2 1657,584.6 1658,585.2 1659,585.8 1660,585.7 1661,585.5 1662,585.5 1663,586.6 1664,587.2 1665,587.1 1666,587.2 1667,587.5 1668,588.0 1669,587.9 1670,587.9 1671,588.6 1672,588.3 1673,588.5 1674,588.4 1675,589.3 1676,589.6 1677,588.2 1678,588.2 1679,588.2 1680,589.1 1681,588.8 1682,587.7 1683,588.3 1684,587.4 1685,587.2 1686,587.2 1687,587.0 1688,587.0 1689,586.7 1690,585.4 1691,586.6 1692,586.5 1693,586.7 1694,585.9 1695,584.2 1696,585.3 1697,585.1 1698,584.0 1699,584.7 1700,583.1 1701,583.1 1702,582.4 1703,583.2 1704,581.6 1705,581.9 1706,582.3 1707,582.1 1708,581.6 1709,580.9 1710,581.5 1711,580.5 1712,581.5 1713,580.4 1714,581.3 1715,580.6 1716,580.3 1717,580.7 1718,581.0 1719,581.0 1720,580.1 1721,581.6 1722,581.2 1723,580.8 1724,581.3 1725,581.7 1726,582.2 1727,581.6 1728,582.9 1729,583.6 1730,584.0 1731,582.8 1732,584.5 1733,584.5 1734,584.6 1735,584.8 1736,584.7 1737,585.8 1738,586.1 1739,587.2 1740,586.4 1741,586.7 1742,587.1 1743,587.5 1744,588.7 1745,587.8 1746,589.4 1747,588.5 1748,588.8 1749,589.0 1750,590.2 1751,589.0 1752,590.8 1753,590.4 1754,589.5 1755,588.4 1756,590.6 1757,590.3 1758,590.3 1759,589.3 1760,589.4 1761,589.9 1762,588.5 1763,588.9 1764,589.1 1765,588.5 1766,587.5 1767,587.6 1768,587.2 1769,587.8 1770,586.1 1771,587.2 1772,585.5 1773,585.2 1774,585.1 1775,583.0 1776,584.1 1777,583.0 1778,582.5 1779,582.9 1780,581.2 1781,581.1 1782,580.6 1783,580.2 1784,580.1 1785,579.6 1786,579.3 1787,579.1 1788,578.7 1789,578.6 1790,577.8 1791,579.0 1792,578.0 1793,578.0 1794,578.7 1795,577.8 1796,578.2 1797,579.0 1798,577.9 1799,578.7 1800,579.0 1801,579.3 1802,580.1 1803,579.9 1804,580.0 1805,581.3 1806,580.7 1807,581.8 1808,582.1 1809,583.0 1810,583.4 1811,583.8 1812,585.2 1813,585.2 1814,586.6 1815,587.6 1816,587.2 1817,588.3 1818,588.2 1819,589.6 1820,589.7 1821,590.0 1822,591.7 1823,592.1 1824,592.1 1825,592.1 1826,592.7 1827,592.4 1828,594.4 1829,594.6 1830,594.3 1831,594.7 1832,594.7 1833,595.7 1834,594.7 1835,594.6 1836,594.2 1837,594.1 1838,594.0 1839,593.3 1840,593.1 1841,590.9 1842,590.8 1843,591.4 1844,590.6 1845,589.1 1846,588.8 1847,587.9 1848,587.0 1849,586.5 1850,585.9 1851,584.6 1852,584.0 1853,582.3 1854,581.8 1855,580.8 1856,579.2 1857,578.3 1858,578.8 1859,577.2 1860,575.2 1861,575.3 1862,574.3 1863,573.1 1864,573.4 1865,572.0 1866,571.8 1867,570.6 1868,570.6 1869,569.9 1870,571.6 1871,570.4 1872,570.1 1873,569.6 1874,569.8 1875,570.2 1876,571.0 1877,571.6 1878,572.2 1879,572.5 1880,573.4 1881,573.0 1882,575.3 1883,576.7 1884,577.7 1885,577.9 1886,579.8 1887,581.8 1888,582.8 1889,585.0 1890,585.8 1891,587.9 1892,588.5 1893,591.5 1894,592.4 1895,593.8 1896,595.3 1897,596.9 1898,599.2 1899,599.9 1900,601.3 1901,603.3 1902,604.1 1903,604.8 1904,605.8 1905,606.7 1906,608.2 1907,608.0 1908,608.9 1909,608.6 1910,608.3 1911,606.7 1912,607.1 1913,606.9 1914,605.8 1915,605.4 1916,604.4 1917,602.8 1918,601.4 1919,599.5 1920,597.7 1921,595.0 1922,592.2 1923,590.0 1924,587.6 1925,585.4 1926,582.4 1927,580.0 1928,577.5 1929,573.3 1930,570.9 1931,568.0 1932,564.2 1933,561.6 1934,558.6 1935,553.5 1936,550.6 1937,548.3 1938,544.5 1939,542.2 1940,538.6 1941,534.5 1942,531.3 1943,527.6 1944,524.9 1945,520.8 1946,517.8 1947,514.5 1948,510.2 1949,504.9 1950,501.5 1951,496.7 1952,493.0 1953,488.7 1954,484.2 1955,479.6 1956,476.0 1957,472.9 1958,471.1 1959,469.4 1960,470.9 1961,471.2 1962,471.4 1963,472.5 1964,473.9 1965,476.7 1966,479.5 1967,482.1 1968,483.8 1969,485.4 1970,488.8 1971,491.2 1972,492.9 1973,496.5 1974,499.4 1975,502.3 1976,505.7 1977,508.9 1978,512.0 1979,515.9 1980,519.6 1981,523.7 1982,527.4 1983,532.2 1984,537.1 1985,539.9 1986,545.0 1987,548.5 1988,553.5 1989,557.1 1990,561.3 1991,563.6 1992,568.5 1993,570.6 1994,575.3 1995,578.5 1996,582.2 1997,585.6 1998,587.1 1999,591.2 2000,593.6 2001,596.3 2002,598.8 2003,601.7 2004,602.3 2005,603.9 2006,604.6 2007,605.0 2008,606.7 2009,606.6 2010,608.0 2011,608.2 2012,607.8 2013,608.1 2014,607.3 2015,607.1 2016,608.4 2017,608.2 2018,607.0 2019,606.8 2020,607.2 2021,606.6 2022,604.6 2023,603.7 2024,601.8 2025,601.3 2026,599.0 2027,598.4 2028,597.7 2029,595.6 2030,593.9 2031,592.5 2032,590.3 2033,589.9 2034,588.0 2035,585.8 2036,585.5 2037,583.9 2038,582.5 2039,581.9 2040,580.5 2041,579.2 2042,578.2 2043,578.1 2044,576.7 2045,575.8 2046,575.3 2047,574.2 2048,573.7 2048,575.5 2047,575.6 2046,577.7 2045,578.9 2044,579.6 2043,579.8 2042,580.8 2041,581.4 2040,582.5 2039,584.8 2038,584.5 2037,586.8 2036,587.5 2035,588.3 2034,591.1 2033,591.9 2032,593.1 2031,595.1 2030,596.5 2029,598.4 2028,599.6 2027,600.7 2026,602.5 2025,603.4 2024,605.4 2023,606.9 2022,607.5 2021,609.1 2020,609.3 2019,610.3 2018,610.7 2017,610.6 2016,610.2 2015,610.4 2014,610.7 2013,610.0 2012,611.1 2011,609.4 2010,610.1 2009,610.0 2008,609.5 2007,607.8 2006,607.1 2005,606.0 2004,604.7 2003,603.3 2002,601.4 2001,599.2 2000,595.6 1999,593.0 1998,590.8 1997,587.9 1996,585.4 1995,582.0 1994,578.0 1993,574.9 1992,570.7 1991,567.1 1990,563.3 1989,559.9 1988,555.3 1987,551.8 1986,547.5 1985,543.6 1984,539.8 1983,534.8 1982,531.9 1981,526.0 1980,522.2 1979,518.6 1978,514.3 1977,511.4 1976,508.7 1975,505.1 1974,502.2 1973,499.7 1972,495.9 1971,494.5 1970,490.7 1969,489.2 1968,485.6 1967,483.8 1966,481.5 1965,480.3 1964,477.3 1963,475.3 1962,473.8 1961,474.2 1960,473.6 1959,474.2 1958,473.7 1957,474.7 1956,477.8 1955,482.7 1954,485.8 1953,490.6 1952,495.4 1951,499.9 1950,504.6 1949,508.7 1948,512.9 1947,516.7 1946,519.3 1945,522.8 1944,527.0 1943,530.9 1942,533.8 1941,537.4 1940,540.2 1939,544.8 1938,547.4 1937,550.6 1936,553.5 1935,557.4 1934,560.3 1933,564.0 1932,567.5 1931,570.2 1930,573.0 1929,576.7 1928,579.2 1927,582.6 1926,584.4 1925,588.0 1924,590.4 1923,593.1 1922,594.8 1921,597.8 1920,600.1 1919,602.1 1918,603.2 1917,605.5 1916,608.0 1915,607.3 1914,608.5 1913,609.4 1912,609.6 1911,610.7 1910,610.7 1909,610.8 1908,611.2 1907,610.9 1906,609.5 1905,609.9 1904,608.9 1903,607.9 1902,606.0 1901,606.3 1900,604.2 1899,601.7 1898,600.9 1897,599.8 1896,597.5 1895,596.8 1894,594.8 1893,594.5 1892,591.1 1891,590.7 1890,588.6 1889,587.2 1888,586.0 1887,583.8 1886,583.5 1885,582.0 1884,580.2 1883,578.5 1882,578.6 1881,577.3 1880,576.1 1879,575.3 1878,574.9 1877,573.5 1876,573.4 1875,572.2 1874,572.2 1873,572.8 1872,572.5 1871,572.5 1870,572.9 1869,572.5 1868,572.4 1867,573.3 1866,574.1 1865,574.5 1864,574.9 1863,575.8 1862,577.1 1861,577.6 1860,577.9 1859,579.4 1858,580.3 1857,581.1 1856,581.9 1855,582.7 1854,583.7 1853,584.8 1852,586.0 1851,586.8 1850,588.3 1849,589.7 1848,590.0 1847,591.1 1846,591.6 1845,592.1 1844,593.3 1843,592.9 1842,594.6 1841,596.4 1840,596.0 1839,595.7 1838,596.1 1837,596.8 1836,598.4 1835,597.5 1834,596.8 1833,597.4 1832,597.0 1831,596.2 1830,596.4 1829,597.0 1828,597.4 1827,595.2 1826,594.7 1825,595.0 1824,594.6 1823,594.5 1822,594.0 1821,594.1 1820,592.3 1819,591.6 1818,591.2 1817,591.4 1816,589.6 1815,589.2 1814,588.3 1813,588.1 1812,586.4 1811,586.7 1810,585.4 1809,585.6 1808,585.3 1807,584.8 1806,583.7 1805,583.9 1804,583.5 1803,581.9 1802,582.1 1801,581.9 1800,581.2 1799,581.7 1798,581.9 1797,582.1 1796,580.7 1795,580.1 1794,581.2 1793,580.0 1792,580.5 1791,580.5 1790,581.5 1789,580.4 1788,580.9 1787,582.0 1786,581.8 1785,581.5 1784,582.2 1783,583.2 1782,583.8 1781,583.5 1780,584.4 1779,584.8 1778,585.5 1777,586.1 1776,585.4 1775,587.5 1774,587.1 1773,587.9 1772,587.5 1771,588.2 1770,589.5 1769,589.3 1768,590.0 1767,590.6 1766,591.0 1765,591.1 1764,590.8 1763,592.4 1762,591.9 1761,592.7 1760,592.0 1759,592.6 1758,593.1 1757,592.3 1756,592.7 1755,593.0 1754,592.7 1753,591.6 1752,592.2 1751,592.0 1750,591.7 1749,592.4 1748,591.7 1747,590.9 1746,591.1 1745,590.8 1744,591.2 1743,590.2 1742,590.0 1741,589.9 1740,589.6 1739,589.3 1738,588.1 1737,588.5 1736,587.9 1735,587.2 1734,586.9 1733,586.9 1732,586.4 1731,585.9 1730,586.1 1729,585.1 1728,585.4 1727,584.4 1726,584.7 1725,583.6 1724,583.9 1723,584.3 1722,583.4 1721,583.2 1720,583.9 1719,583.4 1718,583.3 1717,582.9 1716,583.1 1715,583.9 1714,583.0 1713,583.4 1712,584.9 1711,583.9 1710,583.8 1709,584.1 1708,584.8 1707,584.8 1706,584.7 1705,584.5 1704,584.8 1703,585.7 1702,585.0 1701,586.0 1700,586.5 1699,587.1 1698,586.7 1697,588.1 1696,588.7 1695,588.0 1694,588.1 1693,588.7 1692,589.2 1691,588.5 1690,589.9 1689,589.5 1688,588.9 1687,590.3 1686,590.0 1685,590.2 1684,590.0 1683,591.2 1682,590.0 1681,591.1 1680,590.8 1679,591.4 1678,592.1 1677,591.0 1676,591.1 1675,591.6 1674,590.9 1673,590.6 1672,591.1 1671,590.6 1670,590.8 1669,590.0 1668,590.2 1667,589.7 1666,589.4 1665,589.4 1664,589.4 1663,590.3 1662,588.5 1661,588.6 1660,589.5 1659,588.5 1658,587.4 1657,587.3 1656,587.0 1655,586.3 1654,586.0 1653,586.1 1652,585.3 1651,585.2 1650,584.6 1649,585.7 1648,585.8 1647,584.3 1646,584.4 1645,584.5 1644,585.0 1643,583.9 1642,583.6 1641,583.7 1640,584.0 1639,584.1 1638,584.1 1637,584.0 1636,584.3 1635,584.4 1634,584.0 1633,583.4 1632,584.5 1631,584.9 1630,584.9 1629,584.9 1628,585.0 1627,585.3 1626,585.4 1625,587.0 1624,586.3 1623,585.4 1622,586.9 1621,586.8 1620,587.0 1619,587.5 1618,587.9 1617,587.3 1616,588.1 1615,588.1 1614,588.7 1613,588.3 1612,589.6 1611,589.4 1610,590.0 1609,590.8 1608,590.0 1607,589.8 1606,590.1 1605,590.5 1604,590.3 1603,590.8 1602,590.5 1601,590.4 1600,591.7 1599,590.6 1598,591.0 1597,590.6 1596,590.2 1595,591.1 1594,590.0 1593,590.3 1592,589.4 1591,589.3 1590,590.0 1589,589.2 1588,588.9 1587,589.1 1586,588.5 1585,588.8 1584,588.7 1583,587.5 1582,588.0 1581,587.7 1580,587.0 1579,587.3 1578,586.4 1577,586.1 1576,587.0 1575,585.9 1574,585.9 1573,585.3 1572,586.1 1571,585.6 1570,586.3 1569,585.1 1568,584.6 1567,585.1 1566,584.2 1565,584.0 1564,584.5 1563,584.3 1562,584.9 1561,584.1 1560,583.4 1559,584.5 1558,583.8 1557,584.3 1556,585.2 1555,584.5 1554,584.6 1553,585.3 1552,585.0 1551,585.8 1550,586.0 1549,586.1 1548,586.5 1547,586.7 1546,586.5 1545,586.5 1544,586.5 1543,587.7 1542,586.8 1541,587.7 1540,587.4 1539,588.0 1538,589.0 1537,588.5 1536,588.5 1535,588.8 1534,589.6 1533,589.6 1532,590.0 1531,590.0 1530,590.2 1529,589.0 1528,590.6 1527,591.0 1526,590.0 1525,590.2 1524,591.9 1523,590.1 1522,590.3 1521,590.2 1520,590.1 1519,590.9 1518,590.5 1517,590.7 1516,589.4 1515,589.3 1514,589.3 1513,589.8 1512,590.1 1511,589.3 1510,589.1 1509,588.6 1508,588.2 1507,589.6 1506,587.9 1505,587.6 1504,587.8 1503,587.5 1502,587.3 1501,586.8 1500,586.9 1499,586.9 1498,587.1 1497,586.9 1496,585.5 1495,585.5 1494,584.4 1493,585.8 1492,585.3 1491,585.5 1490,584.4 1489,584.2 1488,584.5 1487,584.3 1486,584.1 1485,584.2 1484,585.7 1483,585.2 1482,584.9 1481,584.9 1480,586.0 1479,585.5 1478,584.8 1477,585.4 1476,585.1 1475,584.9 1474,585.8 1473,585.9 1472,585.7 1471,587.3 1470,585.9 1469,585.7 1468,587.3 1467,587.6 1466,587.3 1465,587.6 1464,587.2 1463,587.7 1462,587.7 1461,588.9 1460,589.0 1459,588.9 1458,589.4 1457,588.3 1456,588.8 1455,589.8 1454,590.8 1453,590.9 1452,590.1 1451,590.0 1450,589.8 1449,591.1 1448,590.3 1447,590.3 1446,589.6 1445,591.0 1444,590.0 1443,590.9 1442,590.9 1441,590.2 1440,590.8 1439,590.6 1438,589.9 1437,589.6 1436,589.7 1435,589.6 1434,589.2 1433,589.3 1432,588.6 1431,588.0 1430,589.0 1429,587.2 1428,588.6 1427,587.7 1426,587.9 1425,588.0 1424,586.7 1423,588.5 1422,586.8 1421,585.9 1420,586.4 1419,586.6 1418,586.1 1417,585.9 1416,585.2 1415,586.1 1414,585.3 1413,584.7 1412,585.4 1411,584.4 1410,584.4 1409,584.4 1408,584.1 1407,584.6 1406,584.4 1405,583.9 1404,584.3 1403,584.3 1402,585.7 1401,584.7 1400,584.0 1399,585.6 1398,586.1 1397,585.1 1396,585.8 1395,585.2 1394,586.3 1393,586.4 1392,586.5 1391,587.0 1390,587.9 1389,587.0 1388,587.0 1387,587.7 1386,587.4 1385,587.7 1384,588.3 1383,589.5 1382,588.7 1381,588.4 1380,589.2 1379,589.4 1378,589.7 1377,590.4 1376,589.8 1375,590.5 1374,589.8 1373,589.8 1372,589.8 1371,591.2 1370,590.5 1369,590.1 1368,591.3 1367,590.5 1366,590.1 1365,589.7 1364,589.8 1363,590.1 1362,590.3 1361,591.0 1360,590.8 1359,589.9 1358,590.3 1357,589.4 1356,589.2 1355,589.3 1354,588.4 1353,588.3 1352,588.8 1351,587.5 1350,588.3 1349,588.0 1348,586.6 1347,587.1 1346,587.1 1345,586.1 1344,586.7 1343,586.5 1342,586.0 1341,586.6 1340,586.0 1339,585.3 1338,584.8 1337,585.0 1336,584.2 1335,584.8 1334,585.2 1333,584.4 1332,583.9 1331,585.0 1330,583.6 1329,584.0 1328,584.0 1327,584.8 1326,585.0 1325,584.4 1324,584.4 1323,584.8 1322,586.2 1321,585.4 1320,586.0 1319,585.4 1318,586.7 1317,585.9 1316,586.4 1315,585.6 1314,587.3 1313,585.7 1312,586.7 1311,587.0 1310,587.3 1309,588.4 1308,588.0 1307,588.7 1306,588.4 1305,588.4 1304,588.8 1303,588.8 1302,589.0 1301,590.2 1300,589.5 1299,591.2 1298,590.6 1297,590.8 1296,590.3 1295,590.9 1294,591.1 1293,590.3 1292,589.9 1291,592.2 1290,590.8 1289,589.6 1288,590.5 1287,590.5 1286,590.1 1285,590.1 1284,589.7 1283,590.4 1282,589.7 1281,589.6 1280,589.0 1279,589.8 1278,588.8 1277,589.4 1276,588.8 1275,588.0 1274,588.2 1273,588.3 1272,587.1 1271,587.0 1270,586.6 1269,588.4 1268,586.7 1267,586.2 1266,585.8 1265,585.3 1264,586.1 1263,585.7 1262,585.2 1261,586.0 1260,584.9 1259,584.7 1258,585.3 1257,585.5 1256,583.7 1255,584.3 1254,583.6 1253,584.6 1252,585.1 1251,585.1 1250,584.1 1249,585.1 1248,584.2 1247,585.8 1246,585.4 1245,584.3 1244,584.5 1243,585.4 1242,585.2 1241,584.6 1240,585.9 1239,586.4 1238,586.4 1237,585.7 1236,587.2 1235,586.5 1234,586.6 1233,588.3 1232,587.7 1231,587.8 1230,588.2 1229,588.8 1228,588.5 1227,589.1 1226,589.4 1225,589.7 1224,589.6 1223,591.1 1222,590.4 1221,589.4 1220,591.1 1219,592.1 1218,590.6 1217,590.4 1216,590.3 1215,590.8 1214,591.1 1213,590.6 1212,590.9 1211,591.0 1210,590.8 1209,591.0 1208,590.9 1207,590.6 1206,590.4 1205,590.5 1204,590.7 1203,589.4 1202,590.0 1201,589.2 1200,589.7 1199,589.4 1198,588.9 1197,588.3 1196,587.7 1195,587.0 1194,587.3 1193,587.2 1192,586.8 1191,587.1 1190,585.7 1189,585.2 1188,585.3 1187,585.4 1186,584.9 1185,584.9 1184,583.8 1183,584.0 1182,582.9 1181,583.4 1180,583.4 1179,584.0 1178,583.2 1177,583.4 1176,583.4 1175,583.0 1174,583.2 1173,582.6 1172,583.8 1171,582.6 1170,583.5 1169,583.7 1168,582.5 1167,583.6 1166,584.3 1165,584.0 1164,584.0 1163,584.4 1162,584.5 1161,585.5 1160,585.8 1159,586.8 1158,586.3 1157,587.2 1156,587.4 1155,588.3 1154,588.3 1153,588.4 1152,589.6 1151,589.0 1150,589.1 1149,591.4 1148,591.5 1147,593.0 1146,592.0 1145,592.9 1144,592.3 1143,593.6 1142,593.7 1141,592.7 1140,593.4 1139,593.6 1138,593.5 1137,595.1 1136,594.5 1135,594.0 1134,594.6 1133,595.5 1132,593.5 1131,593.9 1130,593.3 1129,592.9 1128,592.7 1127,593.1 1126,593.1 1125,592.1 1124,591.7 1123,590.7 1122,590.2 1121,590.0 1120,589.2 1119,587.8 1118,587.3 1117,587.4 1116,586.7 1115,586.2 1114,584.9 1113,584.5 1112,583.6 1111,582.6 1110,581.3 1109,582.4 1108,580.9 1107,579.6 1106,579.2 1105,578.1 1104,577.6 1103,577.3 1102,577.1 1101,576.0 1100,577.1 1099,576.1 1098,575.5 1097,575.0 1096,574.8 1095,575.7 1094,575.8 1093,575.8 1092,576.8 1091,575.8 1090,577.1 1089,577.5 1088,577.9 1087,578.6 1086,579.1 1085,579.2 1084,581.5 1083,581.9 1082,584.5 1081,584.7 1080,585.7 1079,586.7 1078,589.0 1077,590.0 1076,590.7 1075,594.3 1074,593.8 1073,596.7 1072,597.5 1071,598.9 1070,600.1 1069,601.5 1068,603.0 1067,606.2 1066,606.9 1065,607.6 1064,608.2 1063,608.8 1062,610.7 1061,610.4 1060,610.2 1059,611.0 1058,610.7 1057,611.4 1056,610.3 1055,611.2 1054,610.7 1053,609.5 1052,609.3 1051,609.6 1050,609.9 1049,608.0 1048,607.0 1047,606.3 1046,604.6 1045,602.4 1044,599.9 1043,597.9 1042,595.2 1041,591.4 1040,589.7 1039,587.0 1038,583.3 1037,580.6 1036,576.9 1035,573.9 1034,570.0 1033,565.2 1032,561.7 1031,558.4 1030,553.9 1029,551.0 1028,545.5 1027,541.5 1026,537.5 1025,533.4 1024,528.0 1023,523.4 1022,519.9 1021,517.5 1020,514.0 1019,509.7 1018,506.0 1017,503.3 1016,500.8 1015,497.9 1014,495.2 1013,492.6 1012,490.6 1011,487.9 1010,485.8 1009,481.9 1008,481.9 1007,478.9 1006,476.2 1005,475.1 1004,474.9 1003,473.6 1002,474.5 1001,474.4 1000,474.2 999,477.6 998,479.9 997,484.8 996,489.3 995,493.2 994,498.0 993,501.7 992,506.0 991,509.5 990,514.7 989,518.0 988,521.2 987,525.5 986,528.3 985,532.2 984,536.6 983,539.9 982,542.1 981,546.9 980,548.7 979,551.8 978,555.4 977,559.1 976,562.0 975,565.7 974,568.3 973,571.6 972,574.6 971,577.7 970,581.0 969,583.4 968,586.9 967,589.9 966,591.7 965,594.0 964,595.9 963,598.2 962,600.7 961,603.4 960,604.5 959,606.3 958,607.3 957,607.8 956,608.3 955,609.9 954,610.3 953,611.0 952,611.2 951,612.0 950,610.7 949,610.4 948,610.2 947,609.8 946,608.0 945,608.4 944,606.3 943,604.7 942,602.7 941,601.4 940,600.3 939,598.3 938,597.5 937,596.5 936,594.3 935,592.5 934,591.2 933,589.2 932,587.8 931,586.4 930,585.5 929,583.3 928,583.0 927,581.1 926,580.1 925,578.2 924,578.6 923,576.5 922,575.7 921,574.5 920,574.5 919,574.4 918,573.1 917,572.5 916,572.7 915,572.7 914,572.2 913,573.1 912,573.1 911,572.8 910,573.4 909,574.0 908,574.3 907,575.0 906,575.0 905,577.2 904,576.4 903,578.2 902,579.1 901,579.7 900,580.9 899,581.4 898,582.7 897,583.8 896,585.0 895,585.1 894,586.6 893,588.2 892,589.8 891,589.2 890,590.6 889,590.9 888,592.2 887,592.9 886,593.4 885,593.6 884,595.0 883,595.5 882,595.8 881,596.6 880,596.3 879,596.2 878,597.3 877,597.0 876,598.1 875,597.2 874,596.6 873,597.3 872,597.3 871,597.1 870,596.8 869,597.0 868,595.5 867,594.9 866,594.6 865,594.8 864,592.7 863,593.0 862,593.1 861,592.7 860,591.4 859,589.8 858,589.2 857,589.0 856,588.2 855,587.3 854,587.2 853,586.3 852,585.7 851,585.5 850,585.1 849,584.0 848,583.1 847,582.9 846,582.2 845,581.4 844,581.7 843,582.1 842,581.5 841,580.9 840,581.0 839,580.5 838,580.4 837,581.3 836,580.6 835,580.7 834,580.8 833,580.8 832,581.1 831,581.1 830,581.2 829,581.6 828,582.5 827,582.1 826,583.0 825,582.8 824,583.3 823,583.8 822,584.8 821,585.1 820,585.9 819,586.1 818,586.5 817,586.5 816,587.4 815,588.5 814,588.2 813,589.5 812,589.5 811,589.3 810,589.7 809,590.5 808,591.7 807,592.5 806,591.3 805,592.5 804,591.9 803,592.4 802,592.0 801,592.3 800,592.7 799,592.6 798,593.1 797,592.2 796,593.1 795,592.4 794,593.3 793,592.4 792,591.9 791,591.6 790,591.8 789,591.3 788,591.1 787,590.4 786,590.7 785,590.6 784,590.2 783,589.7 782,589.4 781,588.7 780,589.9 779,588.2 778,588.3 777,586.8 776,587.3 775,586.8 774,586.7 773,586.4 772,585.9 771,586.0 770,585.4 769,584.1 768,583.9 767,585.1 766,583.7 765,583.7 764,583.4 763,582.9 762,584.3 761,583.4 760,583.3 759,582.6 758,582.7 757,583.3 756,582.8 755,583.5 754,583.9 753,583.7 752,583.6 751,583.2 750,585.0 749,584.1 748,584.4 747,584.9 746,584.5 745,585.2 744,585.8 743,586.0 742,586.2 741,587.7 740,586.9 739,588.5 738,587.8 737,587.7 736,587.8 735,588.4 734,589.1 733,589.3 732,588.2 731,589.6 730,589.9 729,590.0 728,591.0 727,590.7 726,590.1 725,590.4 724,590.3 723,590.0 722,592.1 721,590.7 720,591.6 719,590.6 718,591.0 717,590.8 716,591.4 715,591.3 714,590.6 713,590.9 712,590.4 711,589.5 710,590.4 709,589.2 708,589.8 707,588.9 706,589.5 705,588.0 704,587.8 703,588.5 702,589.2 701,587.5 700,586.9 699,586.6 698,587.4 697,586.2 696,586.2 695,586.4 694,586.2 693,585.4 692,585.5 691,585.2 690,583.9 689,584.9 688,584.4 687,584.5 686,584.6 685,584.3 684,584.5 683,584.1 682,584.4 681,584.4 680,584.0 679,583.7 678,583.7 677,584.1 676,584.1 675,584.4 674,584.0 673,584.5 672,584.6 671,584.7 670,585.8 669,586.5 668,585.8 667,586.4 666,585.7 665,586.4 664,587.6 663,587.5 662,586.8 661,587.6 660,587.4 659,587.4 658,588.5 657,587.9 656,589.3 655,589.4 654,589.7 653,589.0 652,589.8 651,589.3 650,590.3 649,589.2 648,591.5 647,590.3 646,590.1 645,590.7 644,591.4 643,590.0 642,590.5 641,589.7 640,590.4 639,590.7 638,590.0 637,590.0 636,591.1 635,589.5 634,589.8 633,589.3 632,590.3 631,589.5 630,589.2 629,588.3 628,590.4 627,588.9 626,589.5 625,587.5 624,588.1 623,587.6 622,587.8 621,586.0 620,586.5 619,586.7 618,586.1 617,585.6 616,585.9 615,586.3 614,586.0 613,585.6 612,585.2 611,585.0 610,584.8 609,584.2 608,584.0 607,584.2 606,584.5 605,584.5 604,584.2 603,584.0 602,585.2 601,584.2 600,585.1 599,584.4 598,585.0 597,586.0 596,585.5 595,586.8 594,584.9 593,585.1 592,585.4 591,585.1 590,585.8 589,586.3 588,586.9 587,587.2 586,587.4 585,587.8 584,587.1 583,587.5 582,587.9 581,589.1 580,588.4 579,589.2 578,589.5 577,589.1 576,589.6 575,589.7 574,590.1 573,589.7 572,589.3 571,590.8 570,590.5 569,590.4 568,590.4 567,590.5 566,590.4 565,590.9 564,590.1 563,591.0 562,590.4 561,591.2 560,590.7 559,589.8 558,589.9 557,589.4 556,590.2 555,590.4 554,589.1 553,589.0 552,589.6 551,588.4 550,588.5 549,587.6 548,588.0 547,587.8 546,587.1 545,587.2 544,586.5 543,586.8 542,587.1 541,587.8 540,586.1 539,585.5 538,585.5 537,585.7 536,585.6 535,584.5 534,584.8 533,585.0 532,585.0 531,584.9 530,584.5 529,584.8 528,584.4 527,584.2 526,583.8 525,584.5 524,583.9 523,584.2 522,584.5 521,584.7 520,585.1 519,585.8 518,585.8 517,585.6 516,585.3 515,585.6 514,585.6 513,586.5 512,586.5 511,586.7 510,588.2 509,587.8 508,586.7 507,587.4 506,587.7 505,588.5 504,588.0 503,589.3 502,588.6 501,589.0 500,589.1 499,589.7 498,589.8 497,589.9 496,589.5 495,589.9 494,589.1 493,590.7 492,589.8 491,590.6 490,589.6 489,590.4 488,592.0 487,591.3 486,591.2 485,591.3 484,589.6 483,590.6 482,589.7 481,590.1 480,590.0 479,588.9 478,589.5 477,590.0 476,589.0 475,589.8 474,588.8 473,589.7 472,588.9 471,588.5 470,588.4 469,587.8 468,587.1 467,588.0 466,586.4 465,587.7 464,586.5 463,585.9 462,586.4 461,586.0 460,584.8 459,585.3 458,585.9 457,584.9 456,585.0 455,585.3 454,584.8 453,585.1 452,584.5 451,584.4 450,584.2 449,584.5 448,584.5 447,584.0 446,584.5 445,584.5 444,584.5 443,585.7 442,584.0 441,584.9 440,585.5 439,584.9 438,585.8 437,585.4 436,586.4 435,586.4 434,587.0 433,586.7 432,587.1 431,587.0 430,587.9 429,588.2 428,588.4 427,587.7 426,589.1 425,588.4 424,588.6 423,589.5 422,589.1 421,589.7 420,589.3 419,589.5 418,590.1 417,589.3 416,591.2 415,590.6 414,590.8 413,590.7 412,590.5 411,591.0 410,591.3 409,589.3 408,590.6 407,590.1 406,589.7 405,589.9 404,589.8 403,590.4 402,589.3 401,589.5 400,589.8 399,590.6 398,589.6 397,589.0 396,588.9 395,587.6 394,587.5 393,587.8 392,587.0 391,588.0 390,587.5 389,586.9 388,586.2 387,586.1 386,585.6 385,586.7 384,585.4 383,584.7 382,585.2 381,585.5 380,585.0 379,584.6 378,584.9 377,584.0 376,584.8 375,583.6 374,584.8 373,584.7 372,583.4 371,583.9 370,584.0 369,584.5 368,584.4 367,584.4 366,584.9 365,584.8 364,586.0 363,585.2 362,584.7 361,585.6 360,586.4 359,586.2 358,586.7 357,587.0 356,585.6 355,587.7 354,586.8 353,588.1 352,588.4 351,587.4 350,588.2 349,588.7 348,588.3 347,588.7 346,589.2 345,589.4 344,590.7 343,590.4 342,589.5 341,589.6 340,590.6 339,590.4 338,590.4 337,591.1 336,590.7 335,590.3 334,590.2 333,591.0 332,590.6 331,591.2 330,590.4 329,590.2 328,589.6 327,589.8 326,590.7 325,590.7 324,589.2 323,589.6 322,589.4 321,588.9 320,589.0 319,588.2 318,588.5 317,587.3 316,587.7 315,587.9 314,587.0 313,588.2 312,587.6 311,586.2 310,586.8 309,585.8 308,586.2 307,584.4 306,585.4 305,585.2 304,585.3 303,584.7 302,584.2 301,586.0 300,584.7 299,584.9 298,583.9 297,585.1 296,584.3 295,584.3 294,584.3 293,585.3 292,584.8 291,583.9 290,585.0 289,584.9 288,584.6 287,584.7 286,585.2 285,584.7 284,585.5 283,586.2 282,585.7 281,586.4 280,586.4 279,586.1 278,587.5 277,587.2 276,587.5 275,587.9 274,588.1 273,588.7 272,588.3 271,588.7 270,588.4 269,589.4 268,588.7 267,589.3 266,590.1 265,590.2 264,590.6 263,590.3 262,590.7 261,590.7 260,590.9 259,591.0 258,591.2 257,591.0 256,590.1 255,590.3 254,591.7 253,591.0 252,590.5 251,590.7 250,590.7 249,590.9 248,590.4 247,589.8 246,591.0 245,589.7 244,589.6 243,589.7 242,589.1 241,588.9 240,588.5 239,588.0 238,587.4 237,587.4 236,586.9 235,586.1 234,585.9 233,585.9 232,586.1 231,585.9 230,585.2 229,585.2 228,584.6 227,584.3 226,584.6 225,584.9 224,584.1 223,583.0 222,584.0 221,583.0 220,582.3 219,582.9 218,582.7 217,582.7 216,582.6 215,582.3 214,582.7 213,582.5 212,584.0 211,583.1 210,583.1 209,583.4 208,583.8 207,585.0 206,584.6 205,585.3 204,585.3 203,585.6 202,586.2 201,586.7 200,587.2 199,586.8 198,587.3 197,587.8 196,589.6 195,589.1 194,589.3 193,590.0 192,589.5 191,590.6 190,591.5 189,592.2 188,592.5 187,592.0 186,592.0 185,594.3 184,593.4 183,593.5 182,593.7 181,593.5 180,594.1 179,594.3 178,594.5 177,595.7 176,595.5 175,593.0 174,593.9 173,594.0 172,594.5 171,593.7 170,593.4 169,592.9 168,592.6 167,591.4 166,591.6 165,590.3 164,590.0 163,589.5 162,588.4 161,588.7 160,587.4 159,587.3 158,586.4 157,584.5 156,585.6 155,584.1 154,582.5 153,582.4 152,581.0 151,580.3 150,580.3 149,579.0 148,578.4 147,578.1 146,578.2 145,576.6 144,576.4 143,576.3 142,576.2 141,576.0 140,575.6 139,575.4 138,574.3 137,574.9 136,575.2 135,575.3 134,576.5 133,576.6 132,576.9 131,578.9 130,578.3 129,578.9 128,579.9 127,581.2 126,581.4 125,582.4 124,584.1 123,585.5 122,587.9 121,587.6 120,589.5 119,591.1 118,592.5 117,593.0 116,594.9 115,596.3 114,598.4 113,600.4 112,600.8 111,602.0 110,604.0 109,605.7 108,606.5 107,607.7 106,608.9 105,609.4 104,610.1 103,610.6 102,610.8 101,610.2 100,610.5 99,610.3 98,610.4 97,609.9 96,610.2 95,609.6 94,609.1 93,608.6 92,608.0 91,606.9 90,606.1 89,604.7 88,603.1 87,600.7 86,598.8 85,597.2 84,593.6 83,591.1 82,589.2 81,585.4 80,580.6 79,578.1 78,574.9 77,571.2 76,567.0 75,564.1 74,559.3 73,556.2 72,551.8 71,547.9 70,544.1 69,539.8 68,535.3 67,531.1 66,526.1 65,521.4 64,518.3 63,515.0 62,510.6 61,507.8 60,504.9 59,501.8 58,498.5 57,496.5 56,493.7 55,492.2 54,488.3 53,486.4 52,484.6 51,481.4 50,479.0 49,477.9 48,476.0 47,475.1 46,474.1 45,473.8 44,472.7 43,473.0 42,475.2 41,478.7 40,482.1 39,486.5 38,491.4 37,496.2 36,500.0 35,504.7 34,508.2 33,512.1 32,516.6 31,519.6 30,523.4 29,527.0 28,531.0 27,533.3 26,536.8 25,540.5 24,544.3 23,548.1 22,551.4 21,554.0 20,557.6 19,560.1 18,563.8 17,566.7 16,570.0 15,573.7 14,576.7 13,579.3 12,582.1 11,585.1 10,587.8 9,590.6 8,593.4 7,595.1 6,597.2 5,599.7 4,601.9 3,603.4"/>
<polygon id="w2" points="3,600.6 4,600.0 5,595.9 6,595.3 7,592.5 8,590.0 9,588.1 10,585.8 11,582.5 12,580.4 13,576.8 14,573.1 15,570.5 16,567.0 17,564.2 18,561.8 19,558.3 20,554.5 21,551.1 22,548.9 23,545.1 24,541.4 25,537.6 26,535.0 27,532.2 28,527.9 29,524.7 30,521.0 31,517.1 32,514.4 33,509.2 34,505.3 35,501.6 36,497.2 37,492.9 38,488.7 39,483.7 40,478.7 41,475.4 42,472.6 43,471.8 44,471.2 45,471.4 46,471.7 47,472.4 48,472.7 49,474.5 50,477.2 51,479.7 52,481.5 53,483.9 54,486.3 55,487.8 56,490.1 57,493.0 58,496.3 59,500.1 60,502.4 61,506.0 62,507.9 63,512.4 64,515.7 65,519.6 66,524.2 67,528.2 68,532.8 69,537.2 70,540.8 71,546.1 72,549.9 73,553.0 74,557.1 75,561.4 76,565.1 77,569.1 78,572.4 79,575.5 80,578.2 81,581.8 82,585.5 83,589.4 84,591.2 85,594.0 86,595.6 87,599.1 88,601.2 89,602.4 90,603.6 91,603.7 92,605.8 93,606.8 94,606.7 95,606.7 96,607.2 97,608.0 98,608.5 99,608.0 100,608.5 101,607.8 102,608.3 103,607.5 104,607.4 105,606.5 106,605.9 107,604.7 108,603.3 109,603.4 110,601.4 111,599.9 112,598.8 113,597.5 114,595.9 115,593.8 116,593.0 117,591.8 118,590.0 119,587.9 120,585.8 121,585.9 122,584.5 123,583.4 124,581.7 125,581.0 126,579.2 127,577.8 128,577.5 129,576.3 130,575.6 131,575.1 132,574.3 133,572.9 134,573.5 135,573.0 136,572.8 137,572.6 138,572.8 139,572.7 140,572.5 141,572.7 142,573.3 143,572.8 144,574.6 145,574.8 146,575.0 147,575.4 148,576.4 149,576.8 150,577.7 151,579.3 152,578.5 153,579.3 154,580.6 155,580.4 156,581.4 157,583.1 158,583.5 159,584.0 160,584.8 161,585.4 162,586.7 163,586.9 164,587.9 165,589.0 166,588.8 167,589.2 168,590.2 169,589.7 170,590.1 171,591.5 172,591.1 173,590.5 174,592.4 175,591.3 176,591.7 177,592.1 178,591.8 179,591.4 180,591.6 181,591.1 182,591.9 183,590.2 184,589.5 185,590.2 186,590.1 187,590.4 188,589.9 189,587.8 190,588.7 191,587.6 192,587.7 193,587.0 194,587.0 195,586.8 196,586.4 197,585.8 198,585.4 199,585.6 200,584.3 201,584.5 202,583.1 203,583.0 204,582.2 205,582.6 206,581.9 207,581.4 208,581.6 209,581.4 210,580.6 211,580.9 212,580.7 213,580.3 214,580.3 215,580.2 216,579.9 217,579.4 218,580.4 219,580.6 220,579.8 221,580.6 222,580.6 223,581.9 224,581.1 225,580.7 226,581.9 227,580.8 228,582.3 229,582.0 230,582.7 231,582.9 232,583.2 233,583.5 234,583.7 235,583.6 236,584.9 237,585.2 238,585.3 239,585.3 240,586.1 241,586.3 242,586.6 243,587.5 244,587.1 245,588.1 246,587.6 247,587.2 248,587.1 249,587.5 250,588.0 251,588.7 252,588.4 253,588.3 254,588.2 255,589.2 256,588.0 257,589.4 258,588.8 259,588.7 260,588.8 261,589.1 262,588.2 263,586.6 264,587.9 265,587.8 266,588.2 267,587.6 268,586.4 269,587.1 270,586.6 271,585.9 272,585.9 273,584.6 274,585.4 275,585.2 276,584.9 277,584.9 278,584.1 279,583.9 280,583.9 281,583.7 282,582.8 283,582.7 284,582.5 285,582.3 286,582.1 287,582.8 288,582.4 289,582.6 290,581.1 291,581.9 292,582.4 293,580.6 294,582.0 295,581.9 296,581.7 297,579.6 298,582.3 299,582.2 300,582.6 301,582.4 302,582.0 303,582.4 304,582.3 305,583.2 306,582.4 307,583.2 308,583.2 309,583.3 310,584.0 311,583.2 312,584.3 313,584.6 314,585.0 315,584.8 316,585.7 317,584.9 318,585.8 319,587.1 320,587.0 321,586.9 322,586.8 323,587.0 324,586.2 325,588.1 326,587.3 327,588.0 328,587.7 329,588.6 330,588.0 331,588.4 332,587.7 333,588.7 334,588.0 335,588.1 336,588.0 337,588.3 338,588.4 339,587.4 340,587.4 341,586.9 342,587.1 343,587.1 344,586.7 345,586.1 346,587.0 347,585.7 348,586.0 349,585.9 350,585.8 351,585.2 352,584.9 353,585.1 354,584.6 355,583.2 356,584.3 357,584.3 358,582.7 359,583.9 360,583.2 361,583.1 362,583.1 363,583.0 364,582.1 365,581.8 366,582.0 367,582.3 368,583.1 369,582.5 370,581.5 371,581.9 372,581.9 373,581.0 374,581.6 375,581.0 376,582.5 377,582.4 378,581.2 379,582.7 380,582.4 381,582.7 382,583.3 383,583.2 384,582.7 385,583.6 386,583.4 387,584.4 388,583.4 389,584.7 390,584.1 391,584.8 392,585.0 393,584.3 394,585.2 395,586.3 396,585.7 397,586.9 398,586.4 399,586.9 400,586.0 401,586.3 402,587.2 403,587.7 404,587.1 405,588.0 406,588.1 407,588.6 408,588.7 409,588.3 410,588.3 411,588.5 412,587.6 413,587.8 414,587.8 415,587.3 416,587.7 417,587.5 418,587.8 419,587.3 420,586.6 421,586.9 422,585.6 423,586.6 424,586.4 425,586.6 426,587.0 427,584.9 428,585.2 429,585.6 430,584.4 431,585.1 432,585.2 433,584.1 434,584.6 435,583.6 436,584.2 437,582.0 438,583.0 439,583.1 440,582.7 441,582.5 442,582.1 443,582.3 444,582.6 445,582.1 446,582.1 447,581.5 448,581.9 449,581.3 450,581.4 451,581.9 452,581.1 453,582.2 454,581.0 455,582.1 456,583.0 457,583.0 458,582.8 459,583.0 460,582.7 461,583.0 462,583.3 463,582.8 464,584.5 465,583.2 466,584.0 467,584.6 468,585.2 469,584.8 470,586.1 471,584.3 472,585.8 473,585.3 474,586.5 475,586.6 476,586.9 477,586.8 478,587.7 479,586.5 480,587.0 481,587.2 482,586.8 483,588.1 484,587.2 485,587.3 486,587.7 487,588.2 488,588.6 489,588.3 490,587.9 491,588.5 492,587.4 493,587.9 494,587.0 495,588.5 496,587.6 497,586.5 498,586.8 499,587.2 500,586.7 501,585.9 502,586.1 503,586.2 504,585.5 505,585.4 506,585.1 507,585.2 508,584.9 509,584.7 510,584.1 511,584.8 512,584.1 513,582.5 514,583.3 515,583.3 516,583.2 517,583.2 518,581.3 519,582.7 520,581.8 521,582.2 522,580.6 523,580.2 524,582.1 525,581.6 526,580.6 527,581.1 528,582.1 529,582.4 530,582.2 531,582.2 532,582.4 533,582.0 534,582.8 535,582.4 536,582.5 537,583.2 538,582.9 539,583.4 540,583.5 541,582.4 542,584.5 543,584.4 544,584.1 545,583.6 546,585.2 547,585.2 548,584.8 549,584.7 550,586.4 551,586.0 552,586.7 553,587.3 554,587.2 555,587.0 556,587.1 557,587.6 558,587.9 559,586.9 560,587.5 561,587.3 562,587.5 563,587.1 564,588.4 565,588.3 566,588.3 567,587.9 568,587.9 569,588.2 570,587.2 571,587.7 572,587.8 573,587.5 574,588.1 575,587.1 576,587.2 577,586.2 578,587.1 579,586.4 580,586.6 581,585.7 582,586.0 583,585.3 584,585.4 585,585.2 586,584.5 587,584.5 588,584.4 589,583.6 590,583.8 591,583.3 592,583.1 593,582.5 594,582.7 595,582.9 596,582.2 597,582.4 598,581.4 599,582.4 600,582.4 601,581.7 602,582.4 603,581.7 604,582.1 605,582.7 606,582.9 607,580.6 608,581.6 609,583.0 610,582.2 611,582.6 612,582.7 613,582.7 614,582.5 615,583.4 616,583.7 617,583.5 618,584.0 619,583.9 620,584.3 621,584.2 622,584.7 623,584.8 624,584.9 625,585.2 626,585.9 627,585.7 628,586.0 629,586.9 630,586.6 631,587.7 632,586.9 633,587.1 634,587.2 635,587.8 636,587.4 637,587.8 638,587.1 639,587.3 640,587.3 641,588.5 642,588.2 643,588.8 644,588.7 645,587.9 646,587.9 647,588.1 648,588.0 649,587.5 650,586.4 651,588.2 652,587.4 653,586.4 654,586.1 655,587.2 656,586.3 657,586.0 658,586.2 659,586.0 660,585.1 661,585.0 662,584.3 663,584.4 664,584.1 665,582.9 666,583.4 667,583.5 668,583.3 669,583.0 670,582.7 671,582.2 672,582.5 673,582.4 674,582.2 675,583.2 676,582.0 677,580.9 678,581.4 679,580.7 680,581.4 681,582.0 682,581.4 683,581.1 684,581.9 685,581.7 686,581.5 687,582.0 688,582.1 689,582.6 690,582.1 691,582.6 692,582.7 693,582.3 694,584.1 695,583.9 696,583.7 697,583.9 698,584.1 699,585.3 700,584.8 701,585.4 702,585.8 703,585.3 704,586.0 705,586.3 706,585.5 707,586.5 708,586.6 709,587.6 710,587.9 711,587.8 712,588.4 713,587.8 714,588.3 715,588.7 716,588.6 717,589.2 718,588.6 719,588.4 720,588.6 721,589.0 722,588.7 723,587.3 724,588.1 725,588.2 726,588.4 727,587.8 728,587.0 729,586.8 730,587.0 731,587.5 732,586.8 733,586.7 734,586.4 735,587.2 736,586.0 737,586.2 738,585.6 739,584.9 740,583.5 741,584.0 742,583.7 743,583.0 744,583.4 745,583.1 746,582.3 747,583.2 748,582.5 749,581.9 750,581.5 751,581.2 752,581.0 753,582.1 754,580.8 755,580.6 756,580.9 757,581.0 758,581.0 759,580.3 760,580.0 761,581.8 762,581.1 763,580.3 764,581.4 765,582.3 766,581.3 767,582.0 768,581.7 769,582.0 770,582.1 771,583.2 772,582.9 773,584.3 774,583.7 775,584.4 776,583.6 777,585.1 778,585.2 779,585.4 780,587.0 781,586.1 782,587.6 783,586.7 784,586.8 785,587.8 786,588.1 787,588.9 788,588.2 789,589.1 790,588.5 791,589.2 792,589.8 793,589.7 794,589.6 795,590.6 796,589.4 797,589.8 798,590.5 799,590.3 800,589.3 801,589.3 802,588.5 803,589.5 804,589.5 805,587.9 806,589.7 807,588.3 808,588.3 809,588.7 810,587.0 811,588.2 812,587.4 813,585.6 814,585.3 815,586.0 816,583.2 817,583.7 818,584.2 819,583.0 820,583.2 821,582.8 822,582.2 823,581.4 824,581.2 825,580.5 826,579.4 827,579.9 828,579.8 829,579.1 830,578.8 831,578.8 832,578.7 833,578.4 834,577.5 835,578.3 836,577.7 837,578.3 838,578.3 839,578.3 840,578.2 841,577.3 842,579.2 843,579.6 844,579.9 845,579.5 846,580.4 847,580.0 848,582.1 849,581.1 850,582.4 851,582.8 852,583.2 853,584.1 854,584.3 855,585.1 856,586.0 857,586.6 858,587.2 859,587.9 860,588.9 861,589.8 862,590.2 863,591.3 864,591.3 865,591.4 866,592.4 867,593.3 868,591.9 869,594.2 870,593.6 871,593.6 872,593.1 873,594.2 874,595.5 875,594.5 876,594.6 877,595.1 878,593.4 879,593.9 880,594.1 881,593.2 882,594.0 883,591.6 884,591.3 885,591.0 886,591.1 887,590.0 888,589.6 889,589.1 890,587.3 891,587.3 892,585.5 893,585.2 894,584.5 895,583.1 896,582.3 897,580.2 898,580.8 899,577.8 900,578.6 901,576.5 902,576.6 903,575.0 904,574.4 905,574.1 906,572.6 907,570.5 908,572.0 909,571.1 910,570.8 911,570.2 912,569.3 913,570.2 914,569.7 915,570.1 916,570.1 917,570.7 918,570.9 919,570.1 920,572.6 921,572.3 922,573.0 923,574.5 924,574.4 925,576.0 926,577.6 927,578.7 928,579.9 929,581.2 930,581.5 931,583.7 932,584.4 933,587.6 934,588.1 935,589.3 936,591.2 937,593.0 938,595.1 939,597.0 940,598.4 941,599.4 942,601.1 943,601.5 944,602.7 945,604.8 946,605.6 947,606.6 948,605.2 949,607.6 950,608.9 951,608.8 952,609.0 953,608.3 954,607.9 955,607.8 956,607.5 957,605.6 958,604.7 959,604.0 960,602.2 961,600.1 962,598.1 963,595.2 964,594.6 965,590.7 966,589.9 967,586.2 968,583.8 969,581.1 970,578.4 971,575.8 972,572.3 973,570.4 974,566.3 975,562.0 976,560.4 977,557.1 978,553.4 979,550.2 980,546.7 981,543.0 982,539.9 983,536.6 984,533.4 985,529.6 986,526.2 987,522.3 988,519.1 989,515.1 990,512.4 991,506.9 992,503.9 993,499.5 994,494.0 995,490.2 996,486.6 997,480.9 998,477.5 999,474.0 1000,471.5 1001,469.7 1002,469.8 1003,470.6 1004,470.8 1005,472.4 1006,473.7 1007,475.2 1008,478.2 1009,480.4 1010,482.6 1011,485.2 1012,487.2 1013,490.5 1014,491.8 1015,494.7 1016,498.4 1017,500.8 1018,503.4 1019,506.9 1020,509.7 1021,513.3 1022,517.5 1023,521.6 1024,525.5 1025,530.9 1026,535.6 1027,538.9 1028,542.3 1029,547.7 1030,551.2 1031,554.4 1032,558.7 1033,563.6 1034,565.9 1035,570.4 1036,573.3 1037,577.1 1038,579.8 1039,583.8 1040,586.4 1041,589.9 1042,593.1 1043,594.9 1044,597.8 1045,600.2 1046,601.2 1047,602.8 1048,603.7 1049,604.7 1050,606.2 1051,606.9 1052,607.8 1053,607.3 1054,608.5 1055,607.9 1056,608.1 1057,608.8 1058,607.8 1059,608.5 1060,607.5 1061,608.6 1062,607.1 1063,607.0 1064,605.7 1065,604.5 1066,603.4 1067,601.7 1068,600.3 1069,599.2 1070,597.9 1071,596.2 1072,595.4 1073,593.2 1074,592.0 1075,590.0 1076,588.3 1077,587.5 1078,585.3 1079,583.7 1080,582.7 1081,581.8 1082,580.8 1083,581.2 1084,578.9 1085,578.1 1086,576.0 1087,575.9 1088,574.9 1089,575.4 1090,573.9 1091,573.0 1092,573.4 1093,572.0 1094,573.2 1095,573.5 1096,573.2 1097,572.9 1098,573.5 1099,573.4 1100,573.4 1101,574.1 1102,573.2 1103,574.6 1104,575.5 1105,575.7 1106,576.9 1107,577.8 1108,578.3 1109,578.3 1110,578.8 1111,580.1 1112,581.0 1113,582.1 1114,582.3 1115,583.6 1116,584.3 1117,584.8 1118,585.0 1119,586.8 1120,586.8 1121,586.8 1122,587.8 1123,588.4 1124,588.7 1125,590.0 1126,589.3 1127,590.5 1128,590.4 1129,591.1 1130,591.1 1131,591.0 1132,591.1 1133,590.9 1134,591.9 1135,591.8 1136,591.5 1137,592.0 1138,591.1 1139,591.6 1140,591.2 1141,591.1 1142,590.7 1143,590.7 1144,590.6 1145,590.0 1146,589.1 1147,589.7 1148,588.6 1149,588.5 1150,588.1 1151,586.3 1152,586.8 1153,586.3 1154,585.3 1155,585.9 1156,585.4 1157,584.3 1158,583.9 1159,582.9 1160,582.1 1161,583.5 1162,583.2 1163,582.2 1164,582.1 1165,581.7 1166,580.9 1167,581.0 1168,580.8 1169,580.3 1170,580.4 1171,579.5 1172,580.6 1173,580.6 1174,579.2 1175,581.2 1176,579.1 1177,580.1 1178,579.8 1179,580.6 1180,579.8 1181,580.6 1182,581.9 1183,580.9 1184,581.8 1185,582.2 1186,582.8 1187,582.0 1188,583.2 1189,583.6 1190,582.9 1191,582.0 1192,584.4 1193,584.7 1194,584.7 1195,585.1 1196,585.8 1197,585.2 1198,585.6 1199,586.3 1200,586.4 1201,586.7 1202,586.6 1203,588.3 1204,588.3 1205,588.0 1206,588.7 1207,587.7 1208,588.0 1209,588.7 1210,588.6 1211,588.5 1212,588.7 1213,588.5 1214,589.1 1215,589.1 1216,587.9 1217,587.1 1218,588.1 1219,588.2 1220,587.8 1221,587.6 1222,587.9 1223,587.7 1224,586.6 1225,586.4 1226,586.4 1227,586.0 1228,586.6 1229,585.9 1230,586.0 1231,586.2 1232,585.5 1233,585.4 1234,584.2 1235,584.2 1236,584.1 1237,583.0 1238,583.4 1239,583.1 1240,583.5 1241,583.5 1242,581.5 1243,582.2 1244,582.7 1245,581.6 1246,582.7 1247,581.5 1248,581.6 1249,581.8 1250,582.2 1251,582.4 1252,581.2 1253,582.3 1254,582.3 1255,581.9 1256,582.0 1257,581.7 1258,582.2 1259,582.6 1260,582.8 1261,582.5 1262,582.6 1263,582.8 1264,582.9 1265,582.8 1266,583.1 1267,583.7 1268,583.9 1269,585.1 1270,584.1 1271,584.4 1272,584.5 1273,585.1 1274,586.0 1275,586.3 1276,585.7 1277,586.3 1278,586.4 1279,587.0 1280,586.7 1281,587.1 1282,586.5 1283,587.7 1284,587.9 1285,587.3 1286,588.2 1287,587.3 1288,587.3 1289,587.7 1290,588.6 1291,587.8 1292,588.9 1293,588.3 1294,587.5 1295,588.6 1296,587.5 1297,587.8 1298,587.4 1299,587.5 1300,587.1 1301,586.8 1302,587.6 1303,585.9 1304,585.6 1305,585.8 1306,584.9 1307,585.6 1308,585.2 1309,584.8 1310,584.8 1311,584.9 1312,584.1 1313,583.5 1314,583.9 1315,583.7 1316,584.0 1317,583.3 1318,583.8 1319,582.5 1320,582.1 1321,583.1 1322,582.0 1323,582.8 1324,582.4 1325,582.9 1326,581.8 1327,581.9 1328,581.0 1329,581.3 1330,582.1 1331,582.1 1332,582.4 1333,580.9 1334,581.8 1335,581.3 1336,582.5 1337,582.5 1338,582.4 1339,582.9 1340,581.6 1341,583.5 1342,583.7 1343,581.8 1344,583.7 1345,583.0 1346,584.1 1347,583.9 1348,584.2 1349,584.6 1350,584.2 1351,585.2 1352,584.9 1353,585.5 1354,585.8 1355,586.4 1356,586.4 1357,586.0 1358,587.9 1359,587.4 1360,587.7 1361,586.6 1362,587.1 1363,587.2 1364,587.8 1365,588.1 1366,587.4 1367,588.8 1368,588.5 1369,588.2 1370,588.4 1371,588.2 1372,587.9 1373,587.0 1374,587.8 1375,587.0 1376,587.6 1377,587.8 1378,587.3 1379,586.5 1380,586.5 1381,586.8 1382,586.3 1383,586.1 1384,585.0 1385,585.3 1386,586.1 1387,584.9 1388,584.8 1389,584.3 1390,584.3 1391,583.6 1392,584.2 1393,583.4 1394,584.1 1395,582.4 1396,582.7 1397,583.2 1398,583.2 1399,582.9 1400,582.6 1401,582.9 1402,582.1 1403,582.3 1404,582.1 1405,582.1 1406,581.9 1407,582.1 1408,582.3 1409,582.5 1410,582.0 1411,582.5 1412,582.0 1413,582.4 1414,582.2 1415,583.3 1416,582.5 1417,582.5 1418,582.7 1419,583.0 1420,583.5 1421,584.0 1422,583.5 1423,583.1 1424,584.5 1425,584.4 1426,584.6 1427,584.8 1428,584.4 1429,584.6 1430,585.9 1431,585.9 1432,585.8 1433,586.7 1434,586.5 1435,586.5 1436,587.2 1437,587.6 1438,587.4 1439,588.1 1440,587.3 1441,588.2 1442,588.0 1443,588.3 1444,588.0 1445,587.3 1446,587.7 1447,587.5 1448,587.8 1449,587.3 1450,587.5 1451,587.2 1452,587.5 1453,587.7 1454,587.7 1455,586.7 1456,587.0 1457,586.9 1458,586.4 1459,586.4 1460,586.5 1461,584.9 1462,586.0 1463,585.3 1464,585.2 1465,584.1 1466,585.3 1467,584.2 1468,584.3 1469,583.7 1470,583.9 1471,583.8 1472,582.9 1473,583.6 1474,581.8 1475,583.2 1476,582.4 1477,582.8 1478,582.5 1479,582.3 1480,582.9 1481,581.3 1482,582.1 1483,582.2 1484,582.4 1485,581.5 1486,582.4 1487,581.7 1488,582.8 1489,581.8 1490,582.1 1491,583.1 1492,582.4 1493,582.9 1494,583.1 1495,583.3 1496,583.4 1497,582.5 1498,584.3 1499,584.2 1500,584.0 1501,584.4 1502,583.6 1503,584.6 1504,584.7 1505,585.6 1506,585.6 1507,585.6 1508,586.7 1509,586.1 1510,585.9 1511,586.9 1512,587.0 1513,586.7 1514,587.7 1515,587.6 1516,587.8 1517,586.9 1518,588.3 1519,588.2 1520,588.2 1521,587.4 1522,588.0 1523,586.9 1524,587.8 1525,587.3 1526,587.3 1527,587.9 1528,587.2 1529,586.5 1530,588.0 1531,587.1 1532,586.6 1533,587.1 1534,586.9 1535,587.6 1536,586.5 1537,586.9 1538,585.8 1539,586.0 1540,584.5 1541,585.1 1542,583.9 1543,584.4 1544,584.4 1545,583.6 1546,584.2 1547,584.2 1548,582.7 1549,583.6 1550,582.6 1551,582.1 1552,582.9 1553,582.9 1554,582.8 1555,582.4 1556,582.4 1557,582.2 1558,581.7 1559,582.2 1560,581.8 1561,582.1 1562,581.2 1563,581.2 1564,582.0 1565,581.8 1566,582.0 1567,581.7 1568,582.5 1569,582.5 1570,582.3 1571,582.3 1572,583.0 1573,583.0 1574,583.7 1575,583.8 1576,583.7 1577,583.9 1578,583.8 1579,584.9 1580,585.3 1581,584.8 1582,585.8 1583,586.3 1584,586.4 1585,586.6 1586,587.0 1587,586.7 1588,586.7 1589,586.6 1590,587.0 1591,587.7 1592,588.2 1593,587.3 1594,587.2 1595,588.2 1596,588.3 1597,588.9 1598,587.8 1599,588.1 1600,588.5 1601,587.7 1602,588.3 1603,587.9 1604,587.5 1605,586.7 1606,587.8 1607,587.7 1608,587.0 1609,587.5 1610,586.9 1611,585.1 1612,586.6 1613,586.6 1614,585.6 1615,585.9 1616,586.0 1617,585.9 1618,583.9 1619,585.4 1620,584.4 1621,584.3 1622,585.0 1623,584.6 1624,583.8 1625,583.2 1626,581.8 1627,583.1 1628,581.8 1629,582.4 1630,582.1 1631,581.9 1632,582.4 1633,582.5 1634,582.3 1635,582.2 1636,582.6 1637,582.0 1638,582.1 1639,582.0 1640,581.6 1641,581.7 1642,582.0 1643,582.0 1644,582.3 1645,582.2 1646,581.6 1647,583.4 1648,581.7 1649,583.1 1650,582.8 1651,583.1 1652,583.2 1653,583.3 1654,584.0 1655,584.3 1656,584.2 1657,584.4 1658,583.5 1659,585.3 1660,586.1 1661,585.9 1662,586.8 1663,587.0 1664,586.6 1665,587.3 1666,587.0 1667,587.2 1668,588.3 1669,587.5 1670,587.2 1671,588.0 1672,588.4 1673,588.7 1674,587.9 1675,588.5 1676,587.9 1677,588.2 1678,588.9 1679,588.4 1680,588.1 1681,588.1 1682,588.8 1683,587.7 1684,588.6 1685,587.0 1686,588.1 1687,588.0 1688,586.8 1689,586.4 1690,586.5 1691,586.1 1692,585.4 1693,585.8 1694,585.8 1695,585.3 1696,584.9 1697,585.0 1698,583.6 1699,584.2 1700,583.4 1701,583.2 1702,582.7 1703,583.2 1704,581.6 1705,582.1 1706,583.1 1707,581.7 1708,582.5 1709,580.9 1710,581.5 1711,580.8 1712,581.5 1713,581.0 1714,580.2 1715,580.7 1716,580.7 1717,580.6 1718,580.5 1719,579.8 1720,579.7 1721,580.7 1722,581.5 1723,581.5 1724,581.8 1725,581.6 1726,582.1 1727,582.5 1728,582.6 1729,581.5 1730,583.3 1731,584.2 1732,583.6 1733,584.7 1734,584.6 1735,585.4 1736,584.7 1737,585.5 1738,586.1 1739,587.3 1740,586.3 1741,586.9 1742,587.6 1743,588.6 1744,587.5 1745,588.6 1746,588.8 1747,588.8 1748,589.9 1749,590.0 1750,589.3 1751,589.7 1752,589.8 1753,589.9 1754,589.9 1755,589.1 1756,589.2 1757,590.4 1758,590.4 1759,590.5 1760,589.9 1761,589.4 1762,589.0 1763,588.1 1764,589.0 1765,587.9 1766,588.3 1767,587.7 1768,588.4 1769,587.1 1770,586.9 1771,586.4 1772,585.2 1773,585.1 1774,584.5 1775,584.5 1776,583.7 1777,582.5 1778,583.3 1779,581.8 1780,581.7 1781,581.3 1782,580.4 1783,580.7 1784,579.1 1785,580.2 1786,579.5 1787,579.2 1788,579.3 1789,578.1 1790,578.5 1791,578.1 1792,578.4 1793,578.3 1794,577.5 1795,578.5 1796,578.0 1797,578.5 1798,578.3 1799,577.3 1800,578.6 1801,579.3 1802,579.2 1803,579.5 1804,581.0 1805,581.1 1806,581.1 1807,582.4 1808,580.9 1809,582.7 1810,583.4 1811,584.5 1812,584.9 1813,585.8 1814,586.3 1815,586.8 1816,587.7 1817,587.3 1818,589.6 1819,589.1 1820,590.2 1821,591.1 1822,591.8 1823,591.9 1824,593.1 1825,593.1 1826,593.6 1827,594.3 1828,594.4 1829,594.3 1830,593.6 1831,594.9 1832,595.2 1833,594.0 1834,594.5 1835,594.2 1836,594.6 1837,594.2 1838,594.2 1839,592.6 1840,593.5 1841,593.0 1842,591.9 1843,591.4 1844,591.0 1845,590.0 1846,589.3 1847,588.2 1848,587.0 1849,586.5 1850,585.1 1851,584.4 1852,583.2 1853,583.2 1854,581.0 1855,580.5 1856,579.3 1857,578.5 1858,577.6 1859,576.6 1860,575.1 1861,574.2 1862,574.7 1863,572.3 1864,572.2 1865,571.7 1866,570.9 1867,570.9 1868,570.5 1869,571.0 1870,570.4 1871,569.5 1872,569.8 1873,570.5 1874,570.2 1875,569.6 1876,571.0 1877,571.5 1878,571.6 1879,572.3 1880,573.5 1881,573.9 1882,575.7 1883,577.2 1884,577.9 1885,579.4 1886,580.5 1887,581.6 1888,581.9 1889,585.1 1890,585.8 1891,587.8 1892,589.4 1893,591.2 1894,592.7 1895,593.9 1896,595.8 1897,597.1 1898,598.9 1899,600.6 1900,601.5 1901,602.3 1902,604.1 1903,604.4 1904,605.9 1905,607.7 1906,608.0 1907,608.0 1908,608.1 1909,609.1 1910,608.9 1911,608.6 1912,607.7 1913,606.1 1914,606.9 1915,604.8 1916,604.1 1917,601.9 1918,600.5 1919,599.6 1920,597.3 1921,596.1 1922,592.7 1923,590.0 1924,588.4 1925,586.0 1926,582.4 1927,579.6 1928,576.8 1929,573.9 1930,570.3 1931,567.3 1932,563.7 1933,561.1 1934,557.9 1935,554.7 1936,551.0 1937,549.0 1938,543.9 1939,542.0 1940,537.4 1941,533.9 1942,531.6 1943,527.3 1944,524.6 1945,520.4 1946,517.0 1947,514.2 1948,509.7 1949,505.8 1950,501.2 1951,497.0 1952,493.6 1953,488.4 1954,484.0 1955,479.8 1956,475.1 1957,472.4 1958,471.3 1959,470.8 1960,471.4 1961,471.2 1962,471.8 1963,472.8 1964,474.7 1965,476.9 1966,478.6 1967,480.6 1968,484.6 1969,485.0 1970,489.3 1971,491.1 1972,494.3 1973,496.5 1974,499.1 1975,502.2 1976,505.2 1977,508.6 1978,511.8 1979,514.6 1980,519.2 1981,523.5 1982,527.8 1983,533.0 1984,537.1 1985,540.6 1986,545.6 1987,549.0 1988,553.8 1989,557.0 1990,561.2 1991,564.5 1992,567.8 1993,571.6 1994,575.9 1995,578.6 1996,583.1 1997,585.4 1998,588.7 1999,590.9 2000,594.7 2001,595.6 2002,597.4 2003,601.0 2004,602.4 2005,604.0 2006,604.8 2007,605.0 2008,606.4 2009,606.9 2010,606.4 2011,607.5 2012,607.3 2013,608.0 2014,608.8 2015,607.9 2016,607.9 2017,608.4 2018,608.5 2019,607.1 2020,607.5 2021,605.4 2022,605.2 2023,602.8 2024,603.0 2025,601.2 2026,599.9 2027,598.5 2028,597.5 2029,594.9 2030,594.5 2031,592.3 2032,591.3 2033,589.5 2034,588.4 2035,587.4 2036,586.3 2037,583.2 2038,582.9 2039,581.5 2040,581.1 2041,579.0 2042,577.8 2043,576.9 2044,576.6 2045,574.9 2046,574.9 2047,574.3 2048,573.5 2048,576.5 2047,577.6 2046,576.6 2045,578.5 2044,579.0 2043,579.3 2042,580.9 2041,581.3 2040,582.5 2039,584.0 2038,584.8 2037,586.5 2036,587.8 2035,590.0 2034,590.8 2033,591.7 2032,593.3 2031,595.3 2030,596.5 2029,598.2 2028,599.3 2027,601.2 2026,602.4 2025,604.3 2024,605.3 2023,606.6 2022,607.3 2021,608.6 2020,610.0 2019,610.2 2018,610.9 2017,610.1 2016,612.3 2015,611.4 2014,611.1 2013,610.1 2012,610.1 2011,610.2 2010,609.9 2009,609.7 2008,608.3 2007,607.7 2006,607.8 2005,605.5 2004,604.3 2003,603.8 2002,602.5 2001,598.9 2000,596.7 1999,593.5 1998,591.4 1997,587.5 1996,584.2 1995,580.9 1994,578.1 1993,574.0 1992,571.3 1991,567.2 1990,563.5 1989,559.6 1988,556.2 1987,551.0 1986,547.3 1985,544.1 1984,540.0 1983,535.8 1982,531.3 1981,526.7 1980,522.4 1979,517.3 1978,513.1 1977,511.7 1976,508.1 1975,504.6 1974,502.4 1973,498.7 1972,497.2 1971,493.9 1970,491.4 1969,489.0 1968,486.8 1967,484.2 1966,481.8 1965,480.0 1964,477.6 1963,475.2 1962,474.8 1961,474.4 1960,472.9 1959,472.8 1958,474.1 1957,475.7 1956,479.0 1955,481.8 1954,486.1 1953,490.4 1952,495.4 1951,499.9 1950,504.3 1949,508.3 1948,513.4 1947,515.9 1946,519.3 1945,522.9 1944,527.7 1943,531.9 1942,533.6 1941,537.0 1940,540.8 1939,545.1 1938,547.3 1937,550.9 1936,553.7 1935,557.9 1934,560.6 1933,564.5 1932,567.0 1931,572.0 1930,573.2 1929,575.9 1928,578.9 1927,582.6 1926,585.1 1925,587.6 1924,590.3 1923,593.4 1922,594.6 1921,597.0 1920,600.4 1919,601.7 1918,604.0 1917,605.2 1916,606.1 1915,607.8 1914,608.9 1913,609.9 1912,610.3 1911,610.5 1910,610.9 1909,611.6 1908,611.5 1907,611.2 1906,609.9 1905,609.2 1904,608.4 1903,606.6 1902,606.3 1901,605.4 1900,604.2 1899,602.0 1898,602.2 1897,599.5 1896,597.6 1895,595.7 1894,595.6 1893,592.9 1892,593.0 1891,590.8 1890,588.6 1889,587.0 1888,585.6 1887,584.6 1886,583.0 1885,581.8 1884,580.2 1883,578.9 1882,578.6 1881,577.0 1880,577.2 1879,576.2 1878,574.9 1877,573.3 1876,574.8 1875,573.3 1874,573.0 1873,572.8 1872,573.2 1871,572.6 1870,572.5 1869,572.6 1868,573.1 1867,572.7 1866,573.2 1865,575.2 1864,574.6 1863,575.7 1862,577.6 1861,577.9 1860,578.3 1859,578.9 1858,580.2 1857,581.1 1856,582.6 1855,582.9 1854,583.4 1853,585.4 1852,586.0 1851,587.2 1850,587.8 1849,589.1 1848,590.2 1847,591.9 1846,591.4 1845,592.8 1844,593.0 1843,593.4 1842,593.9 1841,595.5 1840,595.6 1839,595.8 1838,596.4 1837,597.7 1836,597.1 1835,596.7 1834,598.0 1833,597.1 1832,597.0 1831,597.6 1830,596.7 1829,597.3 1828,597.4 1827,597.3 1826,595.4 1825,594.6 1824,595.4 1823,594.2 1822,593.1 1821,594.5 1820,591.9 1819,592.2 1818,591.5 1817,591.6 1816,590.3 1815,589.2 1814,589.5 1813,588.7 1812,587.0 1811,586.7 1810,585.6 1809,585.3 1808,585.1 1807,583.8 1806,583.9 1805,582.8 1804,583.2 1803,582.6 1802,582.9 1801,581.5 1800,580.5 1799,580.8 1798,580.8 1797,580.8 1796,580.4 1795,580.3 1794,580.0 1793,580.3 1792,581.2 1791,581.0 1790,580.9 1789,581.4 1788,581.9 1787,581.6 1786,582.0 1785,582.9 1784,582.1 1783,583.6 1782,583.4 1781,584.4 1780,584.2 1779,584.7 1778,585.8 1777,586.1 1776,586.6 1775,586.1 1774,587.4 1773,587.8 1772,588.1 1771,588.7 1770,589.4 1769,589.6 1768,590.0 1767,589.9 1766,590.7 1765,590.5 1764,591.3 1763,591.5 1762,592.6 1761,593.2 1760,591.8 1759,592.6 1758,592.5 1757,593.4 1756,592.9 1755,593.5 1754,593.1 1753,592.1 1752,591.9 1751,592.1 1750,592.2 1749,591.4 1748,591.0 1747,592.0 1746,591.0 1745,590.7 1744,590.7 1743,591.1 1742,589.7 1741,589.6 1740,589.6 1739,588.9 1738,588.3 1737,588.6 1736,588.5 1735,587.7 1734,587.3 1733,586.8 1732,587.2 1731,585.8 1730,586.4 1729,585.6 1728,585.0 1727,584.7 1726,585.5 1725,584.7 1724,584.5 1723,583.3 1722,584.9 1721,584.0 1720,584.9 1719,582.9 1718,583.3 1717,583.7 1716,583.4 1715,583.5 1714,584.1 1713,583.7 1712,582.9 1711,584.7 1710,583.9 1709,584.0 1708,584.0 1707,584.9 1706,584.7 1705,584.9 1704,585.0 1703,584.9 1702,585.5 1701,586.2 1700,586.6 1699,586.6 1698,586.4 1697,587.3 1696,587.2 1695,588.7 1694,588.4 1693,588.2 1692,588.5 1691,589.1 1690,589.6 1689,589.5 1688,589.8 1687,590.2 1686,589.8 1685,590.8 1684,589.8 1683,590.0 1682,591.0 1681,591.9 1680,591.0 1679,592.3 1678,591.1 1677,591.3 1676,592.0 1675,591.0 1674,591.9 1673,592.3 1672,590.8 1671,591.7 1670,591.2 1669,590.5 1668,590.3 1667,590.2 1666,588.7 1665,589.4 1664,588.4 1663,588.6 1662,588.4 1661,587.7 1660,589.5 1659,587.2 1658,586.9 1657,587.3 1656,586.9 1655,587.0 1654,586.4 1653,585.7 1652,586.3 1651,584.9 1650,585.4 1649,586.4 1648,585.0 1647,584.6 1646,584.6 1645,585.2 1644,585.2 1643,584.2 1642,584.4 1641,585.0 1640,583.8 1639,583.3 1638,583.5 1637,584.2 1636,584.1 1635,583.9 1634,584.1 1633,583.7 1632,584.8 1631,584.4 1630,584.4 1629,584.6 1628,585.5 1627,585.1 1626,585.4 1625,585.8 1624,586.0 1623,587.5 1622,586.8 1621,586.8 1620,586.9 1619,587.9 1618,587.6 1617,588.8 1616,587.9 1615,588.5 1614,588.0 1613,588.8 1612,589.2 1611,589.8 1610,590.1 1609,589.5 1608,589.3 1607,590.6 1606,589.9 1605,591.2 1604,590.5 1603,591.6 1602,590.2 1601,589.5 1600,590.8 1599,591.1 1598,590.2 1597,590.5 1596,591.5 1595,589.9 1594,589.9 1593,590.7 1592,590.1 1591,590.0 1590,589.3 1589,590.8 1588,588.8 1587,589.1 1586,589.0 1585,588.4 1584,587.9 1583,587.6 1582,587.5 1581,586.9 1580,587.4 1579,587.5 1578,586.5 1577,586.9 1576,586.1 1575,586.3 1574,585.9 1573,585.7 1572,586.6 1571,585.1 1570,584.8 1569,584.6 1568,583.9 1567,584.7 1566,584.5 1565,584.4 1564,585.0 1563,584.6 1562,584.2 1561,583.6 1560,584.0 1559,583.8 1558,584.7 1557,585.0 1556,584.7 1555,584.3 1554,584.6 1553,585.0 1552,584.8 1551,585.0 1550,584.9 1549,586.4 1548,586.5 1547,586.0 1546,587.3 1545,586.2 1544,587.6 1543,586.5 1542,588.2 1541,587.4 1540,587.9 1539,588.1 1538,588.1 1537,588.3 1536,588.4 1535,589.2 1534,589.9 1533,589.0 1532,588.9 1531,590.3 1530,590.5 1529,590.4 1528,590.4 1527,590.3 1526,589.8 1525,590.6 1524,590.7 1523,590.7 1522,590.8 1521,590.0 1520,590.9 1519,591.1 1518,589.8 1517,589.9 1516,590.2 1515,590.9 1514,589.4 1513,589.3 1512,589.4 1511,588.6 1510,588.8 1509,588.5 1508,589.0 1507,588.3 1506,587.7 1505,587.7 1504,587.7 1503,586.7 1502,587.4 1501,586.4 1500,586.6 1499,586.3 1498,587.4 1497,586.0 1496,586.1 1495,585.6 1494,585.4 1493,585.8 1492,585.8 1491,585.5 1490,585.5 1489,584.0 1488,585.7 1487,584.3 1486,584.7 1485,584.5 1484,584.3 1483,584.1 1482,585.0 1481,584.4 1480,584.9 1479,584.8 1478,584.5 1477,585.3 1476,585.2 1475,585.5 1474,585.2 1473,586.4 1472,585.3 1471,586.6 1470,586.7 1469,586.0 1468,587.4 1467,587.2 1466,586.6 1465,587.9 1464,588.2 1463,587.7 1462,588.5 1461,588.6 1460,588.5 1459,589.0 1458,589.7 1457,589.0 1456,588.5 1455,590.2 1454,589.4 1453,589.7 1452,589.6 1451,590.7 1450,590.3 1449,590.7 1448,590.1 1447,590.6 1446,590.8 1445,590.2 1444,590.8 1443,590.1 1442,590.4 1441,589.8 1440,590.9 1439,590.2 1438,589.3 1437,590.0 1436,589.2 1435,589.3 1434,589.2 1433,588.6 1432,589.3 1431,589.0 1430,588.4 1429,588.5 1428,587.3 1427,587.4 1426,587.5 1425,587.3 1424,586.6 1423,588.2 1422,586.9 1421,587.5 1420,587.3 1419,586.1 1418,585.7 1417,585.3 1416,584.9 1415,585.5 1414,584.5 1413,584.6 1412,585.3 1411,584.7 1410,584.7 1409,585.8 1408,585.4 1407,585.1 1406,584.6 1405,585.2 1404,584.3 1403,584.4 1402,584.2 1401,584.6 1400,584.6 1399,586.0 1398,585.5 1397,585.3 1396,585.9 1395,585.2 1394,586.3 1393,588.5 1392,587.6 1391,586.7 1390,586.8 1389,588.2 1388,587.4 1387,587.2 1386,587.8 1385,588.3 1384,588.8 1383,588.2 1382,588.6 1381,588.3 1380,589.8 1379,588.9 1378,589.9 1377,589.9 1376,589.7 1375,590.0 1374,589.8 1373,590.3 1372,591.6 1371,590.2 1370,590.8 1369,590.8 1368,590.0 1367,591.2 1366,590.0 1365,590.6 1364,590.2 1363,590.7 1362,590.5 1361,589.5 1360,589.6 1359,589.6 1358,590.0 1357,590.0 1356,588.9 1355,589.4 1354,589.9 1353,588.3 1352,588.6 1351,588.0 1350,588.1 1349,587.3 1348,587.6 1347,587.0 1346,586.0 1345,586.1 1344,586.4 1343,587.0 1342,586.2 1341,585.8 1340,585.6 1339,584.8 1338,584.9 1337,585.9 1336,585.4 1335,585.0 1334,585.1 1333,584.7 1332,584.6 1331,584.9 1330,584.1 1329,584.4 1328,584.7 1327,585.1 1326,584.8 1325,585.0 1324,584.7 1323,585.4 1322,585.1 1321,584.8 1320,586.4 1319,585.3 1318,585.9 1317,586.7 1316,585.8 1315,585.8 1314,586.8 1313,586.7 1312,586.8 1311,587.2 1310,587.7 1309,587.6 1308,588.0 1307,588.1 1306,588.3 1305,588.3 1304,589.0 1303,590.1 1302,589.5 1301,589.3 1300,590.0 1299,590.0 1298,589.9 1297,590.1 1296,589.7 1295,590.8 1294,590.2 1293,590.6 1292,591.0 1291,590.2 1290,591.1 1289,590.3 1288,590.5 1287,590.3 1286,589.8 1285,590.3 1284,590.6 1283,589.9 1282,589.4 1281,590.0 1280,589.5 1279,590.4 1278,589.2 1277,589.3 1276,589.1 1275,587.8 1274,587.4 1273,587.5 1272,587.1 1271,587.0 1270,586.4 1269,586.0 1268,587.1 1267,586.6 1266,585.9 1265,586.2 1264,585.8 1263,585.3 1262,584.6 1261,585.6 1260,584.2 1259,585.0 1258,583.6 1257,584.3 1256,584.3 1255,583.8 1254,584.1 1253,583.7 1252,583.9 1251,584.4 1250,584.6 1249,583.5 1248,585.2 1247,584.8 1246,584.4 1245,585.5 1244,585.6 1243,585.3 1242,585.1 1241,586.1 1240,585.6 1239,585.2 1238,586.4 1237,586.8 1236,586.9 1235,586.4 1234,587.7 1233,587.5 1232,588.1 1231,588.1 1230,588.0 1229,589.6 1228,589.0 1227,589.7 1226,589.5 1225,589.2 1224,589.2 1223,589.2 1222,591.5 1221,590.1 1220,590.5 1219,590.0 1218,590.6 1217,590.3 1216,591.3 1215,590.8 1214,591.2 1213,591.3 1212,591.7 1211,591.2 1210,591.1 1209,590.6 1208,590.9 1207,590.9 1206,590.7 1205,589.8 1204,591.3 1203,590.5 1202,590.0 1201,590.4 1200,589.6 1199,589.0 1198,587.7 1197,587.8 1196,588.6 1195,588.1 1194,587.8 1193,586.9 1192,586.6 1191,586.8 1190,585.1 1189,587.4 1188,585.7 1187,585.7 1186,585.9 1185,583.6 1184,583.7 1183,584.1 1182,583.6 1181,583.3 1180,583.5 1179,583.2 1178,582.9 1177,582.7 1176,582.8 1175,582.7 1174,582.7 1173,582.0 1172,583.7 1171,582.1 1170,583.5 1169,583.3 1168,583.3 1167,584.0 1166,584.1 1165,584.0 1164,584.4 1163,584.5 1162,584.9 1161,585.0 1160,586.2 1159,587.2 1158,586.5 1157,587.8 1156,586.7 1155,588.7 1154,588.5 1153,589.6 1152,589.1 1151,590.1 1150,590.4 1149,591.2 1148,592.1 1147,592.2 1146,592.3 1145,593.5 1144,593.0 1143,592.2 1142,593.4 1141,593.1 1140,594.3 1139,593.8 1138,593.1 1137,594.1 1136,594.9 1135,594.0 1134,594.8 1133,594.1 1132,594.8 1131,593.7 1130,594.1 1129,593.4 1128,593.8 1127,592.2 1126,592.3 1125,592.1 1124,591.4 1123,590.6 1122,590.5 1121,589.1 1120,588.9 1119,590.1 1118,588.0 1117,587.3 1116,586.2 1115,586.5 1114,584.4 1113,584.6 1112,584.1 1111,583.1 1110,581.7 1109,580.8 1108,580.7 1107,579.6 1106,578.2 1105,578.6 1104,578.2 1103,576.9 1102,577.0 1101,576.4 1100,576.2 1099,575.3 1098,575.1 1097,575.8 1096,575.1 1095,575.2 1094,576.2 1093,575.7 1092,576.0 1091,576.5 1090,576.3 1089,576.7 1088,577.7 1087,578.9 1086,580.0 1085,579.9 1084,582.2 1083,583.1 1082,584.5 1081,583.8 1080,585.3 1079,587.1 1078,588.9 1077,590.2 1076,591.2 1075,592.1 1074,594.9 1073,596.1 1072,597.9 1071,598.0 1070,600.8 1069,601.7 1068,603.2 1067,604.7 1066,605.7 1065,606.9 1064,607.9 1063,609.5 1062,609.8 1061,611.4 1060,610.6 1059,610.8 1058,611.1 1057,610.8 1056,610.7 1055,611.4 1054,610.2 1053,609.2 1052,609.6 1051,608.6 1050,608.6 1049,607.5 1048,607.2 1047,605.5 1046,603.3 1045,602.9 1044,601.7 1043,598.1 1042,595.3 1041,592.8 1040,589.4 1039,586.0 1038,583.5 1037,579.3 1036,575.8 1035,572.8 1034,568.9 1033,566.6 1032,560.9 1031,557.2 1030,553.1 1029,549.9 1028,546.2 1027,541.8 1026,537.8 1025,533.2 1024,528.0 1023,523.6 1022,519.8 1021,516.2 1020,512.8 1019,509.5 1018,505.7 1017,503.8 1016,501.2 1015,497.6 1014,494.1 1013,492.9 1012,489.5 1011,486.9 1010,484.8 1009,483.2 1008,480.5 1007,478.2 1006,476.4 1005,474.6 1004,473.5 1003,473.3 1002,473.2 1001,473.0 1000,474.7 999,476.4 998,481.0 997,484.2 996,488.9 995,493.9 994,498.1 993,501.7 992,506.4 991,510.1 990,514.2 989,518.0 988,522.3 987,526.0 986,528.6 985,531.7 984,535.0 983,539.4 982,542.0 981,545.8 980,548.2 979,552.8 978,555.8 977,559.4 976,561.9 975,565.6 974,568.8 973,571.5 972,574.0 971,577.6 970,581.1 969,583.7 968,585.9 967,589.0 966,591.8 965,594.5 964,596.4 963,598.5 962,601.4 961,603.9 960,604.1 959,605.8 958,606.7 957,609.0 956,609.6 955,609.7 954,609.9 953,611.4 952,611.2 951,611.6 950,611.3 949,610.5 948,609.6 947,609.5 946,608.2 945,606.6 944,605.8 943,604.2 942,602.1 941,601.2 940,599.5 939,598.7 938,597.3 937,596.2 936,594.5 935,592.8 934,590.2 933,589.1 932,588.2 931,586.0 930,585.8 929,583.4 928,583.0 927,581.4 926,580.0 925,579.2 924,578.1 923,576.6 922,576.4 921,575.5 920,574.2 919,574.4 918,573.6 917,573.1 916,572.2 915,572.9 914,572.2 913,574.2 912,573.2 911,572.8 910,573.6 909,573.9 908,574.4 907,574.5 906,576.1 905,576.4 904,576.4 903,578.1 902,578.7 901,579.6 900,580.6 899,581.2 898,583.0 897,583.8 896,585.2 895,586.6 894,586.3 893,587.3 892,587.9 891,589.5 890,590.9 889,591.0 888,592.7 887,592.6 886,593.5 885,595.3 884,595.2 883,594.7 882,596.1 881,595.9 880,595.6 879,596.8 878,596.9 877,596.9 876,597.0 875,598.3 874,596.9 873,597.0 872,596.6 871,597.2 870,596.3 869,595.3 868,595.0 867,594.7 866,594.2 865,594.9 864,593.6 863,592.7 862,592.5 861,591.7 860,590.9 859,590.3 858,590.1 857,588.7 856,589.0 855,588.1 854,587.2 853,586.1 852,585.9 851,584.8 850,584.8 849,584.4 848,584.0 847,582.9 846,582.3 845,583.9 844,582.3 843,580.8 842,581.3 841,580.1 840,581.1 839,580.8 838,580.8 837,580.8 836,581.3 835,583.1 834,581.2 833,581.5 832,581.1 831,581.8 830,581.9 829,581.6 828,581.9 827,582.5 826,582.6 825,583.6 824,584.1 823,583.1 822,584.7 821,585.1 820,585.0 819,585.8 818,586.4 817,586.9 816,587.2 815,587.9 814,588.5 813,590.0 812,588.3 811,590.6 810,590.5 809,590.8 808,591.1 807,590.6 806,592.2 805,592.0 804,591.0 803,591.6 802,592.5 801,592.2 800,592.8 799,592.8 798,592.5 797,592.3 796,593.0 795,593.0 794,592.3 793,592.6 792,593.0 791,591.3 790,591.8 789,590.8 788,591.1 787,591.5 786,590.1 785,590.8 784,589.9 783,589.2 782,590.0 781,589.3 780,588.4 779,587.7 778,587.7 777,586.9 776,587.2 775,587.1 774,586.1 773,585.8 772,585.5 771,584.7 770,585.3 769,585.2 768,584.0 767,584.3 766,583.5 765,584.2 764,583.5 763,584.1 762,584.0 761,583.5 760,584.0 759,584.4 758,583.4 757,582.6 756,583.7 755,583.1 754,584.0 753,584.9 752,583.7 751,584.2 750,584.2 749,585.0 748,584.7 747,585.1 746,585.4 745,585.6 744,585.8 743,586.7 742,586.6 741,587.0 740,587.5 739,586.3 738,588.6 737,587.5 736,588.6 735,588.8 734,588.7 733,588.9 732,589.7 731,589.7 730,591.2 729,590.7 728,591.2 727,591.7 726,591.8 725,590.4 724,590.8 723,590.9 722,591.4 721,590.5 720,590.4 719,590.7 718,591.1 717,591.1 716,590.8 715,590.3 714,591.0 713,590.2 712,590.2 711,589.7 710,590.1 709,590.2 708,589.1 707,589.9 706,588.6 705,589.1 704,588.8 703,587.6 702,589.0 701,589.0 700,586.8 699,586.9 698,587.5 697,586.3 696,586.1 695,585.5 694,585.5 693,584.9 692,585.3 691,585.1 690,585.0 689,584.4 688,584.3 687,584.4 686,584.3 685,584.1 684,584.2 683,583.5 682,584.3 681,584.1 680,584.3 679,583.8 678,584.7 677,585.5 676,584.4 675,584.6 674,584.2 673,585.9 672,585.8 671,584.7 670,584.8 669,584.6 668,586.0 667,586.1 666,585.4 665,585.5 664,586.3 663,587.1 662,587.2 661,587.8 660,587.5 659,588.9 658,588.0 657,588.8 656,589.4 655,589.3 654,589.0 653,589.7 652,589.3 651,590.6 650,591.0 649,589.6 648,591.4 647,590.0 646,590.7 645,590.3 644,590.9 643,590.5 642,590.6 641,590.8 640,590.6 639,590.4 638,590.7 637,590.6 636,590.3 635,590.3 634,590.0 633,590.5 632,590.3 631,589.3 630,587.6 629,589.0 628,588.2 627,588.5 626,588.3 625,587.6 624,587.8 623,587.6 622,587.2 621,586.9 620,586.1 619,586.0 618,586.1 617,586.5 616,586.6 615,585.2 614,586.9 613,585.1 612,584.6 611,586.8 610,585.0 609,584.6 608,584.2 607,584.8 606,584.2 605,585.0 604,584.0 603,584.8 602,585.8 601,584.8 600,585.1 599,584.8 598,585.0 597,584.0 596,585.6 595,584.6 594,585.1 593,585.4 592,585.7 591,585.5 590,586.0 589,585.5 588,587.5 587,586.3 586,586.9 585,587.3 584,587.2 583,587.9 582,587.8 581,589.1 580,588.7 579,588.6 578,589.6 577,588.6 576,589.9 575,590.2 574,590.1 573,589.6 572,589.9 571,589.9 570,589.2 569,590.5 568,590.9 567,590.4 566,590.0 565,589.9 564,591.0 563,591.3 562,590.7 561,590.5 560,589.8 559,589.5 558,590.0 557,590.5 556,589.7 555,588.9 554,589.6 553,589.1 552,589.2 551,587.8 550,590.5 549,588.9 548,587.8 547,588.4 546,587.0 545,587.4 544,586.9 543,586.6 542,586.1 541,585.9 540,586.3 539,585.7 538,586.2 537,586.4 536,584.6 535,586.1 534,584.4 533,584.4 532,584.7 531,584.3 530,583.7 529,584.9 528,584.2 527,584.3 526,584.3 525,585.5 524,584.6 523,584.4 522,585.4 521,585.4 520,584.0 519,585.8 518,585.3 517,585.2 516,585.4 515,585.7 514,585.7 513,586.4 512,586.2 511,586.6 510,586.7 509,588.1 508,587.2 507,588.7 506,587.7 505,588.0 504,588.6 503,588.5 502,589.3 501,589.5 500,588.3 499,589.8 498,589.8 497,589.7 496,590.6 495,589.8 494,590.2 493,590.0 492,591.2 491,589.9 490,590.2 489,590.7 488,590.0 487,590.9 486,591.1 485,590.4 484,591.4 483,590.7 482,589.9 481,589.4 480,590.2 479,590.2 478,589.3 477,588.7 476,589.7 475,589.4 474,589.7 473,589.2 472,588.0 471,587.3 470,588.2 469,588.3 468,587.4 467,587.3 466,586.4 465,587.0 464,585.6 463,586.4 462,586.5 461,586.3 460,585.6 459,585.0 458,586.1 457,584.3 456,585.3 455,584.8 454,584.2 453,584.6 452,583.2 451,584.9 450,584.3 449,584.7 448,584.5 447,584.0 446,584.8 445,584.7 444,585.5 443,585.0 442,585.2 441,584.8 440,584.6 439,585.5 438,585.4 437,586.6 436,586.4 435,586.5 434,587.1 433,587.1 432,589.0 431,587.0 430,586.6 429,588.3 428,587.4 427,587.7 426,589.3 425,588.1 424,588.8 423,589.4 422,588.6 421,589.3 420,589.8 419,590.5 418,591.0 417,590.1 416,589.9 415,590.8 414,590.2 413,590.4 412,590.5 411,591.0 410,591.1 409,591.6 408,590.3 407,591.6 406,591.4 405,590.7 404,589.9 403,590.1 402,589.8 401,589.7 400,589.0 399,589.9 398,588.6 397,588.7 396,589.2 395,588.2 394,588.6 393,588.3 392,586.9 391,587.7 390,586.8 389,587.8 388,587.0 387,587.0 386,586.6 385,585.7 384,585.7 383,585.7 382,585.6 381,584.5 380,584.1 379,584.8 378,584.8 377,585.9 376,584.5 375,584.2 374,584.3 373,584.5 372,584.9 371,584.1 370,584.3 369,584.9 368,584.3 367,584.4 366,584.7 365,585.3 364,584.6 363,585.8 362,585.5 361,585.7 360,585.8 359,586.4 358,586.1 357,586.7 356,587.3 355,586.5 354,586.6 353,587.0 352,587.5 351,587.5 350,588.5 349,588.1 348,588.9 347,588.4 346,589.4 345,589.0 344,590.2 343,590.1 342,589.6 341,590.1 340,590.0 339,590.9 338,590.5 337,590.0 336,590.5 335,590.5 334,590.5 333,590.1 332,590.1 331,590.2 330,589.9 329,590.3 328,591.3 327,590.9 326,589.9 325,588.9 324,589.7 323,590.5 322,589.1 321,589.6 320,589.3 319,589.7 318,587.9 317,588.3 316,588.6 315,588.7 314,587.7 313,588.2 312,587.1 311,586.4 310,586.2 309,587.0 308,586.6 307,586.6 306,585.0 305,585.6 304,585.0 303,585.8 302,585.7 301,584.9 300,583.8 299,585.0 298,584.7 297,584.2 296,584.5 295,583.4 294,584.5 293,584.3 292,583.9 291,584.1 290,584.7 289,584.9 288,585.2 287,584.8 286,585.1 285,584.5 284,585.0 283,586.0 282,585.9 281,585.5 280,586.2 279,585.8 278,587.1 277,588.3 276,587.6 275,587.4 274,588.2 273,587.7 272,588.2 271,588.8 270,588.4 269,588.9 268,589.5 267,590.4 266,589.7 265,590.8 264,590.3 263,591.0 262,591.0 261,590.9 260,590.9 259,591.2 258,591.6 257,591.5 256,591.1 255,591.5 254,590.7 253,592.0 252,592.3 251,590.8 250,590.3 249,590.1 248,592.0 247,590.3 246,590.8 245,589.9 244,588.9 243,589.4 242,589.5 241,588.7 240,588.5 239,588.8 238,588.2 237,587.8 236,587.6 235,586.8 234,586.1 233,586.3 232,586.0 231,584.9 230,584.8 229,584.2 228,585.4 227,583.4 226,583.7 225,583.6 224,584.5 223,583.8 222,583.7 221,582.8 220,583.6 219,583.1 218,583.1 217,582.1 216,582.6 215,582.5 214,583.0 213,583.1 212,582.2 211,583.2 210,582.8 209,584.4 208,584.0 207,584.8 206,584.2 205,584.9 204,586.0 203,585.6 202,586.2 201,586.3 200,587.0 199,586.9 198,587.4 197,588.5 196,587.8 195,589.0 194,590.2 193,589.3 192,590.5 191,592.1 190,591.9 189,590.7 188,592.0 187,592.3 186,592.4 185,594.3 184,593.5 183,593.1 182,594.1 181,594.0 180,595.0 179,594.4 178,594.0 177,595.0 176,594.5 175,594.6 174,594.4 173,594.5 172,593.5 171,593.3 170,592.7 169,594.2 168,592.0 167,592.4 166,591.5 165,590.5 164,590.4 163,590.0 162,588.0 161,589.4 160,587.6 159,586.1 158,585.8 157,585.4 156,583.9 155,583.3 154,583.0 153,582.5 152,581.5 151,580.6 150,580.0 149,579.2 148,578.1 147,578.2 146,577.6 145,576.9 144,576.6 143,576.0 142,575.6 141,575.1 140,574.8 139,575.7 138,575.5 137,575.5 136,575.5 135,575.5 134,576.4 133,576.1 132,577.8 131,577.1 130,578.0 129,578.2 128,579.1 127,581.1 126,582.0 125,582.4 124,583.5 123,585.1 122,587.3 121,588.2 120,588.9 119,590.6 118,591.8 117,593.3 116,595.5 115,596.9 114,598.7 113,600.2 112,600.8 111,602.5 110,604.1 109,606.0 108,605.9 107,607.0 106,609.5 105,609.2 104,609.7 103,611.1 102,610.8 101,610.3 100,611.3 99,610.6 98,609.6 97,610.4 96,609.1 95,610.6 94,609.5 93,609.6 92,607.4 91,607.3 90,605.7 89,604.5 88,602.7 87,600.9 86,598.8 85,596.7 84,593.3 83,591.3 82,587.6 81,584.0 80,581.3 79,578.3 78,574.2 77,570.6 76,567.2 75,563.7 74,559.9 73,555.1 72,552.1 71,548.5 70,543.6 69,538.6 68,535.3 67,531.1 66,526.3 65,521.6 64,518.4 63,514.9 62,511.0 61,508.4 60,504.8 59,501.6 58,499.0 57,496.2 56,493.3 55,491.3 54,488.1 53,486.4 52,483.7 51,482.1 50,479.5 49,478.4 48,474.6 47,474.3 46,473.7 45,473.0 44,474.2 43,473.6 42,476.1 41,478.0 40,481.9 39,486.5 38,491.2 37,495.0 36,499.4 35,504.4 34,508.3 33,512.0 32,516.1 31,519.5 30,523.9 29,526.7 28,530.1 27,534.2 26,538.5 25,540.0 24,543.7 23,548.3 22,551.0 21,554.5 20,557.9 19,559.9 18,564.9 17,567.9 16,569.4 15,573.1 14,576.5 13,579.9 12,581.6 11,585.2 10,587.9 9,591.6 8,592.5 7,594.8 6,597.1 5,599.8 4,601.9 3,602.8"/>
<clipPath id="cp"><rect x="3" y="65" width="1914" height="853"/></clipPath>
</defs>
<g clip-path="url(#cp)" fill="#f7d21e" stroke="#f7d21e" stroke-width="1.00" stroke-linejoin="round" shape-rendering="crispEdges">
<use href="#w0" x="126.00" y="-121.20"/>
<use href="#w2" x="120.75" y="-116.15"/>
<use href="#w1" x="115.50" y="-111.10"/>
<use href="#w0" x="110.25" y="-106.05"/>
<use href="#w2" x="105.00" y="-101.00"/>
<use href="#w1" x="99.75" y="-95.95"/>
<use href="#w0" x="94.50" y="-90.90"/>
<use href="#w2" x="89.25" y="-85.85"/>
<use href="#w1" x="84.00" y="-80.80"/>
<use href="#w0" x="78.75" y="-75.75"/>
<use href="#w2" x="73.50" y="-70.70"/>
<use href="#w1" x="68.25" y="-65.65"/>
<use href="#w0" x="63.00" y="-60.60"/>
<use href="#w2" x="57.75" y="-55.55"/>
<use href="#w1" x="52.50" y="-50.50"/>
<use href="#w0" x="47.25" y="-45.45"/>
<use href="#w2" x="42.00" y="-40.40"/>
<use href="#w1" x="36.75" y="-35.35"/>
<use href="#w0" x="31.50" y="-30.30"/>
<use href="#w2" x="26.25" y="-25.25"/>
<use href="#w1" x="21.00" y="-20.20"/>
<use href="#w0" x="15.75" y="-15.15"/>
<use href="#w2" x="10.50" y="-10.10"/>
<use href="#w1" x="5.25" y="-5.05"/>
<use href="#w0" x="0.00" y="0.00"/>
</g>
<path d="M959.5 65V918M956 86.5h7M956 107.5h7M956 128.5h7M956 150.5h7M952 171.5h15M956 192.5h7M956 214.5h7M956 235.5h7M956 256.5h7M952 278.5h15M956 299.5h7M956 320.5h7M956 342.5h7M956 363.5h7M952 384.5h15M956 406.5h7M956 427.5h7M956 448.5h7M956 470.5h7M952 491.5h15M956 512.5h7M956 534.5h7M956 555.5h7M956 576.5h7M952 598.5h15M956 619.5h7M956 640.5h7M956 662.5h7M956 683.5h7M952 704.5h15M956 726.5h7M956 747.5h7M956 768.5h7M956 790.5h7M952 811.5h15M956 832.5h7M956 854.5h7M956 875.5h7M956 896.5h7" stroke="#cfcfcf" stroke-width="1" shape-rendering="crispEdges" fill="none" opacity=".92"/>
<path d="M957 66h15v18l-7.5 8.5l-7.5 -8.5z" fill="#00bfff"/>
<text x="964.5" y="80" text-anchor="middle" style="font-family:'Liberation Sans',sans-serif;font-size:11px;fill:#000">T</text>
<path d="M8 589h21l5.2 10.1l-5.2 10.1h-21z" fill="#fbb425"/>
<text x="18.2" y="603.8" text-anchor="middle" style="font-family:'Liberation Sans',sans-serif;font-size:12.4px;fill:#1a1a1a">C1</text>
<path d="M1880.5 541l14 -10.5h15.5v21h-15.5z" fill="#f0a30a" stroke="#1c1408" stroke-width="1.6"/>
</svg>
</div>
<!-- ===== RESULT PANEL ===== -->
<div id="rp">
 <div class="hd"><div class="t">功能结果面板</div>
  <svg class="abs" style="left:255px;top:8px" width="22" height="14" viewBox="0 0 22 14"><path d="M3 3.2L11 9.4L19 3.2" fill="none" stroke="#f4f4f4" stroke-width="2.6" stroke-linejoin="miter"/></svg>
 </div>
 <div class="box">
  <div class="bt">顺序模式</div>
  <div class="pc">
   <svg class="abs" style="left:0;top:0" width="75" height="71" viewBox="0 0 75 71"><circle cx="36" cy="35.5" r="29" fill="#b0b0b0" stroke="#009dc6" stroke-width="11.4"/>
   <text x="36.5" y="41" text-anchor="middle" style="font:16px 'Liberation Sans',sans-serif;fill:#000">100.0%</text></svg>
  </div>
  <div class="num">25 / 25</div>
 </div>
</div>

<!-- ===== MEASURE BAR ===== -->
<div id="mbar">
<svg class="abs" style="left:7.9px;top:3.8px" width="34" height="34" viewBox="-17 -17 34 34" fill="none" stroke="#f0f0f0" stroke-width="2" stroke-linejoin="round" stroke-linecap="round">
 <g transform="rotate(45)"><rect x="-17.2" y="-3.8" width="34.4" height="7.6" rx="2.2" fill="#22232a"/><path d="M-10.6 -2.4V2.4" stroke="#19a8d8" stroke-width="1.6" stroke-linecap="butt"/><path d="M10.6 -2.4V2.4" stroke="#19a8d8" stroke-width="2.4" stroke-linecap="butt"/></g>
 <g transform="rotate(-45)"><path d="M-11.4 -3.8H15Q17.2 -3.8 17.2 -1.6V1.6Q17.2 3.8 15 3.8H-11.4L-16.6 1Q-17.7 0 -16.6 -1Z" fill="#22232a"/><path d="M-11.2 -3.8V3.8M10.8 -3.8V3.8" stroke-width="1.7"/></g>
</svg>
<div class="abs" style="left:51px;top:3px;width:145px;height:36px;background:#353844;border:1px solid #474a54">
 <div class="abs" style="left:-1px;top:-1px;width:47px;height:36px;background:#474a54"></div>
 <div class="abs" style="left:-1px;top:0;width:47px;text-align:center;font-size:15px;line-height:17px">P1</div>
 <div class="abs" style="left:-1px;top:18px;width:47px;text-align:center;font-size:15px;line-height:17px;color:#f0a30a">C1</div>
 <div class="abs" style="left:45px;top:1.6px;width:98px;text-align:center;font-size:14.7px;line-height:17px">标准差</div>
 <div class="abs" style="left:44px;top:18px;width:98px;text-align:center;font-size:15.5px;line-height:17px">104.541mV</div>
</div>
<div class="abs" style="left:202px;top:4px;width:24px;height:34px;background:#3b3d47"><svg class="abs" style="left:3px;top:6px" width="18" height="22" viewBox="0 0 18 22"><path d="M2.6 11.3H15.4M9 1.6V21" stroke="#fff" stroke-width="1.7"/></svg></div>
<div class="abs" style="left:1562px;top:3px;width:174px;height:36px;background:#353844;border:1px solid #474a54">
 <div class="abs" style="left:-1px;top:-1px;width:66px;height:36px;background:#474a54;text-align:center;font-size:15.5px;line-height:35px">频率计</div>
 <div class="abs" style="left:65px;top:.5px;width:108px;text-align:center;font-size:15.6px;line-height:18px;letter-spacing:.85px">0.0000000</div>
 <div class="abs" style="left:65px;top:18.6px;width:108px;text-align:center;font-size:15.6px;line-height:18px">Hz</div>
</div>

</div>
<div class="abs" style="left:0;top:966px;width:1920px;height:3px;background:#000"></div>
<!-- ===== CHANNEL BAR ===== -->
<div id="cbar">
<div class="ch" style="left:5px"><div class="h" style="background:#f0a30a"><span class="l">C1</span><span class="r">DC1M</span></div>
 <div class="v" style="top:32px">500 mV/div</div><div class="v" style="top:56px">FULL</div><div class="v" style="top:80.5px">1X</div>
 <div class="abs" style="left:0;top:101px;width:120px;height:7px;background:#f0a30a"></div><div class="abs" style="left:0;top:100px;width:120px;height:2px;background:#22232a"></div></div>
<div class="ch" style="left:130px"><div class="h" style="background:#808080;font-weight:bold"><span class="l">C2</span><span class="r" style="color:#000">DC50</span></div>
 <div class="v" style="top:33px">100 mV/div</div><div class="v" style="top:59.3px">1GHz</div><div class="v" style="top:85px">1X</div></div>
<div class="ch" style="left:255px"><div class="h" style="background:#808080"><span class="l">C3</span><span class="r">DC1M</span></div>
 <div class="v" style="top:33px">100 mV/div</div><div class="v" style="top:59.3px">FULL</div><div class="v" style="top:85px">1X</div></div>
<div class="ch" style="left:380px"><div class="h" style="background:#808080"><span class="l">C4</span><span class="r">DC1M</span></div>
 <div class="v" style="top:33px">100 mV/div</div><div class="v" style="top:59.3px">FULL</div><div class="v" style="top:85px">1X</div></div>
<div class="bb" style="left:1583px;width:68px;line-height:110px">数学+</div>
<div class="bb" style="left:1653px;width:68px;line-height:110px">参考+</div>
<div class="bb" style="left:1723px;width:64px;line-height:110px">逻辑+</div>
<div class="bb" style="left:1789px;width:64px;line-height:110px">总线+</div>
<div class="bb" style="left:1855px;width:64px;height:57px;line-height:56px;font-size:16px">G1</div>
<div class="bb" style="left:1855px;top:60px;width:64px;height:51px;line-height:52px;font-size:16px">G2</div>

</div>
</body>
</html>
